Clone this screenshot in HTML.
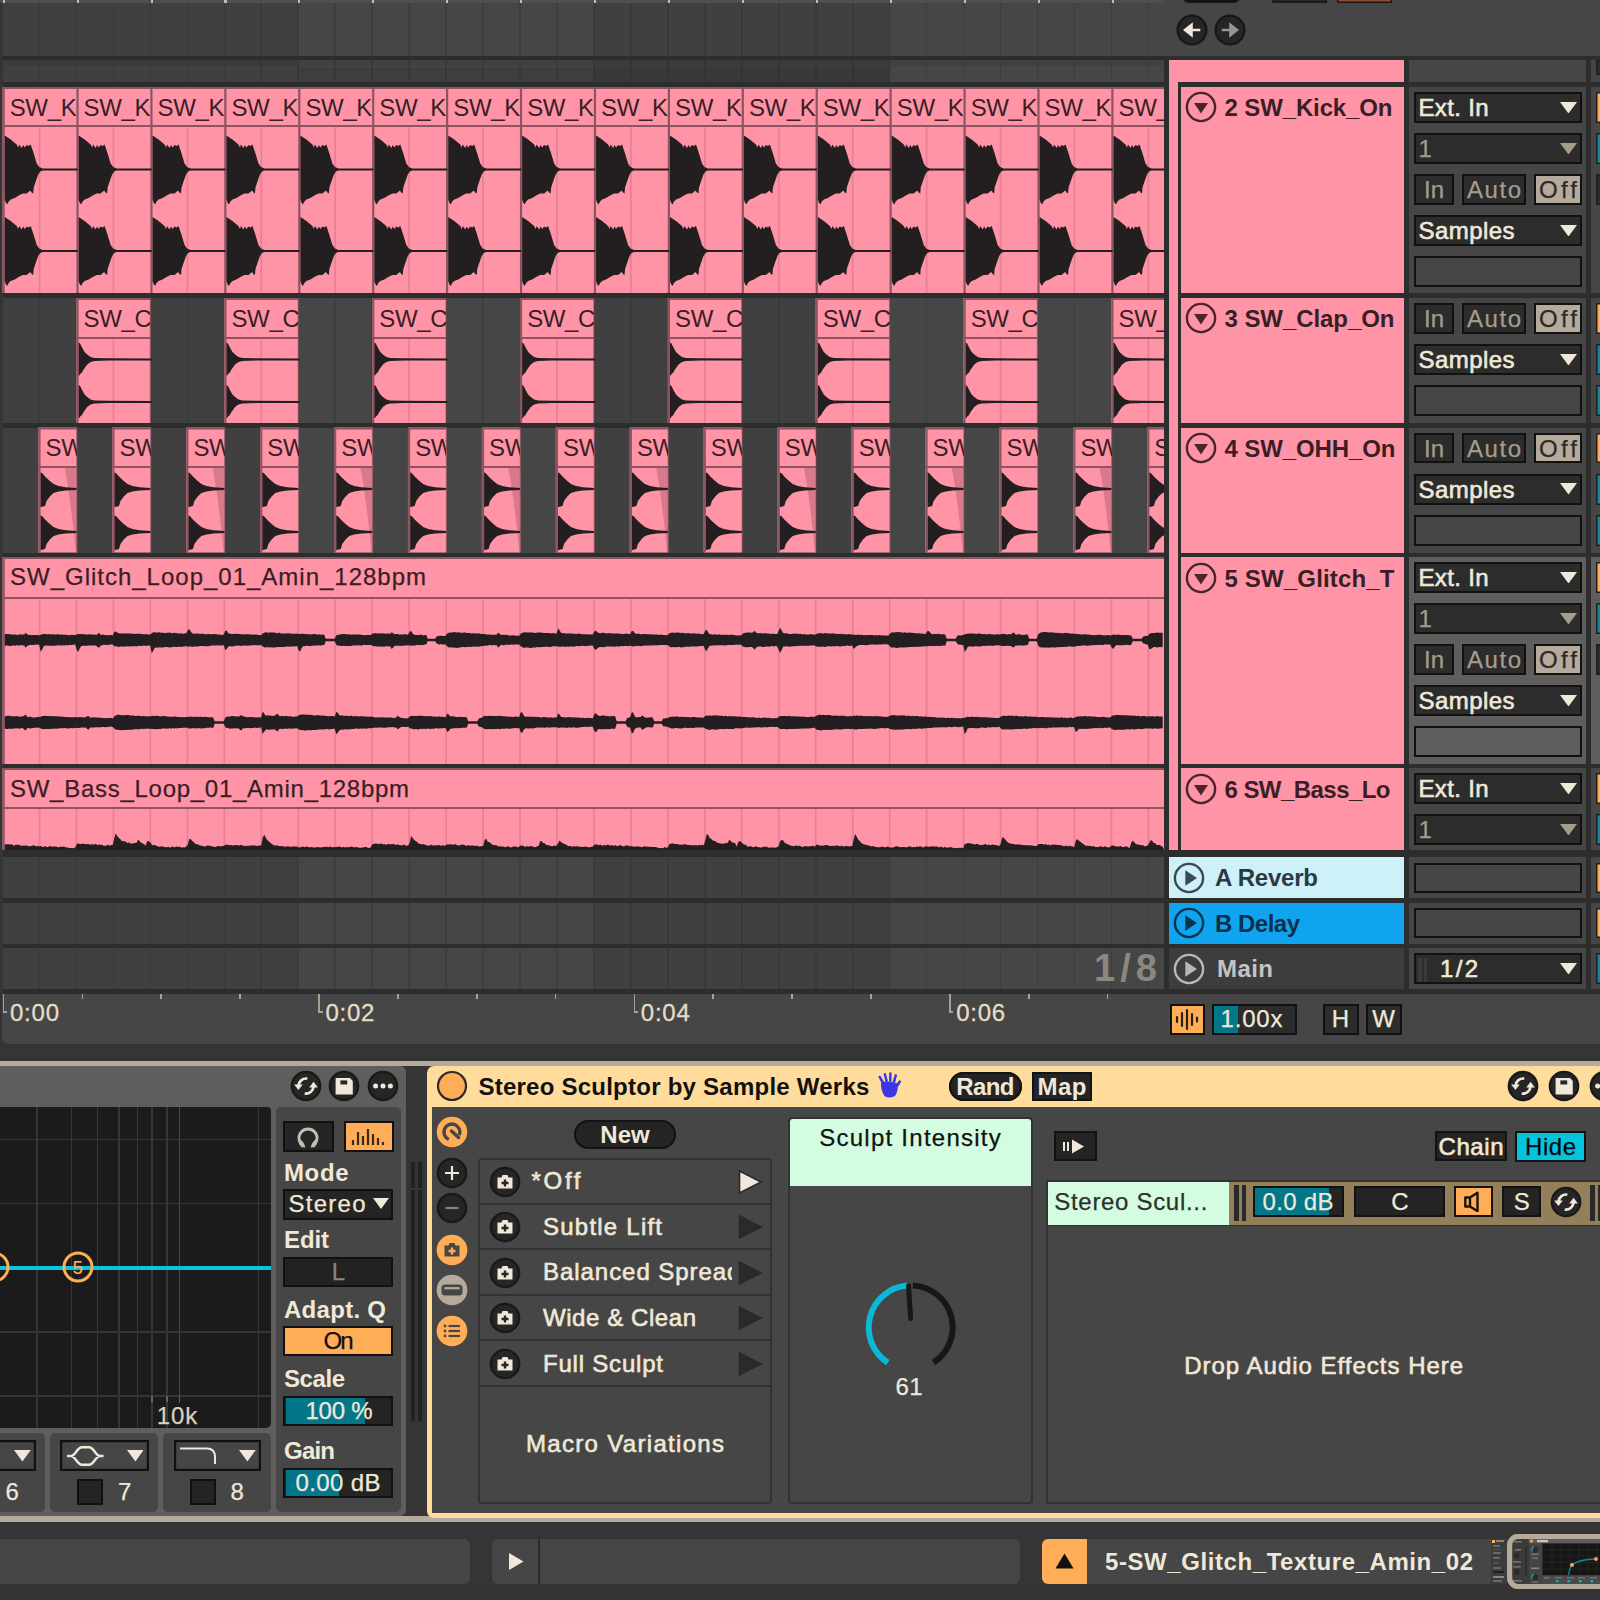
<!DOCTYPE html>
<html><head><meta charset="utf-8"><title>Live</title><style>html,body{margin:0;padding:0;background:#353535;}
body{width:1600px;height:1600px;overflow:hidden;position:relative;font-family:"Liberation Sans",sans-serif;}
#r{position:absolute;left:0;top:0;width:1600px;height:1600px;overflow:hidden;}
#r div,#r svg.abs{position:absolute;}
.t{white-space:nowrap;}
.cl{overflow:hidden;}
.cl span{position:absolute;top:6.6px;font-size:24px;line-height:24px;white-space:nowrap;color:#3a1e26;}
</style></head><body><div id="r">
<div style="left:0px;top:0px;width:4px;height:1062px;background:#353535;"></div>
<div style="left:2.5px;top:0px;width:295.68px;height:994px;background:#404040;"></div>
<div style="left:298.18px;top:0px;width:295.68px;height:994px;background:#464646;"></div>
<div style="left:593.86px;top:0px;width:295.68px;height:994px;background:#404040;"></div>
<div style="left:889.54px;top:0px;width:274.46px;height:994px;background:#464646;"></div>
<div style="left:38.71px;top:3px;width:1.7px;height:991px;background:rgba(0,0,0,0.10);"></div>
<div style="left:75.67px;top:3px;width:1.7px;height:991px;background:rgba(0,0,0,0.10);"></div>
<div style="left:112.63px;top:3px;width:1.7px;height:991px;background:rgba(0,0,0,0.10);"></div>
<div style="left:149.59px;top:3px;width:1.7px;height:991px;background:rgba(0,0,0,0.10);"></div>
<div style="left:186.55px;top:3px;width:1.7px;height:991px;background:rgba(0,0,0,0.10);"></div>
<div style="left:223.51px;top:3px;width:1.7px;height:991px;background:rgba(0,0,0,0.10);"></div>
<div style="left:260.47px;top:3px;width:1.7px;height:991px;background:rgba(0,0,0,0.10);"></div>
<div style="left:297.43px;top:3px;width:1.7px;height:991px;background:rgba(0,0,0,0.10);"></div>
<div style="left:334.39px;top:3px;width:1.7px;height:991px;background:rgba(0,0,0,0.10);"></div>
<div style="left:371.35px;top:3px;width:1.7px;height:991px;background:rgba(0,0,0,0.10);"></div>
<div style="left:408.31px;top:3px;width:1.7px;height:991px;background:rgba(0,0,0,0.10);"></div>
<div style="left:445.27px;top:3px;width:1.7px;height:991px;background:rgba(0,0,0,0.10);"></div>
<div style="left:482.23px;top:3px;width:1.7px;height:991px;background:rgba(0,0,0,0.10);"></div>
<div style="left:519.19px;top:3px;width:1.7px;height:991px;background:rgba(0,0,0,0.10);"></div>
<div style="left:556.15px;top:3px;width:1.7px;height:991px;background:rgba(0,0,0,0.10);"></div>
<div style="left:593.11px;top:3px;width:1.7px;height:991px;background:rgba(0,0,0,0.10);"></div>
<div style="left:630.07px;top:3px;width:1.7px;height:991px;background:rgba(0,0,0,0.10);"></div>
<div style="left:667.03px;top:3px;width:1.7px;height:991px;background:rgba(0,0,0,0.10);"></div>
<div style="left:703.99px;top:3px;width:1.7px;height:991px;background:rgba(0,0,0,0.10);"></div>
<div style="left:740.95px;top:3px;width:1.7px;height:991px;background:rgba(0,0,0,0.10);"></div>
<div style="left:777.91px;top:3px;width:1.7px;height:991px;background:rgba(0,0,0,0.10);"></div>
<div style="left:814.87px;top:3px;width:1.7px;height:991px;background:rgba(0,0,0,0.10);"></div>
<div style="left:851.83px;top:3px;width:1.7px;height:991px;background:rgba(0,0,0,0.10);"></div>
<div style="left:888.79px;top:3px;width:1.7px;height:991px;background:rgba(0,0,0,0.10);"></div>
<div style="left:925.75px;top:3px;width:1.7px;height:991px;background:rgba(0,0,0,0.10);"></div>
<div style="left:962.71px;top:3px;width:1.7px;height:991px;background:rgba(0,0,0,0.10);"></div>
<div style="left:999.67px;top:3px;width:1.7px;height:991px;background:rgba(0,0,0,0.10);"></div>
<div style="left:1036.63px;top:3px;width:1.7px;height:991px;background:rgba(0,0,0,0.10);"></div>
<div style="left:1073.59px;top:3px;width:1.7px;height:991px;background:rgba(0,0,0,0.10);"></div>
<div style="left:1110.55px;top:3px;width:1.7px;height:991px;background:rgba(0,0,0,0.10);"></div>
<div style="left:1147.51px;top:3px;width:1.7px;height:991px;background:rgba(0,0,0,0.10);"></div>
<div style="left:0px;top:0px;width:1164px;height:3px;background:#4f4f4f;"></div>
<div style="left:2.7px;top:0px;width:2.1px;height:3px;background:#c4bca6;"></div>
<div style="left:76.62px;top:0px;width:2.1px;height:3px;background:#c4bca6;"></div>
<div style="left:150.54px;top:0px;width:2.1px;height:3px;background:#c4bca6;"></div>
<div style="left:224.46px;top:0px;width:2.1px;height:3px;background:#c4bca6;"></div>
<div style="left:298.38px;top:0px;width:2.1px;height:3px;background:#c4bca6;"></div>
<div style="left:372.3px;top:0px;width:2.1px;height:3px;background:#c4bca6;"></div>
<div style="left:446.22px;top:0px;width:2.1px;height:3px;background:#c4bca6;"></div>
<div style="left:520.14px;top:0px;width:2.1px;height:3px;background:#c4bca6;"></div>
<div style="left:594.06px;top:0px;width:2.1px;height:3px;background:#c4bca6;"></div>
<div style="left:667.98px;top:0px;width:2.1px;height:3px;background:#c4bca6;"></div>
<div style="left:741.9px;top:0px;width:2.1px;height:3px;background:#c4bca6;"></div>
<div style="left:815.82px;top:0px;width:2.1px;height:3px;background:#c4bca6;"></div>
<div style="left:889.74px;top:0px;width:2.1px;height:3px;background:#c4bca6;"></div>
<div style="left:963.66px;top:0px;width:2.1px;height:3px;background:#c4bca6;"></div>
<div style="left:1037.58px;top:0px;width:2.1px;height:3px;background:#c4bca6;"></div>
<div style="left:1111.5px;top:0px;width:2.1px;height:3px;background:#c4bca6;"></div>
<div style="left:298.18px;top:67px;width:591.36px;height:15px;background:rgba(0,0,0,0.10);"></div>
<div style="left:4px;top:60px;width:1160px;height:6px;background:rgba(0,0,0,0.07);"></div>
<div style="left:3px;top:56px;width:1161px;height:4px;background:#2d2d2d;"></div>
<div style="left:3px;top:82px;width:1161px;height:5px;background:#2d2d2d;"></div>
<div style="left:3px;top:293px;width:1161px;height:5px;background:#2d2d2d;"></div>
<div style="left:3px;top:423px;width:1161px;height:4.5px;background:#2d2d2d;"></div>
<div style="left:3px;top:552.5px;width:1161px;height:4.5px;background:#2d2d2d;"></div>
<div style="left:3px;top:764px;width:1161px;height:4px;background:#2d2d2d;"></div>
<div style="left:3px;top:850px;width:1161px;height:7px;background:#2d2d2d;"></div>
<div style="left:3px;top:897.5px;width:1161px;height:5.5px;background:#2d2d2d;"></div>
<div style="left:3px;top:943.75px;width:1161px;height:4.25px;background:#2d2d2d;"></div>
<div style="left:3px;top:988.75px;width:1161px;height:5.25px;background:#2d2d2d;"></div>
<svg class="abs" style="left:0;top:0" width="1164" height="994" viewBox="0 0 1164 994">
<rect x="2.5" y="87" width="1161.5" height="206" fill="#ff94a6"/>
<rect x="2.5" y="87" width="1161.5" height="2" fill="#8c5561"/>
<rect x="2.5" y="125" width="1161.5" height="2" fill="#8c5561"/>
<rect x="2.50" y="87" width="2.2" height="206" fill="#8c5561"/>
<rect x="38.71" y="127" width="1.7" height="166" fill="rgba(120,40,60,0.18)"/>
<rect x="76.42" y="87" width="2.2" height="206" fill="#8c5561"/>
<rect x="112.63" y="127" width="1.7" height="166" fill="rgba(120,40,60,0.18)"/>
<rect x="150.34" y="87" width="2.2" height="206" fill="#8c5561"/>
<rect x="186.55" y="127" width="1.7" height="166" fill="rgba(120,40,60,0.18)"/>
<rect x="224.26" y="87" width="2.2" height="206" fill="#8c5561"/>
<rect x="260.47" y="127" width="1.7" height="166" fill="rgba(120,40,60,0.18)"/>
<rect x="298.18" y="87" width="2.2" height="206" fill="#8c5561"/>
<rect x="334.39" y="127" width="1.7" height="166" fill="rgba(120,40,60,0.18)"/>
<rect x="372.10" y="87" width="2.2" height="206" fill="#8c5561"/>
<rect x="408.31" y="127" width="1.7" height="166" fill="rgba(120,40,60,0.18)"/>
<rect x="446.02" y="87" width="2.2" height="206" fill="#8c5561"/>
<rect x="482.23" y="127" width="1.7" height="166" fill="rgba(120,40,60,0.18)"/>
<rect x="519.94" y="87" width="2.2" height="206" fill="#8c5561"/>
<rect x="556.15" y="127" width="1.7" height="166" fill="rgba(120,40,60,0.18)"/>
<rect x="593.86" y="87" width="2.2" height="206" fill="#8c5561"/>
<rect x="630.07" y="127" width="1.7" height="166" fill="rgba(120,40,60,0.18)"/>
<rect x="667.78" y="87" width="2.2" height="206" fill="#8c5561"/>
<rect x="703.99" y="127" width="1.7" height="166" fill="rgba(120,40,60,0.18)"/>
<rect x="741.70" y="87" width="2.2" height="206" fill="#8c5561"/>
<rect x="777.91" y="127" width="1.7" height="166" fill="rgba(120,40,60,0.18)"/>
<rect x="815.62" y="87" width="2.2" height="206" fill="#8c5561"/>
<rect x="851.83" y="127" width="1.7" height="166" fill="rgba(120,40,60,0.18)"/>
<rect x="889.54" y="87" width="2.2" height="206" fill="#8c5561"/>
<rect x="925.75" y="127" width="1.7" height="166" fill="rgba(120,40,60,0.18)"/>
<rect x="963.46" y="87" width="2.2" height="206" fill="#8c5561"/>
<rect x="999.67" y="127" width="1.7" height="166" fill="rgba(120,40,60,0.18)"/>
<rect x="1037.38" y="87" width="2.2" height="206" fill="#8c5561"/>
<rect x="1073.59" y="127" width="1.7" height="166" fill="rgba(120,40,60,0.18)"/>
<rect x="1111.30" y="87" width="2.2" height="206" fill="#8c5561"/>
<rect x="1147.51" y="127" width="1.7" height="166" fill="rgba(120,40,60,0.18)"/>
<g fill="#231f20" clip-path="url(#cpA)">
</g>
<path transform="translate(4.70,169.5)" d="M0,-34 L3,-32 L6,-30 L12,-25 L13.5,-22 L14.5,-25 L17,-21.5 L18.5,-24.5 L20,-22 L22,-24.5 L24,-23.5 L26,-25 L27,-22 L29,-16 L32,-6 L34.5,-2.5 L38,-1.1 L73,-1.1 L73,1.1 L38,1.1 L35.5,2 L33.5,5 L31,12 L29,18 L28.5,24 L27,23 L25.5,21 L22,24 L18,24 L14,26 L10,28.5 L6,30 L4,32 L2.5,35 L1,33 L0,30Z" fill="#231f20"/>
<path transform="translate(4.70,251)" d="M0,-34 L3,-32 L6,-30 L12,-25 L13.5,-22 L14.5,-25 L17,-21.5 L18.5,-24.5 L20,-22 L22,-24.5 L24,-23.5 L26,-25 L27,-22 L29,-16 L32,-6 L34.5,-2.5 L38,-1.1 L73,-1.1 L73,1.1 L38,1.1 L35.5,2 L33.5,5 L31,12 L29,18 L28.5,24 L27,23 L25.5,21 L22,24 L18,24 L14,26 L10,28.5 L6,30 L4,32 L2.5,35 L1,33 L0,30Z" fill="#231f20"/>
<path transform="translate(78.62,169.5)" d="M0,-34 L3,-32 L6,-30 L12,-25 L13.5,-22 L14.5,-25 L17,-21.5 L18.5,-24.5 L20,-22 L22,-24.5 L24,-23.5 L26,-25 L27,-22 L29,-16 L32,-6 L34.5,-2.5 L38,-1.1 L73,-1.1 L73,1.1 L38,1.1 L35.5,2 L33.5,5 L31,12 L29,18 L28.5,24 L27,23 L25.5,21 L22,24 L18,24 L14,26 L10,28.5 L6,30 L4,32 L2.5,35 L1,33 L0,30Z" fill="#231f20"/>
<path transform="translate(78.62,251)" d="M0,-34 L3,-32 L6,-30 L12,-25 L13.5,-22 L14.5,-25 L17,-21.5 L18.5,-24.5 L20,-22 L22,-24.5 L24,-23.5 L26,-25 L27,-22 L29,-16 L32,-6 L34.5,-2.5 L38,-1.1 L73,-1.1 L73,1.1 L38,1.1 L35.5,2 L33.5,5 L31,12 L29,18 L28.5,24 L27,23 L25.5,21 L22,24 L18,24 L14,26 L10,28.5 L6,30 L4,32 L2.5,35 L1,33 L0,30Z" fill="#231f20"/>
<path transform="translate(152.54,169.5)" d="M0,-34 L3,-32 L6,-30 L12,-25 L13.5,-22 L14.5,-25 L17,-21.5 L18.5,-24.5 L20,-22 L22,-24.5 L24,-23.5 L26,-25 L27,-22 L29,-16 L32,-6 L34.5,-2.5 L38,-1.1 L73,-1.1 L73,1.1 L38,1.1 L35.5,2 L33.5,5 L31,12 L29,18 L28.5,24 L27,23 L25.5,21 L22,24 L18,24 L14,26 L10,28.5 L6,30 L4,32 L2.5,35 L1,33 L0,30Z" fill="#231f20"/>
<path transform="translate(152.54,251)" d="M0,-34 L3,-32 L6,-30 L12,-25 L13.5,-22 L14.5,-25 L17,-21.5 L18.5,-24.5 L20,-22 L22,-24.5 L24,-23.5 L26,-25 L27,-22 L29,-16 L32,-6 L34.5,-2.5 L38,-1.1 L73,-1.1 L73,1.1 L38,1.1 L35.5,2 L33.5,5 L31,12 L29,18 L28.5,24 L27,23 L25.5,21 L22,24 L18,24 L14,26 L10,28.5 L6,30 L4,32 L2.5,35 L1,33 L0,30Z" fill="#231f20"/>
<path transform="translate(226.46,169.5)" d="M0,-34 L3,-32 L6,-30 L12,-25 L13.5,-22 L14.5,-25 L17,-21.5 L18.5,-24.5 L20,-22 L22,-24.5 L24,-23.5 L26,-25 L27,-22 L29,-16 L32,-6 L34.5,-2.5 L38,-1.1 L73,-1.1 L73,1.1 L38,1.1 L35.5,2 L33.5,5 L31,12 L29,18 L28.5,24 L27,23 L25.5,21 L22,24 L18,24 L14,26 L10,28.5 L6,30 L4,32 L2.5,35 L1,33 L0,30Z" fill="#231f20"/>
<path transform="translate(226.46,251)" d="M0,-34 L3,-32 L6,-30 L12,-25 L13.5,-22 L14.5,-25 L17,-21.5 L18.5,-24.5 L20,-22 L22,-24.5 L24,-23.5 L26,-25 L27,-22 L29,-16 L32,-6 L34.5,-2.5 L38,-1.1 L73,-1.1 L73,1.1 L38,1.1 L35.5,2 L33.5,5 L31,12 L29,18 L28.5,24 L27,23 L25.5,21 L22,24 L18,24 L14,26 L10,28.5 L6,30 L4,32 L2.5,35 L1,33 L0,30Z" fill="#231f20"/>
<path transform="translate(300.38,169.5)" d="M0,-34 L3,-32 L6,-30 L12,-25 L13.5,-22 L14.5,-25 L17,-21.5 L18.5,-24.5 L20,-22 L22,-24.5 L24,-23.5 L26,-25 L27,-22 L29,-16 L32,-6 L34.5,-2.5 L38,-1.1 L73,-1.1 L73,1.1 L38,1.1 L35.5,2 L33.5,5 L31,12 L29,18 L28.5,24 L27,23 L25.5,21 L22,24 L18,24 L14,26 L10,28.5 L6,30 L4,32 L2.5,35 L1,33 L0,30Z" fill="#231f20"/>
<path transform="translate(300.38,251)" d="M0,-34 L3,-32 L6,-30 L12,-25 L13.5,-22 L14.5,-25 L17,-21.5 L18.5,-24.5 L20,-22 L22,-24.5 L24,-23.5 L26,-25 L27,-22 L29,-16 L32,-6 L34.5,-2.5 L38,-1.1 L73,-1.1 L73,1.1 L38,1.1 L35.5,2 L33.5,5 L31,12 L29,18 L28.5,24 L27,23 L25.5,21 L22,24 L18,24 L14,26 L10,28.5 L6,30 L4,32 L2.5,35 L1,33 L0,30Z" fill="#231f20"/>
<path transform="translate(374.30,169.5)" d="M0,-34 L3,-32 L6,-30 L12,-25 L13.5,-22 L14.5,-25 L17,-21.5 L18.5,-24.5 L20,-22 L22,-24.5 L24,-23.5 L26,-25 L27,-22 L29,-16 L32,-6 L34.5,-2.5 L38,-1.1 L73,-1.1 L73,1.1 L38,1.1 L35.5,2 L33.5,5 L31,12 L29,18 L28.5,24 L27,23 L25.5,21 L22,24 L18,24 L14,26 L10,28.5 L6,30 L4,32 L2.5,35 L1,33 L0,30Z" fill="#231f20"/>
<path transform="translate(374.30,251)" d="M0,-34 L3,-32 L6,-30 L12,-25 L13.5,-22 L14.5,-25 L17,-21.5 L18.5,-24.5 L20,-22 L22,-24.5 L24,-23.5 L26,-25 L27,-22 L29,-16 L32,-6 L34.5,-2.5 L38,-1.1 L73,-1.1 L73,1.1 L38,1.1 L35.5,2 L33.5,5 L31,12 L29,18 L28.5,24 L27,23 L25.5,21 L22,24 L18,24 L14,26 L10,28.5 L6,30 L4,32 L2.5,35 L1,33 L0,30Z" fill="#231f20"/>
<path transform="translate(448.22,169.5)" d="M0,-34 L3,-32 L6,-30 L12,-25 L13.5,-22 L14.5,-25 L17,-21.5 L18.5,-24.5 L20,-22 L22,-24.5 L24,-23.5 L26,-25 L27,-22 L29,-16 L32,-6 L34.5,-2.5 L38,-1.1 L73,-1.1 L73,1.1 L38,1.1 L35.5,2 L33.5,5 L31,12 L29,18 L28.5,24 L27,23 L25.5,21 L22,24 L18,24 L14,26 L10,28.5 L6,30 L4,32 L2.5,35 L1,33 L0,30Z" fill="#231f20"/>
<path transform="translate(448.22,251)" d="M0,-34 L3,-32 L6,-30 L12,-25 L13.5,-22 L14.5,-25 L17,-21.5 L18.5,-24.5 L20,-22 L22,-24.5 L24,-23.5 L26,-25 L27,-22 L29,-16 L32,-6 L34.5,-2.5 L38,-1.1 L73,-1.1 L73,1.1 L38,1.1 L35.5,2 L33.5,5 L31,12 L29,18 L28.5,24 L27,23 L25.5,21 L22,24 L18,24 L14,26 L10,28.5 L6,30 L4,32 L2.5,35 L1,33 L0,30Z" fill="#231f20"/>
<path transform="translate(522.14,169.5)" d="M0,-34 L3,-32 L6,-30 L12,-25 L13.5,-22 L14.5,-25 L17,-21.5 L18.5,-24.5 L20,-22 L22,-24.5 L24,-23.5 L26,-25 L27,-22 L29,-16 L32,-6 L34.5,-2.5 L38,-1.1 L73,-1.1 L73,1.1 L38,1.1 L35.5,2 L33.5,5 L31,12 L29,18 L28.5,24 L27,23 L25.5,21 L22,24 L18,24 L14,26 L10,28.5 L6,30 L4,32 L2.5,35 L1,33 L0,30Z" fill="#231f20"/>
<path transform="translate(522.14,251)" d="M0,-34 L3,-32 L6,-30 L12,-25 L13.5,-22 L14.5,-25 L17,-21.5 L18.5,-24.5 L20,-22 L22,-24.5 L24,-23.5 L26,-25 L27,-22 L29,-16 L32,-6 L34.5,-2.5 L38,-1.1 L73,-1.1 L73,1.1 L38,1.1 L35.5,2 L33.5,5 L31,12 L29,18 L28.5,24 L27,23 L25.5,21 L22,24 L18,24 L14,26 L10,28.5 L6,30 L4,32 L2.5,35 L1,33 L0,30Z" fill="#231f20"/>
<path transform="translate(596.06,169.5)" d="M0,-34 L3,-32 L6,-30 L12,-25 L13.5,-22 L14.5,-25 L17,-21.5 L18.5,-24.5 L20,-22 L22,-24.5 L24,-23.5 L26,-25 L27,-22 L29,-16 L32,-6 L34.5,-2.5 L38,-1.1 L73,-1.1 L73,1.1 L38,1.1 L35.5,2 L33.5,5 L31,12 L29,18 L28.5,24 L27,23 L25.5,21 L22,24 L18,24 L14,26 L10,28.5 L6,30 L4,32 L2.5,35 L1,33 L0,30Z" fill="#231f20"/>
<path transform="translate(596.06,251)" d="M0,-34 L3,-32 L6,-30 L12,-25 L13.5,-22 L14.5,-25 L17,-21.5 L18.5,-24.5 L20,-22 L22,-24.5 L24,-23.5 L26,-25 L27,-22 L29,-16 L32,-6 L34.5,-2.5 L38,-1.1 L73,-1.1 L73,1.1 L38,1.1 L35.5,2 L33.5,5 L31,12 L29,18 L28.5,24 L27,23 L25.5,21 L22,24 L18,24 L14,26 L10,28.5 L6,30 L4,32 L2.5,35 L1,33 L0,30Z" fill="#231f20"/>
<path transform="translate(669.98,169.5)" d="M0,-34 L3,-32 L6,-30 L12,-25 L13.5,-22 L14.5,-25 L17,-21.5 L18.5,-24.5 L20,-22 L22,-24.5 L24,-23.5 L26,-25 L27,-22 L29,-16 L32,-6 L34.5,-2.5 L38,-1.1 L73,-1.1 L73,1.1 L38,1.1 L35.5,2 L33.5,5 L31,12 L29,18 L28.5,24 L27,23 L25.5,21 L22,24 L18,24 L14,26 L10,28.5 L6,30 L4,32 L2.5,35 L1,33 L0,30Z" fill="#231f20"/>
<path transform="translate(669.98,251)" d="M0,-34 L3,-32 L6,-30 L12,-25 L13.5,-22 L14.5,-25 L17,-21.5 L18.5,-24.5 L20,-22 L22,-24.5 L24,-23.5 L26,-25 L27,-22 L29,-16 L32,-6 L34.5,-2.5 L38,-1.1 L73,-1.1 L73,1.1 L38,1.1 L35.5,2 L33.5,5 L31,12 L29,18 L28.5,24 L27,23 L25.5,21 L22,24 L18,24 L14,26 L10,28.5 L6,30 L4,32 L2.5,35 L1,33 L0,30Z" fill="#231f20"/>
<path transform="translate(743.90,169.5)" d="M0,-34 L3,-32 L6,-30 L12,-25 L13.5,-22 L14.5,-25 L17,-21.5 L18.5,-24.5 L20,-22 L22,-24.5 L24,-23.5 L26,-25 L27,-22 L29,-16 L32,-6 L34.5,-2.5 L38,-1.1 L73,-1.1 L73,1.1 L38,1.1 L35.5,2 L33.5,5 L31,12 L29,18 L28.5,24 L27,23 L25.5,21 L22,24 L18,24 L14,26 L10,28.5 L6,30 L4,32 L2.5,35 L1,33 L0,30Z" fill="#231f20"/>
<path transform="translate(743.90,251)" d="M0,-34 L3,-32 L6,-30 L12,-25 L13.5,-22 L14.5,-25 L17,-21.5 L18.5,-24.5 L20,-22 L22,-24.5 L24,-23.5 L26,-25 L27,-22 L29,-16 L32,-6 L34.5,-2.5 L38,-1.1 L73,-1.1 L73,1.1 L38,1.1 L35.5,2 L33.5,5 L31,12 L29,18 L28.5,24 L27,23 L25.5,21 L22,24 L18,24 L14,26 L10,28.5 L6,30 L4,32 L2.5,35 L1,33 L0,30Z" fill="#231f20"/>
<path transform="translate(817.82,169.5)" d="M0,-34 L3,-32 L6,-30 L12,-25 L13.5,-22 L14.5,-25 L17,-21.5 L18.5,-24.5 L20,-22 L22,-24.5 L24,-23.5 L26,-25 L27,-22 L29,-16 L32,-6 L34.5,-2.5 L38,-1.1 L73,-1.1 L73,1.1 L38,1.1 L35.5,2 L33.5,5 L31,12 L29,18 L28.5,24 L27,23 L25.5,21 L22,24 L18,24 L14,26 L10,28.5 L6,30 L4,32 L2.5,35 L1,33 L0,30Z" fill="#231f20"/>
<path transform="translate(817.82,251)" d="M0,-34 L3,-32 L6,-30 L12,-25 L13.5,-22 L14.5,-25 L17,-21.5 L18.5,-24.5 L20,-22 L22,-24.5 L24,-23.5 L26,-25 L27,-22 L29,-16 L32,-6 L34.5,-2.5 L38,-1.1 L73,-1.1 L73,1.1 L38,1.1 L35.5,2 L33.5,5 L31,12 L29,18 L28.5,24 L27,23 L25.5,21 L22,24 L18,24 L14,26 L10,28.5 L6,30 L4,32 L2.5,35 L1,33 L0,30Z" fill="#231f20"/>
<path transform="translate(891.74,169.5)" d="M0,-34 L3,-32 L6,-30 L12,-25 L13.5,-22 L14.5,-25 L17,-21.5 L18.5,-24.5 L20,-22 L22,-24.5 L24,-23.5 L26,-25 L27,-22 L29,-16 L32,-6 L34.5,-2.5 L38,-1.1 L73,-1.1 L73,1.1 L38,1.1 L35.5,2 L33.5,5 L31,12 L29,18 L28.5,24 L27,23 L25.5,21 L22,24 L18,24 L14,26 L10,28.5 L6,30 L4,32 L2.5,35 L1,33 L0,30Z" fill="#231f20"/>
<path transform="translate(891.74,251)" d="M0,-34 L3,-32 L6,-30 L12,-25 L13.5,-22 L14.5,-25 L17,-21.5 L18.5,-24.5 L20,-22 L22,-24.5 L24,-23.5 L26,-25 L27,-22 L29,-16 L32,-6 L34.5,-2.5 L38,-1.1 L73,-1.1 L73,1.1 L38,1.1 L35.5,2 L33.5,5 L31,12 L29,18 L28.5,24 L27,23 L25.5,21 L22,24 L18,24 L14,26 L10,28.5 L6,30 L4,32 L2.5,35 L1,33 L0,30Z" fill="#231f20"/>
<path transform="translate(965.66,169.5)" d="M0,-34 L3,-32 L6,-30 L12,-25 L13.5,-22 L14.5,-25 L17,-21.5 L18.5,-24.5 L20,-22 L22,-24.5 L24,-23.5 L26,-25 L27,-22 L29,-16 L32,-6 L34.5,-2.5 L38,-1.1 L73,-1.1 L73,1.1 L38,1.1 L35.5,2 L33.5,5 L31,12 L29,18 L28.5,24 L27,23 L25.5,21 L22,24 L18,24 L14,26 L10,28.5 L6,30 L4,32 L2.5,35 L1,33 L0,30Z" fill="#231f20"/>
<path transform="translate(965.66,251)" d="M0,-34 L3,-32 L6,-30 L12,-25 L13.5,-22 L14.5,-25 L17,-21.5 L18.5,-24.5 L20,-22 L22,-24.5 L24,-23.5 L26,-25 L27,-22 L29,-16 L32,-6 L34.5,-2.5 L38,-1.1 L73,-1.1 L73,1.1 L38,1.1 L35.5,2 L33.5,5 L31,12 L29,18 L28.5,24 L27,23 L25.5,21 L22,24 L18,24 L14,26 L10,28.5 L6,30 L4,32 L2.5,35 L1,33 L0,30Z" fill="#231f20"/>
<path transform="translate(1039.58,169.5)" d="M0,-34 L3,-32 L6,-30 L12,-25 L13.5,-22 L14.5,-25 L17,-21.5 L18.5,-24.5 L20,-22 L22,-24.5 L24,-23.5 L26,-25 L27,-22 L29,-16 L32,-6 L34.5,-2.5 L38,-1.1 L73,-1.1 L73,1.1 L38,1.1 L35.5,2 L33.5,5 L31,12 L29,18 L28.5,24 L27,23 L25.5,21 L22,24 L18,24 L14,26 L10,28.5 L6,30 L4,32 L2.5,35 L1,33 L0,30Z" fill="#231f20"/>
<path transform="translate(1039.58,251)" d="M0,-34 L3,-32 L6,-30 L12,-25 L13.5,-22 L14.5,-25 L17,-21.5 L18.5,-24.5 L20,-22 L22,-24.5 L24,-23.5 L26,-25 L27,-22 L29,-16 L32,-6 L34.5,-2.5 L38,-1.1 L73,-1.1 L73,1.1 L38,1.1 L35.5,2 L33.5,5 L31,12 L29,18 L28.5,24 L27,23 L25.5,21 L22,24 L18,24 L14,26 L10,28.5 L6,30 L4,32 L2.5,35 L1,33 L0,30Z" fill="#231f20"/>
<path transform="translate(1113.50,169.5)" d="M0,-34 L3,-32 L6,-30 L12,-25 L13.5,-22 L14.5,-25 L17,-21.5 L18.5,-24.5 L20,-22 L22,-24.5 L24,-23.5 L26,-25 L27,-22 L29,-16 L32,-6 L34.5,-2.5 L38,-1.1 L73,-1.1 L73,1.1 L38,1.1 L35.5,2 L33.5,5 L31,12 L29,18 L28.5,24 L27,23 L25.5,21 L22,24 L18,24 L14,26 L10,28.5 L6,30 L4,32 L2.5,35 L1,33 L0,30Z" fill="#231f20"/>
<path transform="translate(1113.50,251)" d="M0,-34 L3,-32 L6,-30 L12,-25 L13.5,-22 L14.5,-25 L17,-21.5 L18.5,-24.5 L20,-22 L22,-24.5 L24,-23.5 L26,-25 L27,-22 L29,-16 L32,-6 L34.5,-2.5 L38,-1.1 L73,-1.1 L73,1.1 L38,1.1 L35.5,2 L33.5,5 L31,12 L29,18 L28.5,24 L27,23 L25.5,21 L22,24 L18,24 L14,26 L10,28.5 L6,30 L4,32 L2.5,35 L1,33 L0,30Z" fill="#231f20"/>
<rect x="76.42" y="298" width="73.92" height="125" fill="#ff94a6"/>
<rect x="76.42" y="298" width="73.92" height="2" fill="#8c5561"/>
<rect x="76.42" y="337" width="73.92" height="2" fill="#8c5561"/>
<rect x="76.42" y="298" width="2.2" height="125" fill="#8c5561"/>
<rect x="149.74" y="298" width="1.2" height="125" fill="#8c5561" opacity="0.6"/>
<rect x="112.63" y="339" width="1.7" height="84" fill="rgba(120,40,60,0.18)"/>
<path transform="translate(78.62,359.5)" d="M0,-17 L1.5,-16 L4,-11 L6,-7.5 L8.6,-5 L12,-2.5 L16,-1.6 L30,-1.2 L73,-0.9 L73,0.9 L30,1.1 L16,1.5 L12,2.5 L8.6,5 L5,10 L3,13.5 L2,14 L0.7,16 L0,16Z" fill="#231f20"/>
<path transform="translate(78.62,402)" d="M0,-17 L1.5,-16 L4,-11 L6,-7.5 L8.6,-5 L12,-2.5 L16,-1.6 L30,-1.2 L73,-0.9 L73,0.9 L30,1.1 L16,1.5 L12,2.5 L8.6,5 L5,10 L3,13.5 L2,14 L0.7,16 L0,16Z" fill="#231f20"/>
<rect x="224.26" y="298" width="73.92" height="125" fill="#ff94a6"/>
<rect x="224.26" y="298" width="73.92" height="2" fill="#8c5561"/>
<rect x="224.26" y="337" width="73.92" height="2" fill="#8c5561"/>
<rect x="224.26" y="298" width="2.2" height="125" fill="#8c5561"/>
<rect x="297.58" y="298" width="1.2" height="125" fill="#8c5561" opacity="0.6"/>
<rect x="260.47" y="339" width="1.7" height="84" fill="rgba(120,40,60,0.18)"/>
<path transform="translate(226.46,359.5)" d="M0,-17 L1.5,-16 L4,-11 L6,-7.5 L8.6,-5 L12,-2.5 L16,-1.6 L30,-1.2 L73,-0.9 L73,0.9 L30,1.1 L16,1.5 L12,2.5 L8.6,5 L5,10 L3,13.5 L2,14 L0.7,16 L0,16Z" fill="#231f20"/>
<path transform="translate(226.46,402)" d="M0,-17 L1.5,-16 L4,-11 L6,-7.5 L8.6,-5 L12,-2.5 L16,-1.6 L30,-1.2 L73,-0.9 L73,0.9 L30,1.1 L16,1.5 L12,2.5 L8.6,5 L5,10 L3,13.5 L2,14 L0.7,16 L0,16Z" fill="#231f20"/>
<rect x="372.10" y="298" width="73.92" height="125" fill="#ff94a6"/>
<rect x="372.10" y="298" width="73.92" height="2" fill="#8c5561"/>
<rect x="372.10" y="337" width="73.92" height="2" fill="#8c5561"/>
<rect x="372.10" y="298" width="2.2" height="125" fill="#8c5561"/>
<rect x="445.42" y="298" width="1.2" height="125" fill="#8c5561" opacity="0.6"/>
<rect x="408.31" y="339" width="1.7" height="84" fill="rgba(120,40,60,0.18)"/>
<path transform="translate(374.30,359.5)" d="M0,-17 L1.5,-16 L4,-11 L6,-7.5 L8.6,-5 L12,-2.5 L16,-1.6 L30,-1.2 L73,-0.9 L73,0.9 L30,1.1 L16,1.5 L12,2.5 L8.6,5 L5,10 L3,13.5 L2,14 L0.7,16 L0,16Z" fill="#231f20"/>
<path transform="translate(374.30,402)" d="M0,-17 L1.5,-16 L4,-11 L6,-7.5 L8.6,-5 L12,-2.5 L16,-1.6 L30,-1.2 L73,-0.9 L73,0.9 L30,1.1 L16,1.5 L12,2.5 L8.6,5 L5,10 L3,13.5 L2,14 L0.7,16 L0,16Z" fill="#231f20"/>
<rect x="519.94" y="298" width="73.92" height="125" fill="#ff94a6"/>
<rect x="519.94" y="298" width="73.92" height="2" fill="#8c5561"/>
<rect x="519.94" y="337" width="73.92" height="2" fill="#8c5561"/>
<rect x="519.94" y="298" width="2.2" height="125" fill="#8c5561"/>
<rect x="593.26" y="298" width="1.2" height="125" fill="#8c5561" opacity="0.6"/>
<rect x="556.15" y="339" width="1.7" height="84" fill="rgba(120,40,60,0.18)"/>
<path transform="translate(522.14,359.5)" d="M0,-17 L1.5,-16 L4,-11 L6,-7.5 L8.6,-5 L12,-2.5 L16,-1.6 L30,-1.2 L73,-0.9 L73,0.9 L30,1.1 L16,1.5 L12,2.5 L8.6,5 L5,10 L3,13.5 L2,14 L0.7,16 L0,16Z" fill="#231f20"/>
<path transform="translate(522.14,402)" d="M0,-17 L1.5,-16 L4,-11 L6,-7.5 L8.6,-5 L12,-2.5 L16,-1.6 L30,-1.2 L73,-0.9 L73,0.9 L30,1.1 L16,1.5 L12,2.5 L8.6,5 L5,10 L3,13.5 L2,14 L0.7,16 L0,16Z" fill="#231f20"/>
<rect x="667.78" y="298" width="73.92" height="125" fill="#ff94a6"/>
<rect x="667.78" y="298" width="73.92" height="2" fill="#8c5561"/>
<rect x="667.78" y="337" width="73.92" height="2" fill="#8c5561"/>
<rect x="667.78" y="298" width="2.2" height="125" fill="#8c5561"/>
<rect x="741.10" y="298" width="1.2" height="125" fill="#8c5561" opacity="0.6"/>
<rect x="703.99" y="339" width="1.7" height="84" fill="rgba(120,40,60,0.18)"/>
<path transform="translate(669.98,359.5)" d="M0,-17 L1.5,-16 L4,-11 L6,-7.5 L8.6,-5 L12,-2.5 L16,-1.6 L30,-1.2 L73,-0.9 L73,0.9 L30,1.1 L16,1.5 L12,2.5 L8.6,5 L5,10 L3,13.5 L2,14 L0.7,16 L0,16Z" fill="#231f20"/>
<path transform="translate(669.98,402)" d="M0,-17 L1.5,-16 L4,-11 L6,-7.5 L8.6,-5 L12,-2.5 L16,-1.6 L30,-1.2 L73,-0.9 L73,0.9 L30,1.1 L16,1.5 L12,2.5 L8.6,5 L5,10 L3,13.5 L2,14 L0.7,16 L0,16Z" fill="#231f20"/>
<rect x="815.62" y="298" width="73.92" height="125" fill="#ff94a6"/>
<rect x="815.62" y="298" width="73.92" height="2" fill="#8c5561"/>
<rect x="815.62" y="337" width="73.92" height="2" fill="#8c5561"/>
<rect x="815.62" y="298" width="2.2" height="125" fill="#8c5561"/>
<rect x="888.94" y="298" width="1.2" height="125" fill="#8c5561" opacity="0.6"/>
<rect x="851.83" y="339" width="1.7" height="84" fill="rgba(120,40,60,0.18)"/>
<path transform="translate(817.82,359.5)" d="M0,-17 L1.5,-16 L4,-11 L6,-7.5 L8.6,-5 L12,-2.5 L16,-1.6 L30,-1.2 L73,-0.9 L73,0.9 L30,1.1 L16,1.5 L12,2.5 L8.6,5 L5,10 L3,13.5 L2,14 L0.7,16 L0,16Z" fill="#231f20"/>
<path transform="translate(817.82,402)" d="M0,-17 L1.5,-16 L4,-11 L6,-7.5 L8.6,-5 L12,-2.5 L16,-1.6 L30,-1.2 L73,-0.9 L73,0.9 L30,1.1 L16,1.5 L12,2.5 L8.6,5 L5,10 L3,13.5 L2,14 L0.7,16 L0,16Z" fill="#231f20"/>
<rect x="963.46" y="298" width="73.92" height="125" fill="#ff94a6"/>
<rect x="963.46" y="298" width="73.92" height="2" fill="#8c5561"/>
<rect x="963.46" y="337" width="73.92" height="2" fill="#8c5561"/>
<rect x="963.46" y="298" width="2.2" height="125" fill="#8c5561"/>
<rect x="1036.78" y="298" width="1.2" height="125" fill="#8c5561" opacity="0.6"/>
<rect x="999.67" y="339" width="1.7" height="84" fill="rgba(120,40,60,0.18)"/>
<path transform="translate(965.66,359.5)" d="M0,-17 L1.5,-16 L4,-11 L6,-7.5 L8.6,-5 L12,-2.5 L16,-1.6 L30,-1.2 L73,-0.9 L73,0.9 L30,1.1 L16,1.5 L12,2.5 L8.6,5 L5,10 L3,13.5 L2,14 L0.7,16 L0,16Z" fill="#231f20"/>
<path transform="translate(965.66,402)" d="M0,-17 L1.5,-16 L4,-11 L6,-7.5 L8.6,-5 L12,-2.5 L16,-1.6 L30,-1.2 L73,-0.9 L73,0.9 L30,1.1 L16,1.5 L12,2.5 L8.6,5 L5,10 L3,13.5 L2,14 L0.7,16 L0,16Z" fill="#231f20"/>
<rect x="1111.30" y="298" width="52.70" height="125" fill="#ff94a6"/>
<rect x="1111.30" y="298" width="52.70" height="2" fill="#8c5561"/>
<rect x="1111.30" y="337" width="52.70" height="2" fill="#8c5561"/>
<rect x="1111.30" y="298" width="2.2" height="125" fill="#8c5561"/>
<rect x="1147.51" y="339" width="1.7" height="84" fill="rgba(120,40,60,0.18)"/>
<path transform="translate(1113.50,359.5)" d="M0,-17 L1.5,-16 L4,-11 L6,-7.5 L8.6,-5 L12,-2.5 L16,-1.6 L30,-1.2 L73,-0.9 L73,0.9 L30,1.1 L16,1.5 L12,2.5 L8.6,5 L5,10 L3,13.5 L2,14 L0.7,16 L0,16Z" fill="#231f20"/>
<path transform="translate(1113.50,402)" d="M0,-17 L1.5,-16 L4,-11 L6,-7.5 L8.6,-5 L12,-2.5 L16,-1.6 L30,-1.2 L73,-0.9 L73,0.9 L30,1.1 L16,1.5 L12,2.5 L8.6,5 L5,10 L3,13.5 L2,14 L0.7,16 L0,16Z" fill="#231f20"/>
<rect x="38.36" y="427.5" width="38.46" height="125.0" fill="#ff94a6"/>
<rect x="38.36" y="427.5" width="38.46" height="2" fill="#8c5561"/>
<rect x="38.36" y="466" width="38.46" height="2" fill="#8c5561"/>
<path d="M64.82,468 Q70.82,500 75.82,552.5 L76.82,552.5 L76.82,468Z" fill="#d87a8c"/>
<rect x="38.36" y="427.5" width="2.2" height="125.0" fill="#8c5561"/>
<rect x="76.22" y="427.5" width="1.2" height="125.0" fill="#8c5561" opacity="0.6"/>
<path transform="translate(40.56,489)" d="M0,-16.5 L1.5,-16 L5,-12 L9.3,-8 L13,-5 L18,-3 L25,-1.8 L36,-1 L36,1 L25,1.5 L18,2.5 L13,4 L9.3,7.5 L6,12 L4.5,17 L0.5,18 L0,18Z" fill="#231f20"/>
<path transform="translate(40.56,532)" d="M0,-16.5 L1.5,-16 L5,-12 L9.3,-8 L13,-5 L18,-3 L25,-1.8 L36,-1 L36,1 L25,1.5 L18,2.5 L13,4 L9.3,7.5 L6,12 L4.5,17 L0.5,18 L0,18Z" fill="#231f20"/>
<rect x="112.28" y="427.5" width="38.46" height="125.0" fill="#ff94a6"/>
<rect x="112.28" y="427.5" width="38.46" height="2" fill="#8c5561"/>
<rect x="112.28" y="466" width="38.46" height="2" fill="#8c5561"/>
<rect x="112.28" y="427.5" width="2.2" height="125.0" fill="#8c5561"/>
<rect x="150.14" y="427.5" width="1.2" height="125.0" fill="#8c5561" opacity="0.6"/>
<path transform="translate(114.48,489)" d="M0,-16.5 L1.5,-16 L5,-12 L9.3,-8 L13,-5 L18,-3 L25,-1.8 L36,-1 L36,1 L25,1.5 L18,2.5 L13,4 L9.3,7.5 L6,12 L4.5,17 L0.5,18 L0,18Z" fill="#231f20"/>
<path transform="translate(114.48,532)" d="M0,-16.5 L1.5,-16 L5,-12 L9.3,-8 L13,-5 L18,-3 L25,-1.8 L36,-1 L36,1 L25,1.5 L18,2.5 L13,4 L9.3,7.5 L6,12 L4.5,17 L0.5,18 L0,18Z" fill="#231f20"/>
<rect x="186.20" y="427.5" width="38.46" height="125.0" fill="#ff94a6"/>
<rect x="186.20" y="427.5" width="38.46" height="2" fill="#8c5561"/>
<rect x="186.20" y="466" width="38.46" height="2" fill="#8c5561"/>
<path d="M212.66,468 Q218.66,500 223.66,552.5 L224.66,552.5 L224.66,468Z" fill="#d87a8c"/>
<rect x="186.20" y="427.5" width="2.2" height="125.0" fill="#8c5561"/>
<rect x="224.06" y="427.5" width="1.2" height="125.0" fill="#8c5561" opacity="0.6"/>
<path transform="translate(188.40,489)" d="M0,-16.5 L1.5,-16 L5,-12 L9.3,-8 L13,-5 L18,-3 L25,-1.8 L36,-1 L36,1 L25,1.5 L18,2.5 L13,4 L9.3,7.5 L6,12 L4.5,17 L0.5,18 L0,18Z" fill="#231f20"/>
<path transform="translate(188.40,532)" d="M0,-16.5 L1.5,-16 L5,-12 L9.3,-8 L13,-5 L18,-3 L25,-1.8 L36,-1 L36,1 L25,1.5 L18,2.5 L13,4 L9.3,7.5 L6,12 L4.5,17 L0.5,18 L0,18Z" fill="#231f20"/>
<rect x="260.12" y="427.5" width="38.46" height="125.0" fill="#ff94a6"/>
<rect x="260.12" y="427.5" width="38.46" height="2" fill="#8c5561"/>
<rect x="260.12" y="466" width="38.46" height="2" fill="#8c5561"/>
<rect x="260.12" y="427.5" width="2.2" height="125.0" fill="#8c5561"/>
<rect x="297.98" y="427.5" width="1.2" height="125.0" fill="#8c5561" opacity="0.6"/>
<path transform="translate(262.32,489)" d="M0,-16.5 L1.5,-16 L5,-12 L9.3,-8 L13,-5 L18,-3 L25,-1.8 L36,-1 L36,1 L25,1.5 L18,2.5 L13,4 L9.3,7.5 L6,12 L4.5,17 L0.5,18 L0,18Z" fill="#231f20"/>
<path transform="translate(262.32,532)" d="M0,-16.5 L1.5,-16 L5,-12 L9.3,-8 L13,-5 L18,-3 L25,-1.8 L36,-1 L36,1 L25,1.5 L18,2.5 L13,4 L9.3,7.5 L6,12 L4.5,17 L0.5,18 L0,18Z" fill="#231f20"/>
<rect x="334.04" y="427.5" width="38.46" height="125.0" fill="#ff94a6"/>
<rect x="334.04" y="427.5" width="38.46" height="2" fill="#8c5561"/>
<rect x="334.04" y="466" width="38.46" height="2" fill="#8c5561"/>
<path d="M360.50,468 Q366.50,500 371.50,552.5 L372.50,552.5 L372.50,468Z" fill="#d87a8c"/>
<rect x="334.04" y="427.5" width="2.2" height="125.0" fill="#8c5561"/>
<rect x="371.90" y="427.5" width="1.2" height="125.0" fill="#8c5561" opacity="0.6"/>
<path transform="translate(336.24,489)" d="M0,-16.5 L1.5,-16 L5,-12 L9.3,-8 L13,-5 L18,-3 L25,-1.8 L36,-1 L36,1 L25,1.5 L18,2.5 L13,4 L9.3,7.5 L6,12 L4.5,17 L0.5,18 L0,18Z" fill="#231f20"/>
<path transform="translate(336.24,532)" d="M0,-16.5 L1.5,-16 L5,-12 L9.3,-8 L13,-5 L18,-3 L25,-1.8 L36,-1 L36,1 L25,1.5 L18,2.5 L13,4 L9.3,7.5 L6,12 L4.5,17 L0.5,18 L0,18Z" fill="#231f20"/>
<rect x="407.96" y="427.5" width="38.46" height="125.0" fill="#ff94a6"/>
<rect x="407.96" y="427.5" width="38.46" height="2" fill="#8c5561"/>
<rect x="407.96" y="466" width="38.46" height="2" fill="#8c5561"/>
<rect x="407.96" y="427.5" width="2.2" height="125.0" fill="#8c5561"/>
<rect x="445.82" y="427.5" width="1.2" height="125.0" fill="#8c5561" opacity="0.6"/>
<path transform="translate(410.16,489)" d="M0,-16.5 L1.5,-16 L5,-12 L9.3,-8 L13,-5 L18,-3 L25,-1.8 L36,-1 L36,1 L25,1.5 L18,2.5 L13,4 L9.3,7.5 L6,12 L4.5,17 L0.5,18 L0,18Z" fill="#231f20"/>
<path transform="translate(410.16,532)" d="M0,-16.5 L1.5,-16 L5,-12 L9.3,-8 L13,-5 L18,-3 L25,-1.8 L36,-1 L36,1 L25,1.5 L18,2.5 L13,4 L9.3,7.5 L6,12 L4.5,17 L0.5,18 L0,18Z" fill="#231f20"/>
<rect x="481.88" y="427.5" width="38.46" height="125.0" fill="#ff94a6"/>
<rect x="481.88" y="427.5" width="38.46" height="2" fill="#8c5561"/>
<rect x="481.88" y="466" width="38.46" height="2" fill="#8c5561"/>
<path d="M508.34,468 Q514.34,500 519.34,552.5 L520.34,552.5 L520.34,468Z" fill="#d87a8c"/>
<rect x="481.88" y="427.5" width="2.2" height="125.0" fill="#8c5561"/>
<rect x="519.74" y="427.5" width="1.2" height="125.0" fill="#8c5561" opacity="0.6"/>
<path transform="translate(484.08,489)" d="M0,-16.5 L1.5,-16 L5,-12 L9.3,-8 L13,-5 L18,-3 L25,-1.8 L36,-1 L36,1 L25,1.5 L18,2.5 L13,4 L9.3,7.5 L6,12 L4.5,17 L0.5,18 L0,18Z" fill="#231f20"/>
<path transform="translate(484.08,532)" d="M0,-16.5 L1.5,-16 L5,-12 L9.3,-8 L13,-5 L18,-3 L25,-1.8 L36,-1 L36,1 L25,1.5 L18,2.5 L13,4 L9.3,7.5 L6,12 L4.5,17 L0.5,18 L0,18Z" fill="#231f20"/>
<rect x="555.80" y="427.5" width="38.46" height="125.0" fill="#ff94a6"/>
<rect x="555.80" y="427.5" width="38.46" height="2" fill="#8c5561"/>
<rect x="555.80" y="466" width="38.46" height="2" fill="#8c5561"/>
<rect x="555.80" y="427.5" width="2.2" height="125.0" fill="#8c5561"/>
<rect x="593.66" y="427.5" width="1.2" height="125.0" fill="#8c5561" opacity="0.6"/>
<path transform="translate(558.00,489)" d="M0,-16.5 L1.5,-16 L5,-12 L9.3,-8 L13,-5 L18,-3 L25,-1.8 L36,-1 L36,1 L25,1.5 L18,2.5 L13,4 L9.3,7.5 L6,12 L4.5,17 L0.5,18 L0,18Z" fill="#231f20"/>
<path transform="translate(558.00,532)" d="M0,-16.5 L1.5,-16 L5,-12 L9.3,-8 L13,-5 L18,-3 L25,-1.8 L36,-1 L36,1 L25,1.5 L18,2.5 L13,4 L9.3,7.5 L6,12 L4.5,17 L0.5,18 L0,18Z" fill="#231f20"/>
<rect x="629.72" y="427.5" width="38.46" height="125.0" fill="#ff94a6"/>
<rect x="629.72" y="427.5" width="38.46" height="2" fill="#8c5561"/>
<rect x="629.72" y="466" width="38.46" height="2" fill="#8c5561"/>
<path d="M656.18,468 Q662.18,500 667.18,552.5 L668.18,552.5 L668.18,468Z" fill="#d87a8c"/>
<rect x="629.72" y="427.5" width="2.2" height="125.0" fill="#8c5561"/>
<rect x="667.58" y="427.5" width="1.2" height="125.0" fill="#8c5561" opacity="0.6"/>
<path transform="translate(631.92,489)" d="M0,-16.5 L1.5,-16 L5,-12 L9.3,-8 L13,-5 L18,-3 L25,-1.8 L36,-1 L36,1 L25,1.5 L18,2.5 L13,4 L9.3,7.5 L6,12 L4.5,17 L0.5,18 L0,18Z" fill="#231f20"/>
<path transform="translate(631.92,532)" d="M0,-16.5 L1.5,-16 L5,-12 L9.3,-8 L13,-5 L18,-3 L25,-1.8 L36,-1 L36,1 L25,1.5 L18,2.5 L13,4 L9.3,7.5 L6,12 L4.5,17 L0.5,18 L0,18Z" fill="#231f20"/>
<rect x="703.64" y="427.5" width="38.46" height="125.0" fill="#ff94a6"/>
<rect x="703.64" y="427.5" width="38.46" height="2" fill="#8c5561"/>
<rect x="703.64" y="466" width="38.46" height="2" fill="#8c5561"/>
<rect x="703.64" y="427.5" width="2.2" height="125.0" fill="#8c5561"/>
<rect x="741.50" y="427.5" width="1.2" height="125.0" fill="#8c5561" opacity="0.6"/>
<path transform="translate(705.84,489)" d="M0,-16.5 L1.5,-16 L5,-12 L9.3,-8 L13,-5 L18,-3 L25,-1.8 L36,-1 L36,1 L25,1.5 L18,2.5 L13,4 L9.3,7.5 L6,12 L4.5,17 L0.5,18 L0,18Z" fill="#231f20"/>
<path transform="translate(705.84,532)" d="M0,-16.5 L1.5,-16 L5,-12 L9.3,-8 L13,-5 L18,-3 L25,-1.8 L36,-1 L36,1 L25,1.5 L18,2.5 L13,4 L9.3,7.5 L6,12 L4.5,17 L0.5,18 L0,18Z" fill="#231f20"/>
<rect x="777.56" y="427.5" width="38.46" height="125.0" fill="#ff94a6"/>
<rect x="777.56" y="427.5" width="38.46" height="2" fill="#8c5561"/>
<rect x="777.56" y="466" width="38.46" height="2" fill="#8c5561"/>
<path d="M804.02,468 Q810.02,500 815.02,552.5 L816.02,552.5 L816.02,468Z" fill="#d87a8c"/>
<rect x="777.56" y="427.5" width="2.2" height="125.0" fill="#8c5561"/>
<rect x="815.42" y="427.5" width="1.2" height="125.0" fill="#8c5561" opacity="0.6"/>
<path transform="translate(779.76,489)" d="M0,-16.5 L1.5,-16 L5,-12 L9.3,-8 L13,-5 L18,-3 L25,-1.8 L36,-1 L36,1 L25,1.5 L18,2.5 L13,4 L9.3,7.5 L6,12 L4.5,17 L0.5,18 L0,18Z" fill="#231f20"/>
<path transform="translate(779.76,532)" d="M0,-16.5 L1.5,-16 L5,-12 L9.3,-8 L13,-5 L18,-3 L25,-1.8 L36,-1 L36,1 L25,1.5 L18,2.5 L13,4 L9.3,7.5 L6,12 L4.5,17 L0.5,18 L0,18Z" fill="#231f20"/>
<rect x="851.48" y="427.5" width="38.46" height="125.0" fill="#ff94a6"/>
<rect x="851.48" y="427.5" width="38.46" height="2" fill="#8c5561"/>
<rect x="851.48" y="466" width="38.46" height="2" fill="#8c5561"/>
<rect x="851.48" y="427.5" width="2.2" height="125.0" fill="#8c5561"/>
<rect x="889.34" y="427.5" width="1.2" height="125.0" fill="#8c5561" opacity="0.6"/>
<path transform="translate(853.68,489)" d="M0,-16.5 L1.5,-16 L5,-12 L9.3,-8 L13,-5 L18,-3 L25,-1.8 L36,-1 L36,1 L25,1.5 L18,2.5 L13,4 L9.3,7.5 L6,12 L4.5,17 L0.5,18 L0,18Z" fill="#231f20"/>
<path transform="translate(853.68,532)" d="M0,-16.5 L1.5,-16 L5,-12 L9.3,-8 L13,-5 L18,-3 L25,-1.8 L36,-1 L36,1 L25,1.5 L18,2.5 L13,4 L9.3,7.5 L6,12 L4.5,17 L0.5,18 L0,18Z" fill="#231f20"/>
<rect x="925.40" y="427.5" width="38.46" height="125.0" fill="#ff94a6"/>
<rect x="925.40" y="427.5" width="38.46" height="2" fill="#8c5561"/>
<rect x="925.40" y="466" width="38.46" height="2" fill="#8c5561"/>
<path d="M951.86,468 Q957.86,500 962.86,552.5 L963.86,552.5 L963.86,468Z" fill="#d87a8c"/>
<rect x="925.40" y="427.5" width="2.2" height="125.0" fill="#8c5561"/>
<rect x="963.26" y="427.5" width="1.2" height="125.0" fill="#8c5561" opacity="0.6"/>
<path transform="translate(927.60,489)" d="M0,-16.5 L1.5,-16 L5,-12 L9.3,-8 L13,-5 L18,-3 L25,-1.8 L36,-1 L36,1 L25,1.5 L18,2.5 L13,4 L9.3,7.5 L6,12 L4.5,17 L0.5,18 L0,18Z" fill="#231f20"/>
<path transform="translate(927.60,532)" d="M0,-16.5 L1.5,-16 L5,-12 L9.3,-8 L13,-5 L18,-3 L25,-1.8 L36,-1 L36,1 L25,1.5 L18,2.5 L13,4 L9.3,7.5 L6,12 L4.5,17 L0.5,18 L0,18Z" fill="#231f20"/>
<rect x="999.32" y="427.5" width="38.46" height="125.0" fill="#ff94a6"/>
<rect x="999.32" y="427.5" width="38.46" height="2" fill="#8c5561"/>
<rect x="999.32" y="466" width="38.46" height="2" fill="#8c5561"/>
<rect x="999.32" y="427.5" width="2.2" height="125.0" fill="#8c5561"/>
<rect x="1037.18" y="427.5" width="1.2" height="125.0" fill="#8c5561" opacity="0.6"/>
<path transform="translate(1001.52,489)" d="M0,-16.5 L1.5,-16 L5,-12 L9.3,-8 L13,-5 L18,-3 L25,-1.8 L36,-1 L36,1 L25,1.5 L18,2.5 L13,4 L9.3,7.5 L6,12 L4.5,17 L0.5,18 L0,18Z" fill="#231f20"/>
<path transform="translate(1001.52,532)" d="M0,-16.5 L1.5,-16 L5,-12 L9.3,-8 L13,-5 L18,-3 L25,-1.8 L36,-1 L36,1 L25,1.5 L18,2.5 L13,4 L9.3,7.5 L6,12 L4.5,17 L0.5,18 L0,18Z" fill="#231f20"/>
<rect x="1073.24" y="427.5" width="38.46" height="125.0" fill="#ff94a6"/>
<rect x="1073.24" y="427.5" width="38.46" height="2" fill="#8c5561"/>
<rect x="1073.24" y="466" width="38.46" height="2" fill="#8c5561"/>
<path d="M1099.70,468 Q1105.70,500 1110.70,552.5 L1111.70,552.5 L1111.70,468Z" fill="#d87a8c"/>
<rect x="1073.24" y="427.5" width="2.2" height="125.0" fill="#8c5561"/>
<rect x="1111.10" y="427.5" width="1.2" height="125.0" fill="#8c5561" opacity="0.6"/>
<path transform="translate(1075.44,489)" d="M0,-16.5 L1.5,-16 L5,-12 L9.3,-8 L13,-5 L18,-3 L25,-1.8 L36,-1 L36,1 L25,1.5 L18,2.5 L13,4 L9.3,7.5 L6,12 L4.5,17 L0.5,18 L0,18Z" fill="#231f20"/>
<path transform="translate(1075.44,532)" d="M0,-16.5 L1.5,-16 L5,-12 L9.3,-8 L13,-5 L18,-3 L25,-1.8 L36,-1 L36,1 L25,1.5 L18,2.5 L13,4 L9.3,7.5 L6,12 L4.5,17 L0.5,18 L0,18Z" fill="#231f20"/>
<rect x="1147.16" y="427.5" width="16.84" height="125.0" fill="#ff94a6"/>
<rect x="1147.16" y="427.5" width="16.84" height="2" fill="#8c5561"/>
<rect x="1147.16" y="466" width="16.84" height="2" fill="#8c5561"/>
<rect x="1147.16" y="427.5" width="2.2" height="125.0" fill="#8c5561"/>
<path transform="translate(1149.36,489)" d="M0,-16.5 L1.5,-16 L5,-12 L9.3,-8 L13,-5 L18,-3 L25,-1.8 L36,-1 L36,1 L25,1.5 L18,2.5 L13,4 L9.3,7.5 L6,12 L4.5,17 L0.5,18 L0,18Z" fill="#231f20"/>
<path transform="translate(1149.36,532)" d="M0,-16.5 L1.5,-16 L5,-12 L9.3,-8 L13,-5 L18,-3 L25,-1.8 L36,-1 L36,1 L25,1.5 L18,2.5 L13,4 L9.3,7.5 L6,12 L4.5,17 L0.5,18 L0,18Z" fill="#231f20"/>
<rect x="2.5" y="557" width="1161.5" height="207" fill="#ff94a6"/>
<rect x="2.5" y="557" width="1161.5" height="2" fill="#8c5561"/>
<rect x="2.5" y="597" width="1161.5" height="2" fill="#8c5561"/>
<rect x="2.5" y="557" width="2.2" height="207" fill="#8c5561"/>
<rect x="38.71" y="599" width="1.7" height="165" fill="rgba(120,40,60,0.18)"/>
<rect x="75.67" y="599" width="1.7" height="165" fill="rgba(120,40,60,0.18)"/>
<rect x="112.63" y="599" width="1.7" height="165" fill="rgba(120,40,60,0.18)"/>
<rect x="149.59" y="599" width="1.7" height="165" fill="rgba(120,40,60,0.18)"/>
<rect x="186.55" y="599" width="1.7" height="165" fill="rgba(120,40,60,0.18)"/>
<rect x="223.51" y="599" width="1.7" height="165" fill="rgba(120,40,60,0.18)"/>
<rect x="260.47" y="599" width="1.7" height="165" fill="rgba(120,40,60,0.18)"/>
<rect x="297.43" y="599" width="1.7" height="165" fill="rgba(120,40,60,0.18)"/>
<rect x="334.39" y="599" width="1.7" height="165" fill="rgba(120,40,60,0.18)"/>
<rect x="371.35" y="599" width="1.7" height="165" fill="rgba(120,40,60,0.18)"/>
<rect x="408.31" y="599" width="1.7" height="165" fill="rgba(120,40,60,0.18)"/>
<rect x="445.27" y="599" width="1.7" height="165" fill="rgba(120,40,60,0.18)"/>
<rect x="482.23" y="599" width="1.7" height="165" fill="rgba(120,40,60,0.18)"/>
<rect x="519.19" y="599" width="1.7" height="165" fill="rgba(120,40,60,0.18)"/>
<rect x="556.15" y="599" width="1.7" height="165" fill="rgba(120,40,60,0.18)"/>
<rect x="593.11" y="599" width="1.7" height="165" fill="rgba(120,40,60,0.18)"/>
<rect x="630.07" y="599" width="1.7" height="165" fill="rgba(120,40,60,0.18)"/>
<rect x="667.03" y="599" width="1.7" height="165" fill="rgba(120,40,60,0.18)"/>
<rect x="703.99" y="599" width="1.7" height="165" fill="rgba(120,40,60,0.18)"/>
<rect x="740.95" y="599" width="1.7" height="165" fill="rgba(120,40,60,0.18)"/>
<rect x="777.91" y="599" width="1.7" height="165" fill="rgba(120,40,60,0.18)"/>
<rect x="814.87" y="599" width="1.7" height="165" fill="rgba(120,40,60,0.18)"/>
<rect x="851.83" y="599" width="1.7" height="165" fill="rgba(120,40,60,0.18)"/>
<rect x="888.79" y="599" width="1.7" height="165" fill="rgba(120,40,60,0.18)"/>
<rect x="925.75" y="599" width="1.7" height="165" fill="rgba(120,40,60,0.18)"/>
<rect x="962.71" y="599" width="1.7" height="165" fill="rgba(120,40,60,0.18)"/>
<rect x="999.67" y="599" width="1.7" height="165" fill="rgba(120,40,60,0.18)"/>
<rect x="1036.63" y="599" width="1.7" height="165" fill="rgba(120,40,60,0.18)"/>
<rect x="1073.59" y="599" width="1.7" height="165" fill="rgba(120,40,60,0.18)"/>
<rect x="1110.55" y="599" width="1.7" height="165" fill="rgba(120,40,60,0.18)"/>
<rect x="1147.51" y="599" width="1.7" height="165" fill="rgba(120,40,60,0.18)"/>
<path d="M4.7,633.9 L6.2,634.0 L7.7,633.9 L9.2,634.1 L10.7,634.4 L12.2,634.4 L13.7,634.6 L15.2,634.4 L16.7,634.7 L18.2,634.9 L19.7,634.3 L21.2,634.4 L22.7,634.6 L24.2,634.5 L25.7,632.7 L27.2,634.3 L28.7,634.9 L30.2,634.8 L31.7,635.2 L33.2,635.0 L34.7,635.0 L36.2,634.9 L37.7,635.0 L39.2,635.5 L40.7,634.4 L42.2,634.4 L43.7,633.8 L45.2,634.1 L46.7,634.2 L48.2,634.2 L49.7,634.0 L51.2,634.6 L52.7,634.3 L54.2,634.3 L55.7,634.7 L57.2,634.2 L58.7,634.3 L60.2,634.8 L61.7,634.5 L63.2,634.8 L64.7,634.8 L66.2,634.7 L67.7,635.0 L69.2,635.2 L70.7,635.0 L72.2,634.8 L73.7,634.9 L75.2,635.0 L76.7,634.5 L78.2,634.1 L79.7,634.0 L81.2,634.0 L82.7,634.2 L84.2,634.0 L85.7,634.5 L87.2,634.6 L88.7,634.6 L90.2,634.2 L91.7,634.4 L93.2,634.8 L94.7,634.4 L96.2,635.0 L97.7,634.0 L99.2,632.8 L100.7,635.2 L102.2,634.6 L103.7,634.8 L105.2,635.2 L106.7,634.8 L108.2,635.4 L109.7,635.0 L111.2,634.9 L112.7,635.6 L114.2,631.9 L115.7,631.6 L117.2,632.4 L118.7,633.3 L120.2,633.4 L121.7,633.4 L123.2,633.6 L124.7,633.2 L126.2,633.7 L127.7,633.3 L129.2,633.6 L130.7,633.6 L132.2,633.7 L133.7,633.7 L135.2,633.9 L136.7,633.8 L138.2,633.7 L139.7,633.7 L141.2,634.0 L142.7,634.0 L144.2,634.5 L145.7,634.1 L147.2,634.2 L148.7,634.7 L150.2,634.2 L151.7,633.4 L153.2,632.3 L154.7,632.3 L156.2,632.5 L157.7,632.4 L159.2,632.3 L160.7,632.7 L162.2,632.5 L163.7,632.9 L165.2,633.0 L166.7,632.8 L168.2,632.7 L169.7,632.6 L171.2,633.0 L172.7,633.3 L174.2,632.8 L175.7,633.1 L177.2,633.2 L178.7,633.6 L180.2,633.3 L181.7,633.5 L183.2,633.8 L184.7,633.3 L186.2,633.6 L187.7,630.3 L189.2,628.9 L190.7,631.3 L192.2,633.5 L193.7,633.6 L195.2,633.7 L196.7,633.6 L198.2,633.4 L199.7,634.0 L201.2,633.7 L202.7,633.7 L204.2,634.1 L205.7,634.2 L207.2,634.2 L208.7,633.8 L210.2,634.4 L211.7,634.1 L213.2,634.3 L214.7,634.0 L216.2,634.3 L217.7,634.4 L219.2,634.6 L220.7,634.7 L222.2,634.9 L223.7,634.5 L225.2,630.9 L226.7,630.6 L228.2,633.3 L229.7,633.6 L231.2,633.9 L232.7,633.9 L234.2,633.7 L235.7,633.9 L237.2,633.7 L238.7,634.0 L240.2,634.1 L241.7,634.2 L243.2,634.5 L244.7,634.0 L246.2,634.4 L247.7,634.0 L249.2,634.6 L250.7,634.2 L252.2,634.8 L253.7,634.5 L255.2,634.6 L256.7,634.6 L258.2,635.0 L259.7,634.9 L261.2,635.2 L262.7,633.6 L264.2,632.8 L265.7,632.3 L267.2,632.6 L268.7,632.7 L270.2,632.3 L271.7,632.4 L273.2,632.4 L274.7,632.6 L276.2,632.9 L277.7,633.2 L279.2,632.6 L280.7,633.4 L282.2,633.4 L283.7,633.5 L285.2,633.6 L286.7,633.3 L288.2,633.4 L289.7,633.2 L291.2,633.7 L292.7,633.7 L294.2,633.8 L295.7,633.7 L297.2,633.5 L298.7,633.9 L300.2,633.9 L301.7,633.8 L303.2,633.8 L304.7,634.1 L306.2,634.2 L307.7,634.0 L309.2,634.3 L310.7,634.4 L312.2,634.3 L313.7,634.1 L315.2,634.1 L316.7,634.7 L318.2,634.3 L319.7,634.5 L321.2,634.8 L322.7,634.5 L324.2,634.7 L325.7,638.7 L327.2,638.7 L328.7,638.7 L330.2,638.7 L331.7,638.7 L333.2,638.7 L334.7,638.7 L336.2,635.2 L337.7,634.9 L339.2,634.6 L340.7,634.4 L342.2,634.1 L343.7,633.9 L345.2,633.9 L346.7,634.3 L348.2,634.6 L349.7,634.3 L351.2,634.7 L352.7,634.6 L354.2,634.6 L355.7,634.4 L357.2,634.6 L358.7,634.5 L360.2,634.6 L361.7,634.9 L363.2,634.9 L364.7,635.2 L366.2,635.1 L367.7,635.1 L369.2,634.9 L370.7,635.0 L372.2,633.8 L373.7,633.5 L375.2,633.1 L376.7,633.5 L378.2,633.5 L379.7,633.2 L381.2,633.6 L382.7,633.3 L384.2,633.4 L385.7,633.7 L387.2,633.6 L388.7,633.5 L390.2,633.8 L391.7,632.2 L393.2,633.3 L394.7,634.3 L396.2,634.0 L397.7,634.1 L399.2,634.4 L400.7,634.6 L402.2,634.5 L403.7,634.6 L405.2,634.1 L406.7,634.7 L408.2,634.3 L409.7,631.5 L411.2,631.1 L412.7,633.5 L414.2,634.8 L415.7,635.0 L417.2,635.0 L418.7,635.0 L420.2,634.7 L421.7,634.7 L423.2,635.4 L424.7,635.3 L426.2,634.8 L427.7,638.7 L429.2,638.7 L430.7,638.7 L432.2,638.7 L433.7,638.7 L435.2,638.7 L436.7,636.2 L438.2,636.1 L439.7,635.7 L441.2,635.8 L442.7,636.0 L444.2,635.9 L445.7,635.7 L447.2,633.5 L448.7,632.8 L450.2,632.5 L451.7,632.6 L453.2,632.3 L454.7,632.1 L456.2,632.4 L457.7,632.2 L459.2,632.5 L460.7,632.5 L462.2,632.9 L463.7,632.5 L465.2,632.6 L466.7,633.0 L468.2,633.1 L469.7,632.9 L471.2,633.4 L472.7,633.3 L474.2,633.2 L475.7,633.4 L477.2,633.6 L478.7,633.2 L480.2,633.7 L481.7,633.9 L483.2,634.0 L484.7,634.0 L486.2,634.5 L487.7,634.4 L489.2,634.6 L490.7,634.8 L492.2,634.8 L493.7,634.7 L495.2,634.8 L496.7,634.5 L498.2,632.6 L499.7,633.9 L501.2,634.9 L502.7,634.8 L504.2,634.8 L505.7,635.0 L507.2,634.8 L508.7,635.4 L510.2,635.5 L511.7,635.6 L513.2,635.2 L514.7,635.4 L516.2,635.8 L517.7,635.7 L519.2,635.7 L520.7,633.8 L522.2,632.7 L523.7,632.5 L525.2,632.3 L526.7,632.5 L528.2,632.5 L529.7,632.4 L531.2,632.3 L532.7,632.8 L534.2,632.7 L535.7,632.9 L537.2,632.4 L538.7,632.5 L540.2,632.6 L541.7,632.6 L543.2,633.0 L544.7,633.1 L546.2,633.1 L547.7,633.0 L549.2,633.0 L550.7,633.4 L552.2,633.0 L553.7,633.2 L555.2,633.4 L556.7,633.5 L558.2,628.3 L559.7,630.6 L561.2,632.9 L562.7,633.1 L564.2,633.3 L565.7,633.4 L567.2,633.6 L568.7,633.4 L570.2,633.4 L571.7,633.4 L573.2,633.7 L574.7,633.8 L576.2,633.9 L577.7,633.7 L579.2,633.5 L580.7,634.1 L582.2,634.2 L583.7,634.2 L585.2,634.3 L586.7,634.2 L588.2,634.6 L589.7,634.3 L591.2,634.5 L592.7,634.5 L594.2,631.7 L595.7,630.5 L597.2,631.9 L598.7,632.9 L600.2,633.2 L601.7,633.0 L603.2,632.6 L604.7,633.3 L606.2,633.2 L607.7,633.4 L609.2,632.9 L610.7,633.3 L612.2,633.6 L613.7,633.5 L615.2,633.5 L616.7,633.3 L618.2,633.7 L619.7,633.6 L621.2,633.9 L622.7,633.9 L624.2,634.1 L625.7,633.6 L627.2,633.8 L628.7,634.1 L630.2,634.1 L631.7,630.9 L633.2,631.0 L634.7,633.3 L636.2,633.8 L637.7,633.7 L639.2,633.8 L640.7,634.2 L642.2,634.3 L643.7,634.1 L645.2,634.1 L646.7,634.0 L648.2,634.5 L649.7,634.1 L651.2,634.5 L652.7,634.5 L654.2,634.4 L655.7,634.4 L657.2,634.4 L658.7,634.9 L660.2,634.5 L661.7,634.8 L663.2,634.9 L664.7,635.1 L666.2,635.2 L667.7,635.0 L669.2,633.6 L670.7,632.8 L672.2,632.7 L673.7,632.4 L675.2,633.0 L676.7,632.4 L678.2,632.5 L679.7,632.7 L681.2,633.1 L682.7,632.8 L684.2,633.2 L685.7,633.3 L687.2,633.3 L688.7,632.9 L690.2,633.5 L691.7,633.6 L693.2,633.5 L694.7,633.3 L696.2,633.8 L697.7,633.6 L699.2,633.8 L700.7,633.9 L702.2,634.2 L703.7,634.0 L705.2,630.7 L706.7,629.7 L708.2,632.5 L709.7,634.3 L711.2,634.3 L712.7,634.7 L714.2,634.2 L715.7,634.6 L717.2,634.8 L718.7,634.5 L720.2,634.4 L721.7,635.0 L723.2,634.7 L724.7,634.7 L726.2,634.8 L727.7,634.8 L729.2,635.1 L730.7,634.7 L732.2,634.8 L733.7,635.1 L735.2,635.2 L736.7,635.4 L738.2,635.5 L739.7,635.2 L741.2,635.6 L742.7,633.8 L744.2,633.1 L745.7,632.7 L747.2,632.5 L748.7,632.5 L750.2,632.6 L751.7,632.7 L753.2,632.3 L754.7,630.8 L756.2,632.7 L757.7,633.2 L759.2,633.3 L760.7,633.3 L762.2,633.3 L763.7,633.5 L765.2,633.1 L766.7,633.6 L768.2,633.6 L769.7,633.8 L771.2,633.9 L772.7,633.4 L774.2,634.0 L775.7,634.1 L777.2,633.9 L778.7,630.8 L780.2,627.7 L781.7,630.5 L783.2,633.0 L784.7,633.5 L786.2,633.1 L787.7,633.8 L789.2,633.9 L790.7,633.9 L792.2,633.9 L793.7,633.6 L795.2,633.7 L796.7,633.5 L798.2,634.2 L799.7,633.7 L801.2,634.1 L802.7,634.4 L804.2,633.9 L805.7,634.4 L807.2,634.6 L808.7,634.6 L810.2,634.3 L811.7,634.3 L813.2,634.4 L814.7,634.8 L816.2,634.0 L817.7,633.4 L819.2,633.3 L820.7,632.9 L822.2,633.5 L823.7,633.5 L825.2,633.0 L826.7,633.2 L828.2,633.6 L829.7,633.6 L831.2,633.6 L832.7,633.2 L834.2,633.5 L835.7,634.0 L837.2,633.7 L838.7,633.9 L840.2,633.8 L841.7,634.0 L843.2,634.2 L844.7,634.0 L846.2,634.4 L847.7,634.2 L849.2,634.0 L850.7,634.6 L852.2,634.5 L853.7,634.7 L855.2,634.8 L856.7,635.0 L858.2,634.6 L859.7,635.1 L861.2,634.7 L862.7,634.9 L864.2,635.3 L865.7,635.1 L867.2,635.0 L868.7,634.9 L870.2,635.1 L871.7,635.1 L873.2,635.1 L874.7,635.5 L876.2,635.1 L877.7,635.6 L879.2,635.1 L880.7,635.2 L882.2,635.5 L883.7,635.6 L885.2,635.5 L886.7,635.5 L888.2,635.8 L889.7,633.8 L891.2,632.7 L892.7,632.2 L894.2,632.6 L895.7,632.3 L897.2,632.1 L898.7,632.3 L900.2,632.1 L901.7,632.5 L903.2,632.7 L904.7,632.3 L906.2,632.7 L907.7,632.7 L909.2,632.6 L910.7,632.7 L912.2,632.7 L913.7,633.0 L915.2,632.9 L916.7,633.5 L918.2,633.0 L919.7,633.4 L921.2,633.4 L922.7,633.4 L924.2,633.9 L925.7,633.9 L927.2,631.3 L928.7,631.0 L930.2,632.8 L931.7,633.9 L933.2,634.2 L934.7,633.7 L936.2,634.3 L937.7,633.7 L939.2,634.0 L940.7,634.2 L942.2,634.2 L943.7,634.3 L945.2,634.5 L946.7,638.7 L948.2,638.7 L949.7,638.7 L951.2,638.7 L952.7,638.7 L954.2,638.7 L955.7,638.7 L957.2,635.9 L958.7,635.3 L960.2,635.4 L961.7,635.3 L963.2,634.9 L964.7,634.2 L966.2,633.9 L967.7,633.4 L969.2,633.5 L970.7,633.5 L972.2,633.5 L973.7,633.6 L975.2,633.8 L976.7,634.0 L978.2,633.6 L979.7,633.6 L981.2,634.1 L982.7,633.9 L984.2,634.2 L985.7,634.0 L987.2,634.4 L988.7,634.1 L990.2,634.0 L991.7,634.6 L993.2,634.2 L994.7,634.7 L996.2,634.3 L997.7,634.3 L999.2,634.4 L1000.7,634.2 L1002.2,633.9 L1003.7,633.7 L1005.2,634.0 L1006.7,634.4 L1008.2,634.2 L1009.7,634.1 L1011.2,634.4 L1012.7,632.4 L1014.2,633.1 L1015.7,634.5 L1017.2,634.7 L1018.7,634.1 L1020.2,634.4 L1021.7,634.7 L1023.2,635.0 L1024.7,634.7 L1026.2,634.6 L1027.7,634.6 L1029.2,638.7 L1030.7,638.7 L1032.2,638.7 L1033.7,638.7 L1035.2,638.7 L1036.7,638.7 L1038.2,634.1 L1039.7,633.2 L1041.2,632.3 L1042.7,632.2 L1044.2,632.1 L1045.7,632.1 L1047.2,632.3 L1048.7,632.4 L1050.2,632.2 L1051.7,632.4 L1053.2,632.4 L1054.7,632.8 L1056.2,632.9 L1057.7,632.8 L1059.2,633.0 L1060.7,633.2 L1062.2,633.2 L1063.7,633.2 L1065.2,632.8 L1066.7,633.0 L1068.2,633.2 L1069.7,633.2 L1071.2,633.8 L1072.7,633.5 L1074.2,633.8 L1075.7,633.9 L1077.2,634.0 L1078.7,634.0 L1080.2,634.6 L1081.7,634.2 L1083.2,634.5 L1084.7,634.3 L1086.2,634.2 L1087.7,634.8 L1089.2,634.4 L1090.7,634.9 L1092.2,635.0 L1093.7,635.0 L1095.2,635.2 L1096.7,635.1 L1098.2,634.7 L1099.7,634.8 L1101.2,635.1 L1102.7,635.3 L1104.2,635.2 L1105.7,635.5 L1107.2,635.0 L1108.7,635.1 L1110.2,635.4 L1111.7,635.2 L1113.2,634.5 L1114.7,634.7 L1116.2,635.1 L1117.7,634.6 L1119.2,634.7 L1120.7,634.9 L1122.2,635.0 L1123.7,634.9 L1125.2,635.0 L1126.7,635.1 L1128.2,635.0 L1129.7,635.4 L1131.2,635.2 L1132.7,638.7 L1134.2,638.7 L1135.7,638.7 L1137.2,638.7 L1138.7,638.7 L1140.2,638.7 L1141.7,638.7 L1143.2,636.6 L1144.7,636.3 L1146.2,635.8 L1147.7,636.0 L1149.2,634.1 L1150.7,633.3 L1152.2,633.0 L1153.7,633.0 L1155.2,632.9 L1156.7,632.5 L1158.2,632.7 L1159.7,632.7 L1161.2,632.7 L1162.7,633.1 L1162.7,646.8 L1161.2,647.2 L1159.7,647.0 L1158.2,647.2 L1156.7,647.5 L1155.2,647.0 L1153.7,647.0 L1152.2,647.9 L1150.7,648.9 L1149.2,649.0 L1147.7,644.5 L1146.2,644.5 L1144.7,643.8 L1143.2,643.5 L1141.7,641.3 L1140.2,641.3 L1138.7,641.3 L1137.2,641.3 L1135.7,641.3 L1134.2,641.3 L1132.7,641.3 L1131.2,644.7 L1129.7,645.2 L1128.2,645.1 L1126.7,644.7 L1125.2,645.0 L1123.7,645.2 L1122.2,645.0 L1120.7,645.4 L1119.2,645.3 L1117.7,645.1 L1116.2,645.3 L1114.7,646.8 L1113.2,648.9 L1111.7,647.7 L1110.2,644.5 L1108.7,644.4 L1107.2,644.4 L1105.7,644.4 L1104.2,644.6 L1102.7,645.2 L1101.2,645.0 L1099.7,644.7 L1098.2,645.1 L1096.7,645.1 L1095.2,645.0 L1093.7,645.2 L1092.2,645.1 L1090.7,645.4 L1089.2,645.4 L1087.7,645.7 L1086.2,645.7 L1084.7,645.6 L1083.2,645.3 L1081.7,645.8 L1080.2,645.8 L1078.7,646.1 L1077.2,646.0 L1075.7,646.2 L1074.2,646.7 L1072.7,646.7 L1071.2,646.6 L1069.7,646.6 L1068.2,646.3 L1066.7,647.1 L1065.2,646.8 L1063.7,646.9 L1062.2,646.9 L1060.7,647.0 L1059.2,647.3 L1057.7,647.1 L1056.2,647.6 L1054.7,647.6 L1053.2,647.4 L1051.7,647.2 L1050.2,647.4 L1048.7,647.7 L1047.2,647.6 L1045.7,647.6 L1044.2,647.7 L1042.7,647.3 L1041.2,647.6 L1039.7,647.2 L1038.2,645.4 L1036.7,641.3 L1035.2,641.3 L1033.7,641.3 L1032.2,641.3 L1030.7,641.3 L1029.2,641.3 L1027.7,645.3 L1026.2,645.0 L1024.7,645.4 L1023.2,645.4 L1021.7,645.4 L1020.2,645.5 L1018.7,645.3 L1017.2,645.7 L1015.7,645.5 L1014.2,647.0 L1012.7,647.6 L1011.2,646.0 L1009.7,646.0 L1008.2,645.7 L1006.7,645.7 L1005.2,646.0 L1003.7,645.9 L1002.2,646.1 L1000.7,645.8 L999.2,645.2 L997.7,645.3 L996.2,645.4 L994.7,645.2 L993.2,646.0 L991.7,645.7 L990.2,645.8 L988.7,645.5 L987.2,646.1 L985.7,645.7 L984.2,645.9 L982.7,645.8 L981.2,646.3 L979.7,646.4 L978.2,646.4 L976.7,646.2 L975.2,646.3 L973.7,646.4 L972.2,646.7 L970.7,646.4 L969.2,646.3 L967.7,647.1 L966.2,650.0 L964.7,652.0 L963.2,644.8 L961.7,645.0 L960.2,644.6 L958.7,644.8 L957.2,643.6 L955.7,641.3 L954.2,641.3 L952.7,641.3 L951.2,641.3 L949.7,641.3 L948.2,641.3 L946.7,641.3 L945.2,645.7 L943.7,645.8 L942.2,645.4 L940.7,645.9 L939.2,645.9 L937.7,645.7 L936.2,645.9 L934.7,646.1 L933.2,645.9 L931.7,645.9 L930.2,646.1 L928.7,646.0 L927.2,646.4 L925.7,646.0 L924.2,646.5 L922.7,646.5 L921.2,646.6 L919.7,646.7 L918.2,646.8 L916.7,646.8 L915.2,647.1 L913.7,646.7 L912.2,647.0 L910.7,647.0 L909.2,647.1 L907.7,647.2 L906.2,647.3 L904.7,647.4 L903.2,647.6 L901.7,647.4 L900.2,647.3 L898.7,647.8 L897.2,647.9 L895.7,647.7 L894.2,647.6 L892.7,647.4 L891.2,647.4 L889.7,646.3 L888.2,644.6 L886.7,644.3 L885.2,644.3 L883.7,644.2 L882.2,644.4 L880.7,644.5 L879.2,644.4 L877.7,644.4 L876.2,644.8 L874.7,644.7 L873.2,644.6 L871.7,644.6 L870.2,644.8 L868.7,644.8 L867.2,645.2 L865.7,645.2 L864.2,645.0 L862.7,645.1 L861.2,644.9 L859.7,644.9 L858.2,645.5 L856.7,646.0 L855.2,647.6 L853.7,649.1 L852.2,645.6 L850.7,645.7 L849.2,646.0 L847.7,645.6 L846.2,645.8 L844.7,646.1 L843.2,646.0 L841.7,646.3 L840.2,646.4 L838.7,646.2 L837.2,646.0 L835.7,646.2 L834.2,646.2 L832.7,646.2 L831.2,646.4 L829.7,646.3 L828.2,646.3 L826.7,646.6 L825.2,646.9 L823.7,646.8 L822.2,646.6 L820.7,646.8 L819.2,647.0 L817.7,646.4 L816.2,646.5 L814.7,645.6 L813.2,645.4 L811.7,645.6 L810.2,645.6 L808.7,645.8 L807.2,645.9 L805.7,645.5 L804.2,646.0 L802.7,645.8 L801.2,645.8 L799.7,645.7 L798.2,645.9 L796.7,646.1 L795.2,646.3 L793.7,646.1 L792.2,646.5 L790.7,646.6 L789.2,646.7 L787.7,646.5 L786.2,646.3 L784.7,646.5 L783.2,646.6 L781.7,649.8 L780.2,652.9 L778.7,650.1 L777.2,646.4 L775.7,645.8 L774.2,646.5 L772.7,646.2 L771.2,646.1 L769.7,646.7 L768.2,646.4 L766.7,646.4 L765.2,646.8 L763.7,646.9 L762.2,646.9 L760.7,646.6 L759.2,646.6 L757.7,646.8 L756.2,647.5 L754.7,649.8 L753.2,648.0 L751.7,647.0 L750.2,647.0 L748.7,647.1 L747.2,647.4 L745.7,647.1 L744.2,647.2 L742.7,646.3 L741.2,644.9 L739.7,644.5 L738.2,645.0 L736.7,644.6 L735.2,644.7 L733.7,645.1 L732.2,644.9 L730.7,645.1 L729.2,645.0 L727.7,644.9 L726.2,645.2 L724.7,645.5 L723.2,645.3 L721.7,645.2 L720.2,645.3 L718.7,645.2 L717.2,645.3 L715.7,645.4 L714.2,645.3 L712.7,645.6 L711.2,645.8 L709.7,645.7 L708.2,647.8 L706.7,650.9 L705.2,649.9 L703.7,645.7 L702.2,646.2 L700.7,646.1 L699.2,646.1 L697.7,646.4 L696.2,646.5 L694.7,646.4 L693.2,646.4 L691.7,646.4 L690.2,646.6 L688.7,646.9 L687.2,646.5 L685.7,646.7 L684.2,646.9 L682.7,647.2 L681.2,647.4 L679.7,647.0 L678.2,647.1 L676.7,647.3 L675.2,647.3 L673.7,647.1 L672.2,647.3 L670.7,647.3 L669.2,646.3 L667.7,645.1 L666.2,645.2 L664.7,645.0 L663.2,645.1 L661.7,645.0 L660.2,645.0 L658.7,645.2 L657.2,645.2 L655.7,645.6 L654.2,645.2 L652.7,645.3 L651.2,645.8 L649.7,645.3 L648.2,645.7 L646.7,645.5 L645.2,645.8 L643.7,645.5 L642.2,646.1 L640.7,646.2 L639.2,646.1 L637.7,645.7 L636.2,646.2 L634.7,645.9 L633.2,646.4 L631.7,646.2 L630.2,645.6 L628.7,646.3 L627.2,645.9 L625.7,646.0 L624.2,645.9 L622.7,646.3 L621.2,646.0 L619.7,646.6 L618.2,646.5 L616.7,646.3 L615.2,646.7 L613.7,646.6 L612.2,646.8 L610.7,646.5 L609.2,646.6 L607.7,646.5 L606.2,646.6 L604.7,647.0 L603.2,647.2 L601.7,647.1 L600.2,647.1 L598.7,647.2 L597.2,648.6 L595.7,650.1 L594.2,648.8 L592.7,645.4 L591.2,645.4 L589.7,645.8 L588.2,645.7 L586.7,646.2 L585.2,646.0 L583.7,646.1 L582.2,645.7 L580.7,646.0 L579.2,646.3 L577.7,646.0 L576.2,646.0 L574.7,646.7 L573.2,646.5 L571.7,646.6 L570.2,646.6 L568.7,646.7 L567.2,646.6 L565.7,646.8 L564.2,646.8 L562.7,646.6 L561.2,646.7 L559.7,646.7 L558.2,646.5 L556.7,646.2 L555.2,646.2 L553.7,646.3 L552.2,646.5 L550.7,647.0 L549.2,647.0 L547.7,646.7 L546.2,646.8 L544.7,646.8 L543.2,647.1 L541.7,647.1 L540.2,647.2 L538.7,647.3 L537.2,647.1 L535.7,647.5 L534.2,647.5 L532.7,647.5 L531.2,647.9 L529.7,648.0 L528.2,647.6 L526.7,647.5 L525.2,647.6 L523.7,647.9 L522.2,647.1 L520.7,646.2 L519.2,644.5 L517.7,644.6 L516.2,644.5 L514.7,644.5 L513.2,644.8 L511.7,644.4 L510.2,644.7 L508.7,644.8 L507.2,644.8 L505.7,644.8 L504.2,645.3 L502.7,645.2 L501.2,644.8 L499.7,645.9 L498.2,647.8 L496.7,645.2 L495.2,645.2 L493.7,645.0 L492.2,645.4 L490.7,645.1 L489.2,645.1 L487.7,645.8 L486.2,645.5 L484.7,645.7 L483.2,646.1 L481.7,646.1 L480.2,646.4 L478.7,646.7 L477.2,646.4 L475.7,646.8 L474.2,646.6 L472.7,646.8 L471.2,646.9 L469.7,646.7 L468.2,647.1 L466.7,647.0 L465.2,647.2 L463.7,647.0 L462.2,647.1 L460.7,647.3 L459.2,647.4 L457.7,647.9 L456.2,647.8 L454.7,647.7 L453.2,647.4 L451.7,647.4 L450.2,647.3 L448.7,647.4 L447.2,646.6 L445.7,644.6 L444.2,644.5 L442.7,644.7 L441.2,644.0 L439.7,644.4 L438.2,644.2 L436.7,643.6 L435.2,641.3 L433.7,641.3 L432.2,641.3 L430.7,641.3 L429.2,641.3 L427.7,641.3 L426.2,644.5 L424.7,644.6 L423.2,645.1 L421.7,645.0 L420.2,645.2 L418.7,645.0 L417.2,644.8 L415.7,645.5 L414.2,645.6 L412.7,645.6 L411.2,645.7 L409.7,645.6 L408.2,645.3 L406.7,645.5 L405.2,645.5 L403.7,645.6 L402.2,645.9 L400.7,645.8 L399.2,645.8 L397.7,645.7 L396.2,645.7 L394.7,645.8 L393.2,647.5 L391.7,648.9 L390.2,646.3 L388.7,646.6 L387.2,646.3 L385.7,646.2 L384.2,646.7 L382.7,646.5 L381.2,646.8 L379.7,646.4 L378.2,646.5 L376.7,646.6 L375.2,646.3 L373.7,646.3 L372.2,645.7 L370.7,644.8 L369.2,645.2 L367.7,644.8 L366.2,645.2 L364.7,644.8 L363.2,645.1 L361.7,645.5 L360.2,645.5 L358.7,645.3 L357.2,645.5 L355.7,645.2 L354.2,645.7 L352.7,645.3 L351.2,645.9 L349.7,645.9 L348.2,645.9 L346.7,645.9 L345.2,646.0 L343.7,645.7 L342.2,645.9 L340.7,646.1 L339.2,645.6 L337.7,645.7 L336.2,644.8 L334.7,641.3 L333.2,641.3 L331.7,641.3 L330.2,641.3 L328.7,641.3 L327.2,641.3 L325.7,641.3 L324.2,644.9 L322.7,645.0 L321.2,645.4 L319.7,645.5 L318.2,645.2 L316.7,645.7 L315.2,645.2 L313.7,645.7 L312.2,645.8 L310.7,645.9 L309.2,645.9 L307.7,645.8 L306.2,645.7 L304.7,646.2 L303.2,646.2 L301.7,648.0 L300.2,651.5 L298.7,650.6 L297.2,646.0 L295.7,646.2 L294.2,646.5 L292.7,646.5 L291.2,646.4 L289.7,646.7 L288.2,646.5 L286.7,646.5 L285.2,646.7 L283.7,646.9 L282.2,647.0 L280.7,646.9 L279.2,646.9 L277.7,647.0 L276.2,647.2 L274.7,647.5 L273.2,647.6 L271.7,647.2 L270.2,647.5 L268.7,647.2 L267.2,647.2 L265.7,647.2 L264.2,647.4 L262.7,646.2 L261.2,645.3 L259.7,645.0 L258.2,645.5 L256.7,645.2 L255.2,645.1 L253.7,645.4 L252.2,645.1 L250.7,645.5 L249.2,645.5 L247.7,645.8 L246.2,645.6 L244.7,645.7 L243.2,645.6 L241.7,645.8 L240.2,646.0 L238.7,645.6 L237.2,645.8 L235.7,645.8 L234.2,646.1 L232.7,646.4 L231.2,646.4 L229.7,646.1 L228.2,646.8 L226.7,649.1 L225.2,650.0 L223.7,645.0 L222.2,645.6 L220.7,645.6 L219.2,645.4 L217.7,645.2 L216.2,645.6 L214.7,645.4 L213.2,645.5 L211.7,645.6 L210.2,645.7 L208.7,646.2 L207.2,646.2 L205.7,646.2 L204.2,646.2 L202.7,646.0 L201.2,646.0 L199.7,646.1 L198.2,646.5 L196.7,646.6 L195.2,646.5 L193.7,646.8 L192.2,646.8 L190.7,646.6 L189.2,646.5 L187.7,646.8 L186.2,646.1 L184.7,646.6 L183.2,646.5 L181.7,646.9 L180.2,646.7 L178.7,646.8 L177.2,647.0 L175.7,647.0 L174.2,646.7 L172.7,647.0 L171.2,647.3 L169.7,647.4 L168.2,647.2 L166.7,647.1 L165.2,647.1 L163.7,647.2 L162.2,647.4 L160.7,647.6 L159.2,647.3 L157.7,647.8 L156.2,647.4 L154.7,647.7 L153.2,650.9 L151.7,653.0 L150.2,645.5 L148.7,645.5 L147.2,645.8 L145.7,645.9 L144.2,645.6 L142.7,645.8 L141.2,645.9 L139.7,645.9 L138.2,645.8 L136.7,646.4 L135.2,646.3 L133.7,646.1 L132.2,646.4 L130.7,646.2 L129.2,646.4 L127.7,646.2 L126.2,646.4 L124.7,646.6 L123.2,646.7 L121.7,646.6 L120.2,646.4 L118.7,646.9 L117.2,646.4 L115.7,646.3 L114.2,646.2 L112.7,644.5 L111.2,644.5 L109.7,644.5 L108.2,645.0 L106.7,645.1 L105.2,644.8 L103.7,644.7 L102.2,645.2 L100.7,645.4 L99.2,647.7 L97.7,646.9 L96.2,645.7 L94.7,645.5 L93.2,645.5 L91.7,645.6 L90.2,645.5 L88.7,645.6 L87.2,645.7 L85.7,645.9 L84.2,645.6 L82.7,646.1 L81.2,645.9 L79.7,648.6 L78.2,651.9 L76.7,649.8 L75.2,644.6 L73.7,644.6 L72.2,645.0 L70.7,645.1 L69.2,645.0 L67.7,645.4 L66.2,644.9 L64.7,645.5 L63.2,645.3 L61.7,645.6 L60.2,645.6 L58.7,645.3 L57.2,645.5 L55.7,645.6 L54.2,645.9 L52.7,645.6 L51.2,646.0 L49.7,645.5 L48.2,645.8 L46.7,645.5 L45.2,645.6 L43.7,646.3 L42.2,649.5 L40.7,651.8 L39.2,644.7 L37.7,644.4 L36.2,644.7 L34.7,644.8 L33.2,645.0 L31.7,644.9 L30.2,645.0 L28.7,645.3 L27.2,646.0 L25.7,647.7 L24.2,645.6 L22.7,645.6 L21.2,645.1 L19.7,645.5 L18.2,645.4 L16.7,645.3 L15.2,645.8 L13.7,645.5 L12.2,645.4 L10.7,646.1 L9.2,646.0 L7.7,645.5 L6.2,645.6 L4.7,646.0Z" fill="#231f20"/>
<path d="M4.7,716.5 L6.2,715.9 L7.7,715.8 L9.2,715.8 L10.7,715.9 L12.2,716.4 L13.7,716.0 L15.2,716.4 L16.7,716.1 L18.2,716.4 L19.7,716.5 L21.2,716.7 L22.7,716.3 L24.2,715.7 L25.7,714.4 L27.2,716.8 L28.7,717.2 L30.2,716.6 L31.7,717.2 L33.2,717.4 L34.7,717.4 L36.2,717.2 L37.7,716.9 L39.2,717.0 L40.7,716.8 L42.2,716.1 L43.7,716.1 L45.2,715.8 L46.7,716.0 L48.2,715.9 L49.7,716.1 L51.2,716.3 L52.7,716.1 L54.2,716.6 L55.7,716.1 L57.2,716.4 L58.7,716.3 L60.2,716.7 L61.7,716.6 L63.2,716.7 L64.7,717.0 L66.2,716.9 L67.7,717.2 L69.2,716.9 L70.7,717.3 L72.2,717.3 L73.7,717.2 L75.2,717.0 L76.7,717.3 L78.2,717.2 L79.7,716.9 L81.2,717.2 L82.7,717.3 L84.2,717.5 L85.7,717.0 L87.2,716.3 L88.7,716.1 L90.2,717.7 L91.7,717.5 L93.2,717.3 L94.7,717.5 L96.2,717.4 L97.7,717.6 L99.2,717.7 L100.7,717.6 L102.2,718.1 L103.7,717.9 L105.2,718.2 L106.7,717.9 L108.2,718.3 L109.7,717.8 L111.2,718.0 L112.7,718.5 L114.2,716.5 L115.7,715.5 L117.2,714.8 L118.7,714.8 L120.2,714.9 L121.7,715.3 L123.2,715.2 L124.7,715.2 L126.2,715.1 L127.7,714.9 L129.2,715.1 L130.7,715.7 L132.2,715.4 L133.7,715.6 L135.2,715.9 L136.7,715.9 L138.2,715.6 L139.7,716.1 L141.2,716.2 L142.7,716.0 L144.2,716.1 L145.7,716.2 L147.2,716.5 L148.7,716.3 L150.2,716.4 L151.7,716.0 L153.2,715.7 L154.7,716.2 L156.2,715.7 L157.7,715.7 L159.2,716.3 L160.7,716.2 L162.2,716.3 L163.7,716.1 L165.2,716.0 L166.7,716.5 L168.2,716.5 L169.7,716.7 L171.2,716.8 L172.7,716.7 L174.2,716.4 L175.7,716.4 L177.2,716.9 L178.7,717.0 L180.2,717.0 L181.7,717.3 L183.2,717.0 L184.7,717.3 L186.2,717.1 L187.7,717.1 L189.2,716.7 L190.7,716.4 L192.2,717.0 L193.7,716.8 L195.2,716.7 L196.7,716.7 L198.2,717.1 L199.7,716.8 L201.2,716.8 L202.7,717.1 L204.2,717.1 L205.7,716.8 L207.2,717.1 L208.7,717.2 L210.2,717.3 L211.7,717.3 L213.2,717.5 L214.7,721.2 L216.2,721.2 L217.7,721.2 L219.2,721.2 L220.7,721.2 L222.2,721.2 L223.7,721.2 L225.2,717.7 L226.7,716.8 L228.2,716.4 L229.7,716.7 L231.2,716.1 L232.7,716.1 L234.2,716.3 L235.7,716.5 L237.2,716.3 L238.7,716.8 L240.2,715.4 L241.7,715.3 L243.2,716.6 L244.7,716.6 L246.2,717.1 L247.7,717.2 L249.2,717.0 L250.7,717.0 L252.2,717.3 L253.7,717.0 L255.2,717.4 L256.7,717.5 L258.2,717.3 L259.7,717.6 L261.2,717.4 L262.7,711.4 L264.2,713.6 L265.7,715.7 L267.2,715.2 L268.7,715.6 L270.2,715.5 L271.7,715.7 L273.2,715.9 L274.7,715.5 L276.2,714.5 L277.7,713.8 L279.2,715.7 L280.7,716.2 L282.2,715.8 L283.7,716.2 L285.2,715.9 L286.7,716.1 L288.2,716.3 L289.7,716.3 L291.2,716.4 L292.7,716.5 L294.2,716.9 L295.7,716.3 L297.2,716.5 L298.7,715.3 L300.2,714.7 L301.7,714.6 L303.2,714.4 L304.7,714.7 L306.2,714.5 L307.7,715.0 L309.2,714.5 L310.7,715.1 L312.2,714.9 L313.7,715.4 L315.2,715.5 L316.7,715.2 L318.2,715.1 L319.7,715.5 L321.2,715.4 L322.7,715.8 L324.2,715.4 L325.7,715.9 L327.2,716.0 L328.7,716.2 L330.2,715.9 L331.7,716.1 L333.2,716.1 L334.7,716.4 L336.2,711.9 L337.7,712.7 L339.2,714.9 L340.7,715.5 L342.2,715.6 L343.7,715.7 L345.2,715.7 L346.7,715.7 L348.2,716.0 L349.7,716.1 L351.2,715.5 L352.7,716.3 L354.2,716.3 L355.7,716.0 L357.2,716.2 L358.7,716.5 L360.2,716.0 L361.7,716.6 L363.2,716.3 L364.7,716.5 L366.2,716.7 L367.7,716.6 L369.2,716.8 L370.7,716.4 L372.2,716.8 L373.7,717.1 L375.2,717.4 L376.7,717.4 L378.2,717.3 L379.7,717.4 L381.2,717.2 L382.7,717.2 L384.2,717.5 L385.7,717.6 L387.2,717.6 L388.7,717.4 L390.2,717.5 L391.7,717.5 L393.2,718.0 L394.7,717.7 L396.2,717.5 L397.7,715.6 L399.2,717.0 L400.7,717.8 L402.2,718.1 L403.7,718.2 L405.2,718.3 L406.7,718.5 L408.2,718.1 L409.7,716.6 L411.2,716.1 L412.7,715.8 L414.2,715.9 L415.7,716.0 L417.2,715.9 L418.7,715.8 L420.2,715.7 L421.7,715.8 L423.2,716.0 L424.7,716.3 L426.2,716.0 L427.7,716.2 L429.2,716.3 L430.7,716.0 L432.2,716.5 L433.7,716.4 L435.2,716.4 L436.7,716.9 L438.2,716.5 L439.7,716.5 L441.2,717.0 L442.7,716.6 L444.2,716.9 L445.7,717.2 L447.2,713.4 L448.7,714.4 L450.2,716.5 L451.7,716.2 L453.2,716.3 L454.7,716.6 L456.2,716.9 L457.7,717.0 L459.2,716.9 L460.7,716.7 L462.2,717.0 L463.7,716.9 L465.2,716.9 L466.7,717.3 L468.2,721.2 L469.7,721.2 L471.2,721.2 L472.7,721.2 L474.2,721.2 L475.7,721.2 L477.2,721.2 L478.7,718.7 L480.2,718.0 L481.7,717.8 L483.2,716.4 L484.7,715.7 L486.2,716.0 L487.7,715.9 L489.2,715.7 L490.7,715.9 L492.2,716.1 L493.7,716.1 L495.2,716.1 L496.7,715.9 L498.2,716.0 L499.7,715.8 L501.2,716.1 L502.7,716.2 L504.2,716.2 L505.7,716.6 L507.2,716.5 L508.7,716.8 L510.2,716.7 L511.7,716.7 L513.2,716.9 L514.7,716.7 L516.2,716.5 L517.7,716.7 L519.2,717.1 L520.7,712.2 L522.2,712.4 L523.7,715.2 L525.2,716.9 L526.7,716.5 L528.2,716.8 L529.7,716.5 L531.2,717.1 L532.7,716.6 L534.2,716.9 L535.7,716.8 L537.2,717.1 L538.7,717.1 L540.2,717.2 L541.7,717.5 L543.2,717.0 L544.7,717.1 L546.2,717.2 L547.7,717.4 L549.2,717.6 L550.7,717.2 L552.2,717.7 L553.7,717.4 L555.2,717.4 L556.7,717.5 L558.2,713.2 L559.7,714.7 L561.2,717.1 L562.7,717.0 L564.2,717.2 L565.7,717.4 L567.2,717.2 L568.7,717.1 L570.2,717.2 L571.7,717.2 L573.2,717.6 L574.7,717.3 L576.2,717.5 L577.7,717.4 L579.2,717.6 L580.7,717.9 L582.2,717.8 L583.7,717.8 L585.2,718.2 L586.7,718.0 L588.2,717.8 L589.7,718.1 L591.2,718.0 L592.7,718.4 L594.2,714.5 L595.7,713.1 L597.2,714.7 L598.7,715.8 L600.2,715.9 L601.7,715.6 L603.2,715.6 L604.7,715.6 L606.2,716.2 L607.7,715.7 L609.2,716.4 L610.7,716.0 L612.2,716.2 L613.7,715.9 L615.2,716.2 L616.7,721.2 L618.2,721.2 L619.7,721.2 L621.2,721.2 L622.7,721.2 L624.2,721.2 L625.7,721.2 L627.2,718.1 L628.7,717.7 L630.2,717.0 L631.7,712.4 L633.2,712.4 L634.7,716.2 L636.2,717.4 L637.7,717.2 L639.2,716.9 L640.7,717.0 L642.2,715.4 L643.7,716.5 L645.2,717.7 L646.7,717.7 L648.2,717.4 L649.7,717.4 L651.2,717.3 L652.7,717.4 L654.2,721.2 L655.7,721.2 L657.2,721.2 L658.7,721.2 L660.2,721.2 L661.7,721.2 L663.2,718.6 L664.7,718.4 L666.2,718.1 L667.7,718.3 L669.2,717.2 L670.7,716.7 L672.2,716.8 L673.7,716.4 L675.2,716.8 L676.7,716.3 L678.2,716.8 L679.7,716.9 L681.2,716.8 L682.7,716.9 L684.2,716.7 L685.7,717.3 L687.2,716.9 L688.7,716.9 L690.2,717.5 L691.7,717.1 L693.2,717.1 L694.7,717.1 L696.2,717.3 L697.7,717.5 L699.2,717.5 L700.7,717.5 L702.2,717.7 L703.7,717.5 L705.2,716.0 L706.7,715.6 L708.2,715.8 L709.7,715.4 L711.2,715.8 L712.7,715.5 L714.2,715.5 L715.7,715.3 L717.2,715.6 L718.7,715.4 L720.2,716.0 L721.7,715.6 L723.2,716.2 L724.7,716.1 L726.2,715.8 L727.7,716.4 L729.2,715.9 L730.7,716.2 L732.2,716.1 L733.7,716.6 L735.2,716.2 L736.7,716.6 L738.2,716.7 L739.7,716.5 L741.2,716.7 L742.7,716.9 L744.2,717.1 L745.7,717.1 L747.2,717.2 L748.7,717.3 L750.2,717.5 L751.7,717.3 L753.2,717.3 L754.7,717.4 L756.2,717.7 L757.7,717.9 L759.2,717.4 L760.7,717.9 L762.2,718.0 L763.7,717.5 L765.2,717.6 L766.7,718.0 L768.2,717.8 L769.7,717.9 L771.2,718.2 L772.7,718.3 L774.2,718.2 L775.7,718.0 L777.2,718.2 L778.7,716.8 L780.2,715.9 L781.7,715.9 L783.2,716.1 L784.7,716.0 L786.2,716.0 L787.7,716.2 L789.2,715.8 L790.7,716.4 L792.2,716.0 L793.7,716.5 L795.2,716.2 L796.7,716.6 L798.2,716.5 L799.7,716.6 L801.2,716.8 L802.7,716.6 L804.2,716.8 L805.7,716.9 L807.2,716.9 L808.7,716.9 L810.2,716.8 L811.7,716.6 L813.2,717.0 L814.7,716.8 L816.2,715.4 L817.7,715.4 L819.2,714.6 L820.7,715.0 L822.2,715.0 L823.7,714.7 L825.2,715.3 L826.7,715.1 L828.2,714.9 L829.7,715.1 L831.2,715.4 L832.7,715.7 L834.2,715.6 L835.7,715.8 L837.2,715.5 L838.7,715.9 L840.2,715.7 L841.7,715.8 L843.2,715.7 L844.7,715.9 L846.2,716.3 L847.7,716.2 L849.2,716.3 L850.7,715.9 L852.2,716.6 L853.7,715.6 L855.2,716.0 L856.7,715.4 L858.2,715.5 L859.7,716.0 L861.2,715.6 L862.7,716.0 L864.2,716.2 L865.7,716.1 L867.2,715.9 L868.7,716.2 L870.2,716.1 L871.7,716.2 L873.2,716.2 L874.7,716.2 L876.2,716.1 L877.7,716.2 L879.2,716.3 L880.7,716.5 L882.2,716.6 L883.7,716.8 L885.2,716.9 L886.7,716.7 L888.2,716.8 L889.7,715.8 L891.2,715.2 L892.7,715.3 L894.2,715.0 L895.7,715.6 L897.2,715.5 L898.7,715.6 L900.2,715.6 L901.7,715.2 L903.2,715.5 L904.7,715.4 L906.2,715.9 L907.7,715.7 L909.2,715.8 L910.7,716.2 L912.2,715.8 L913.7,716.2 L915.2,715.9 L916.7,715.9 L918.2,716.0 L919.7,716.7 L921.2,716.2 L922.7,716.7 L924.2,716.6 L925.7,716.6 L927.2,717.1 L928.7,716.8 L930.2,716.9 L931.7,717.0 L933.2,717.3 L934.7,717.1 L936.2,717.4 L937.7,717.5 L939.2,717.8 L940.7,717.5 L942.2,717.8 L943.7,717.5 L945.2,718.0 L946.7,718.0 L948.2,717.4 L949.7,718.2 L951.2,717.8 L952.7,718.1 L954.2,717.8 L955.7,718.2 L957.2,718.3 L958.7,718.1 L960.2,718.5 L961.7,717.9 L963.2,718.1 L964.7,717.7 L966.2,717.3 L967.7,716.6 L969.2,716.9 L970.7,717.0 L972.2,716.6 L973.7,717.1 L975.2,716.9 L976.7,716.8 L978.2,717.1 L979.7,717.2 L981.2,717.1 L982.7,717.5 L984.2,717.1 L985.7,717.5 L987.2,717.3 L988.7,717.6 L990.2,717.4 L991.7,717.7 L993.2,717.8 L994.7,717.9 L996.2,717.9 L997.7,718.0 L999.2,718.0 L1000.7,716.5 L1002.2,716.2 L1003.7,715.4 L1005.2,716.0 L1006.7,715.9 L1008.2,715.6 L1009.7,715.7 L1011.2,715.8 L1012.7,715.6 L1014.2,716.2 L1015.7,715.7 L1017.2,715.8 L1018.7,716.4 L1020.2,716.0 L1021.7,716.5 L1023.2,716.4 L1024.7,716.2 L1026.2,716.1 L1027.7,716.7 L1029.2,716.4 L1030.7,716.6 L1032.2,716.7 L1033.7,716.7 L1035.2,716.5 L1036.7,716.9 L1038.2,717.2 L1039.7,717.0 L1041.2,717.0 L1042.7,716.9 L1044.2,717.0 L1045.7,717.4 L1047.2,716.9 L1048.7,717.4 L1050.2,716.9 L1051.7,717.5 L1053.2,717.6 L1054.7,717.5 L1056.2,717.7 L1057.7,717.4 L1059.2,717.7 L1060.7,717.6 L1062.2,717.3 L1063.7,717.9 L1065.2,717.5 L1066.7,718.1 L1068.2,718.1 L1069.7,717.5 L1071.2,717.6 L1072.7,718.2 L1074.2,717.7 L1075.7,717.1 L1077.2,716.5 L1078.7,716.5 L1080.2,716.2 L1081.7,716.5 L1083.2,716.2 L1084.7,715.9 L1086.2,716.3 L1087.7,716.5 L1089.2,716.3 L1090.7,716.2 L1092.2,716.8 L1093.7,716.4 L1095.2,716.6 L1096.7,716.9 L1098.2,716.9 L1099.7,717.0 L1101.2,717.2 L1102.7,716.8 L1104.2,716.8 L1105.7,717.4 L1107.2,717.2 L1108.7,717.4 L1110.2,717.5 L1111.7,715.9 L1113.2,715.3 L1114.7,715.4 L1116.2,714.7 L1117.7,714.9 L1119.2,715.1 L1120.7,715.2 L1122.2,715.1 L1123.7,715.4 L1125.2,715.2 L1126.7,715.3 L1128.2,715.4 L1129.7,715.6 L1131.2,715.4 L1132.7,715.8 L1134.2,715.5 L1135.7,716.1 L1137.2,715.9 L1138.7,715.8 L1140.2,716.4 L1141.7,716.0 L1143.2,716.0 L1144.7,716.1 L1146.2,716.6 L1147.7,716.4 L1149.2,716.2 L1150.7,716.5 L1152.2,716.1 L1153.7,716.5 L1155.2,716.7 L1156.7,716.1 L1158.2,716.3 L1159.7,716.5 L1161.2,716.6 L1162.7,716.7 L1162.7,728.0 L1161.2,728.6 L1159.7,728.5 L1158.2,728.8 L1156.7,728.7 L1155.2,728.3 L1153.7,728.7 L1152.2,728.7 L1150.7,728.4 L1149.2,728.4 L1147.7,728.6 L1146.2,728.5 L1144.7,728.5 L1143.2,729.1 L1141.7,729.2 L1140.2,729.0 L1138.7,728.7 L1137.2,728.9 L1135.7,729.3 L1134.2,729.4 L1132.7,729.0 L1131.2,729.3 L1129.7,729.5 L1128.2,729.2 L1126.7,729.2 L1125.2,729.5 L1123.7,729.8 L1122.2,729.7 L1120.7,729.7 L1119.2,729.7 L1117.7,729.8 L1116.2,729.7 L1114.7,730.2 L1113.2,729.4 L1111.7,729.1 L1110.2,727.5 L1108.7,727.5 L1107.2,727.9 L1105.7,727.8 L1104.2,727.8 L1102.7,728.3 L1101.2,727.9 L1099.7,727.8 L1098.2,728.3 L1096.7,728.1 L1095.2,728.0 L1093.7,728.2 L1092.2,728.2 L1090.7,728.6 L1089.2,728.8 L1087.7,728.8 L1086.2,729.0 L1084.7,729.1 L1083.2,728.7 L1081.7,728.9 L1080.2,728.8 L1078.7,729.0 L1077.2,730.9 L1075.7,731.9 L1074.2,727.3 L1072.7,726.9 L1071.2,727.3 L1069.7,726.8 L1068.2,727.5 L1066.7,727.2 L1065.2,727.6 L1063.7,727.3 L1062.2,727.2 L1060.7,727.4 L1059.2,727.2 L1057.7,727.4 L1056.2,727.5 L1054.7,727.4 L1053.2,727.5 L1051.7,727.5 L1050.2,728.0 L1048.7,727.6 L1047.2,728.2 L1045.7,728.3 L1044.2,728.0 L1042.7,727.8 L1041.2,727.9 L1039.7,728.2 L1038.2,727.8 L1036.7,728.0 L1035.2,728.2 L1033.7,728.0 L1032.2,728.3 L1030.7,728.6 L1029.2,728.4 L1027.7,728.7 L1026.2,728.9 L1024.7,728.6 L1023.2,728.7 L1021.7,728.9 L1020.2,729.1 L1018.7,729.1 L1017.2,729.0 L1015.7,729.3 L1014.2,729.0 L1012.7,729.4 L1011.2,729.4 L1009.7,729.6 L1008.2,729.2 L1006.7,729.4 L1005.2,729.2 L1003.7,729.5 L1002.2,729.4 L1000.7,728.2 L999.2,726.8 L997.7,727.1 L996.2,727.2 L994.7,727.2 L993.2,727.1 L991.7,727.2 L990.2,727.6 L988.7,727.2 L987.2,727.6 L985.7,728.0 L984.2,727.7 L982.7,727.6 L981.2,727.5 L979.7,728.1 L978.2,728.2 L976.7,728.3 L975.2,728.2 L973.7,728.1 L972.2,728.1 L970.7,728.0 L969.2,728.3 L967.7,728.3 L966.2,731.9 L964.7,733.9 L963.2,726.6 L961.7,726.8 L960.2,727.1 L958.7,727.2 L957.2,727.1 L955.7,726.8 L954.2,726.8 L952.7,727.1 L951.2,727.2 L949.7,727.1 L948.2,727.1 L946.7,727.5 L945.2,727.2 L943.7,727.5 L942.2,727.1 L940.7,727.5 L939.2,727.3 L937.7,727.4 L936.2,727.4 L934.7,727.5 L933.2,727.5 L931.7,728.0 L930.2,727.9 L928.7,727.9 L927.2,727.9 L925.7,728.5 L924.2,728.2 L922.7,728.7 L921.2,728.7 L919.7,728.6 L918.2,728.5 L916.7,729.0 L915.2,728.8 L913.7,728.9 L912.2,728.8 L910.7,729.4 L909.2,728.9 L907.7,729.1 L906.2,729.1 L904.7,729.2 L903.2,729.6 L901.7,729.4 L900.2,729.6 L898.7,729.7 L897.2,729.4 L895.7,729.8 L894.2,729.8 L892.7,729.4 L891.2,729.3 L889.7,728.9 L888.2,728.0 L886.7,727.9 L885.2,728.4 L883.7,728.1 L882.2,728.2 L880.7,728.0 L879.2,728.4 L877.7,728.4 L876.2,728.8 L874.7,728.9 L873.2,729.0 L871.7,728.6 L870.2,728.8 L868.7,728.8 L867.2,728.8 L865.7,729.1 L864.2,728.8 L862.7,728.9 L861.2,729.0 L859.7,728.9 L858.2,729.1 L856.7,729.4 L855.2,729.5 L853.7,729.3 L852.2,728.8 L850.7,729.2 L849.2,728.9 L847.7,728.8 L846.2,729.1 L844.7,729.1 L843.2,729.0 L841.7,729.5 L840.2,729.6 L838.7,729.4 L837.2,729.1 L835.7,729.6 L834.2,729.3 L832.7,729.8 L831.2,730.0 L829.7,729.7 L828.2,730.1 L826.7,729.8 L825.2,729.9 L823.7,729.8 L822.2,730.3 L820.7,730.4 L819.2,729.9 L817.7,730.1 L816.2,729.6 L814.7,727.8 L813.2,727.8 L811.7,728.3 L810.2,728.3 L808.7,728.4 L807.2,728.5 L805.7,728.6 L804.2,728.5 L802.7,728.8 L801.2,728.5 L799.7,728.8 L798.2,728.8 L796.7,728.9 L795.2,728.7 L793.7,729.1 L792.2,729.0 L790.7,729.1 L789.2,729.0 L787.7,729.3 L786.2,729.2 L784.7,728.9 L783.2,729.1 L781.7,729.0 L780.2,729.1 L778.7,728.1 L777.2,726.7 L775.7,726.9 L774.2,726.9 L772.7,726.7 L771.2,727.0 L769.7,727.0 L768.2,726.9 L766.7,727.4 L765.2,727.1 L763.7,727.2 L762.2,727.6 L760.7,727.6 L759.2,727.1 L757.7,727.6 L756.2,727.2 L754.7,727.6 L753.2,727.6 L751.7,727.6 L750.2,728.0 L748.7,727.4 L747.2,727.8 L745.7,727.6 L744.2,727.9 L742.7,728.2 L741.2,728.2 L739.7,728.6 L738.2,728.2 L736.7,728.2 L735.2,728.3 L733.7,728.9 L732.2,729.0 L730.7,729.0 L729.2,729.0 L727.7,728.9 L726.2,728.7 L724.7,729.3 L723.2,728.9 L721.7,729.1 L720.2,728.9 L718.7,729.3 L717.2,729.5 L715.7,729.7 L714.2,729.4 L712.7,729.2 L711.2,729.5 L709.7,729.9 L708.2,729.6 L706.7,729.3 L705.2,728.4 L703.7,727.5 L702.2,727.4 L700.7,727.4 L699.2,727.6 L697.7,727.4 L696.2,727.6 L694.7,727.7 L693.2,727.9 L691.7,728.0 L690.2,727.8 L688.7,728.0 L687.2,728.0 L685.7,727.8 L684.2,727.7 L682.7,728.3 L681.2,728.4 L679.7,728.3 L678.2,728.5 L676.7,728.0 L675.2,728.1 L673.7,728.4 L672.2,728.4 L670.7,728.3 L669.2,727.6 L667.7,726.9 L666.2,726.4 L664.7,726.6 L663.2,726.2 L661.7,723.8 L660.2,723.8 L658.7,723.8 L657.2,723.8 L655.7,723.8 L654.2,723.8 L652.7,727.4 L651.2,727.5 L649.7,727.2 L648.2,727.2 L646.7,727.3 L645.2,727.9 L643.7,728.9 L642.2,730.1 L640.7,727.4 L639.2,727.5 L637.7,727.5 L636.2,728.0 L634.7,729.0 L633.2,732.9 L631.7,733.3 L630.2,727.8 L628.7,727.3 L627.2,726.7 L625.7,723.8 L624.2,723.8 L622.7,723.8 L621.2,723.8 L619.7,723.8 L618.2,723.8 L616.7,723.8 L615.2,728.6 L613.7,729.1 L612.2,728.6 L610.7,728.9 L609.2,729.0 L607.7,729.3 L606.2,728.9 L604.7,729.3 L603.2,729.0 L601.7,729.4 L600.2,729.0 L598.7,729.1 L597.2,730.5 L595.7,732.6 L594.2,730.8 L592.7,726.8 L591.2,726.5 L589.7,726.8 L588.2,727.0 L586.7,726.8 L585.2,726.8 L583.7,727.1 L582.2,726.9 L580.7,727.2 L579.2,727.5 L577.7,727.7 L576.2,727.7 L574.7,727.4 L573.2,727.2 L571.7,727.8 L570.2,727.4 L568.7,727.4 L567.2,727.9 L565.7,727.6 L564.2,727.7 L562.7,727.6 L561.2,727.4 L559.7,727.8 L558.2,727.9 L556.7,727.0 L555.2,727.4 L553.7,727.3 L552.2,727.3 L550.7,727.5 L549.2,727.8 L547.7,727.3 L546.2,727.6 L544.7,727.8 L543.2,727.4 L541.7,727.6 L540.2,727.7 L538.7,727.6 L537.2,727.6 L535.7,727.8 L534.2,728.2 L532.7,728.4 L531.2,728.3 L529.7,728.6 L528.2,728.5 L526.7,728.3 L525.2,728.4 L523.7,729.7 L522.2,732.8 L520.7,732.6 L519.2,727.8 L517.7,728.4 L516.2,727.9 L514.7,727.9 L513.2,728.3 L511.7,728.5 L510.2,728.7 L508.7,728.7 L507.2,728.4 L505.7,728.6 L504.2,728.9 L502.7,728.4 L501.2,729.1 L499.7,729.2 L498.2,728.7 L496.7,729.0 L495.2,728.9 L493.7,729.1 L492.2,729.3 L490.7,729.1 L489.2,729.0 L487.7,729.2 L486.2,729.0 L484.7,729.0 L483.2,728.3 L481.7,727.0 L480.2,727.1 L478.7,726.6 L477.2,723.8 L475.7,723.8 L474.2,723.8 L472.7,723.8 L471.2,723.8 L469.7,723.8 L468.2,723.8 L466.7,727.6 L465.2,727.8 L463.7,727.8 L462.2,727.8 L460.7,728.1 L459.2,728.2 L457.7,728.1 L456.2,728.2 L454.7,728.1 L453.2,728.6 L451.7,728.6 L450.2,728.9 L448.7,730.9 L447.2,731.9 L445.7,728.3 L444.2,728.0 L442.7,728.3 L441.2,728.2 L439.7,728.5 L438.2,728.5 L436.7,728.2 L435.2,728.2 L433.7,728.9 L432.2,728.6 L430.7,729.0 L429.2,728.7 L427.7,728.5 L426.2,729.1 L424.7,728.7 L423.2,728.7 L421.7,729.1 L420.2,728.8 L418.7,729.5 L417.2,729.3 L415.7,729.0 L414.2,729.6 L412.7,729.0 L411.2,728.6 L409.7,728.3 L408.2,726.4 L406.7,727.0 L405.2,727.0 L403.7,727.1 L402.2,726.7 L400.7,727.2 L399.2,728.2 L397.7,729.4 L396.2,727.5 L394.7,727.5 L393.2,726.9 L391.7,727.2 L390.2,727.0 L388.7,727.4 L387.2,727.3 L385.7,727.7 L384.2,727.8 L382.7,727.8 L381.2,727.5 L379.7,727.6 L378.2,727.6 L376.7,727.8 L375.2,727.6 L373.7,728.1 L372.2,727.7 L370.7,728.6 L369.2,728.1 L367.7,728.6 L366.2,728.8 L364.7,728.6 L363.2,728.5 L361.7,728.8 L360.2,728.6 L358.7,729.1 L357.2,728.5 L355.7,728.6 L354.2,729.0 L352.7,729.0 L351.2,729.0 L349.7,729.4 L348.2,729.3 L346.7,729.5 L345.2,729.1 L343.7,729.7 L342.2,729.5 L340.7,729.8 L339.2,730.4 L337.7,733.1 L336.2,734.0 L334.7,728.8 L333.2,728.8 L331.7,729.1 L330.2,729.2 L328.7,729.4 L327.2,729.1 L325.7,729.0 L324.2,729.6 L322.7,729.4 L321.2,729.3 L319.7,729.4 L318.2,729.6 L316.7,730.0 L315.2,730.0 L313.7,730.1 L312.2,730.0 L310.7,730.4 L309.2,730.1 L307.7,730.2 L306.2,730.4 L304.7,730.4 L303.2,730.2 L301.7,730.1 L300.2,729.9 L298.7,729.4 L297.2,728.3 L295.7,728.5 L294.2,728.3 L292.7,728.8 L291.2,728.8 L289.7,728.6 L288.2,728.6 L286.7,728.9 L285.2,728.6 L283.7,729.1 L282.2,729.1 L280.7,728.8 L279.2,729.0 L277.7,731.4 L276.2,730.8 L274.7,729.3 L273.2,729.6 L271.7,729.4 L270.2,729.4 L268.7,729.9 L267.2,729.3 L265.7,729.7 L264.2,731.8 L262.7,733.9 L261.2,727.2 L259.7,727.7 L258.2,727.8 L256.7,728.0 L255.2,727.6 L253.7,728.0 L252.2,728.0 L250.7,728.2 L249.2,727.9 L247.7,728.1 L246.2,728.0 L244.7,728.4 L243.2,728.1 L241.7,730.1 L240.2,730.2 L238.7,728.3 L237.2,728.4 L235.7,728.3 L234.2,728.3 L232.7,728.4 L231.2,728.4 L229.7,728.8 L228.2,728.1 L226.7,727.9 L225.2,726.9 L223.7,723.8 L222.2,723.8 L220.7,723.8 L219.2,723.8 L217.7,723.8 L216.2,723.8 L214.7,723.8 L213.2,728.0 L211.7,727.7 L210.2,727.6 L208.7,727.7 L207.2,727.8 L205.7,727.9 L204.2,728.3 L202.7,728.3 L201.2,728.4 L199.7,728.2 L198.2,728.1 L196.7,728.5 L195.2,728.2 L193.7,728.2 L192.2,728.2 L190.7,728.5 L189.2,728.4 L187.7,728.0 L186.2,727.6 L184.7,727.8 L183.2,727.8 L181.7,728.0 L180.2,727.9 L178.7,728.0 L177.2,728.5 L175.7,728.0 L174.2,728.7 L172.7,728.1 L171.2,728.7 L169.7,728.3 L168.2,728.5 L166.7,728.7 L165.2,728.4 L163.7,728.5 L162.2,728.6 L160.7,729.1 L159.2,729.0 L157.7,729.0 L156.2,729.3 L154.7,729.3 L153.2,728.9 L151.7,728.7 L150.2,729.0 L148.7,728.7 L147.2,728.6 L145.7,729.0 L144.2,728.8 L142.7,729.0 L141.2,728.8 L139.7,729.3 L138.2,729.3 L136.7,729.2 L135.2,729.2 L133.7,729.2 L132.2,729.8 L130.7,729.8 L129.2,729.7 L127.7,730.0 L126.2,729.7 L124.7,730.0 L123.2,730.2 L121.7,730.0 L120.2,730.2 L118.7,729.8 L117.2,729.9 L115.7,729.5 L114.2,728.4 L112.7,727.1 L111.2,726.6 L109.7,726.7 L108.2,727.0 L106.7,726.9 L105.2,727.3 L103.7,727.1 L102.2,726.9 L100.7,727.2 L99.2,727.3 L97.7,727.5 L96.2,727.0 L94.7,727.5 L93.2,727.5 L91.7,727.5 L90.2,727.5 L88.7,729.6 L87.2,728.9 L85.7,727.3 L84.2,727.8 L82.7,727.4 L81.2,727.5 L79.7,728.1 L78.2,728.1 L76.7,727.9 L75.2,727.7 L73.7,728.2 L72.2,728.2 L70.7,727.7 L69.2,728.4 L67.7,728.4 L66.2,728.2 L64.7,727.9 L63.2,728.2 L61.7,728.2 L60.2,728.2 L58.7,728.5 L57.2,728.8 L55.7,728.4 L54.2,728.7 L52.7,728.7 L51.2,728.8 L49.7,729.0 L48.2,728.9 L46.7,728.9 L45.2,729.0 L43.7,729.3 L42.2,729.1 L40.7,728.5 L39.2,727.7 L37.7,727.6 L36.2,727.7 L34.7,727.8 L33.2,728.0 L31.7,728.2 L30.2,728.4 L28.7,728.0 L27.2,728.3 L25.7,730.6 L24.2,729.4 L22.7,728.1 L21.2,728.3 L19.7,728.7 L18.2,728.6 L16.7,728.3 L15.2,728.4 L13.7,728.6 L12.2,728.7 L10.7,729.0 L9.2,728.6 L7.7,728.9 L6.2,728.9 L4.7,728.6Z" fill="#231f20"/>
<rect x="2.5" y="768" width="1161.5" height="82" fill="#ff94a6"/>
<rect x="2.5" y="768" width="1161.5" height="2" fill="#8c5561"/>
<rect x="2.5" y="807" width="1161.5" height="2" fill="#8c5561"/>
<rect x="2.5" y="768" width="2.2" height="82" fill="#8c5561"/>
<rect x="38.71" y="809" width="1.7" height="41" fill="rgba(120,40,60,0.18)"/>
<rect x="75.67" y="809" width="1.7" height="41" fill="rgba(120,40,60,0.18)"/>
<rect x="112.63" y="809" width="1.7" height="41" fill="rgba(120,40,60,0.18)"/>
<rect x="149.59" y="809" width="1.7" height="41" fill="rgba(120,40,60,0.18)"/>
<rect x="186.55" y="809" width="1.7" height="41" fill="rgba(120,40,60,0.18)"/>
<rect x="223.51" y="809" width="1.7" height="41" fill="rgba(120,40,60,0.18)"/>
<rect x="260.47" y="809" width="1.7" height="41" fill="rgba(120,40,60,0.18)"/>
<rect x="297.43" y="809" width="1.7" height="41" fill="rgba(120,40,60,0.18)"/>
<rect x="334.39" y="809" width="1.7" height="41" fill="rgba(120,40,60,0.18)"/>
<rect x="371.35" y="809" width="1.7" height="41" fill="rgba(120,40,60,0.18)"/>
<rect x="408.31" y="809" width="1.7" height="41" fill="rgba(120,40,60,0.18)"/>
<rect x="445.27" y="809" width="1.7" height="41" fill="rgba(120,40,60,0.18)"/>
<rect x="482.23" y="809" width="1.7" height="41" fill="rgba(120,40,60,0.18)"/>
<rect x="519.19" y="809" width="1.7" height="41" fill="rgba(120,40,60,0.18)"/>
<rect x="556.15" y="809" width="1.7" height="41" fill="rgba(120,40,60,0.18)"/>
<rect x="593.11" y="809" width="1.7" height="41" fill="rgba(120,40,60,0.18)"/>
<rect x="630.07" y="809" width="1.7" height="41" fill="rgba(120,40,60,0.18)"/>
<rect x="667.03" y="809" width="1.7" height="41" fill="rgba(120,40,60,0.18)"/>
<rect x="703.99" y="809" width="1.7" height="41" fill="rgba(120,40,60,0.18)"/>
<rect x="740.95" y="809" width="1.7" height="41" fill="rgba(120,40,60,0.18)"/>
<rect x="777.91" y="809" width="1.7" height="41" fill="rgba(120,40,60,0.18)"/>
<rect x="814.87" y="809" width="1.7" height="41" fill="rgba(120,40,60,0.18)"/>
<rect x="851.83" y="809" width="1.7" height="41" fill="rgba(120,40,60,0.18)"/>
<rect x="888.79" y="809" width="1.7" height="41" fill="rgba(120,40,60,0.18)"/>
<rect x="925.75" y="809" width="1.7" height="41" fill="rgba(120,40,60,0.18)"/>
<rect x="962.71" y="809" width="1.7" height="41" fill="rgba(120,40,60,0.18)"/>
<rect x="999.67" y="809" width="1.7" height="41" fill="rgba(120,40,60,0.18)"/>
<rect x="1036.63" y="809" width="1.7" height="41" fill="rgba(120,40,60,0.18)"/>
<rect x="1073.59" y="809" width="1.7" height="41" fill="rgba(120,40,60,0.18)"/>
<rect x="1110.55" y="809" width="1.7" height="41" fill="rgba(120,40,60,0.18)"/>
<rect x="1147.51" y="809" width="1.7" height="41" fill="rgba(120,40,60,0.18)"/>
<path d="M4.7,850 L4.7,844.4 L6.2,844.3 L7.7,844.3 L9.2,844.2 L10.7,844.5 L12.2,844.3 L13.7,845.7 L15.2,845.1 L16.7,844.5 L18.2,845.0 L19.7,844.7 L21.2,845.9 L22.7,845.4 L24.2,845.8 L25.7,845.5 L27.2,845.5 L28.7,846.4 L30.2,846.1 L31.7,846.1 L33.2,845.3 L34.7,845.6 L36.2,846.5 L37.7,845.7 L39.2,846.6 L40.7,846.0 L42.2,846.8 L43.7,847.0 L45.2,845.9 L46.7,846.9 L48.2,846.9 L49.7,845.9 L51.2,846.2 L52.7,847.0 L54.2,846.2 L55.7,846.8 L57.2,846.7 L58.7,847.4 L60.2,846.5 L61.7,846.9 L63.2,846.6 L64.7,846.7 L66.2,847.6 L67.7,847.6 L69.2,847.9 L70.7,848.0 L72.2,848.2 L73.7,848.0 L75.2,847.6 L76.7,844.2 L78.2,843.3 L79.7,843.9 L81.2,844.0 L82.7,843.4 L84.2,843.9 L85.7,844.3 L87.2,844.1 L88.7,843.9 L90.2,844.9 L91.7,843.7 L93.2,845.1 L94.7,844.1 L96.2,844.1 L97.7,845.3 L99.2,844.3 L100.7,845.0 L102.2,844.8 L103.7,845.7 L105.2,845.7 L106.7,845.6 L108.2,844.6 L109.7,845.7 L111.2,845.0 L112.7,844.9 L114.2,838.7 L115.7,833.4 L117.2,836.1 L118.7,837.8 L120.2,838.9 L121.7,841.0 L123.2,840.9 L124.7,841.4 L126.2,841.8 L127.7,843.3 L129.2,842.3 L130.7,843.7 L132.2,843.5 L133.7,843.2 L135.2,842.9 L136.7,842.4 L138.2,839.4 L139.7,841.3 L141.2,842.7 L142.7,843.4 L144.2,844.2 L145.7,845.8 L147.2,841.1 L148.7,841.3 L150.2,842.3 L151.7,844.5 L153.2,845.4 L154.7,844.7 L156.2,845.8 L157.7,846.3 L159.2,846.8 L160.7,846.4 L162.2,846.3 L163.7,846.9 L165.2,847.0 L166.7,847.6 L168.2,846.4 L169.7,847.7 L171.2,847.1 L172.7,846.6 L174.2,847.6 L175.7,846.8 L177.2,846.5 L178.7,846.9 L180.2,846.7 L181.7,847.7 L183.2,847.2 L184.7,847.6 L186.2,846.6 L187.7,844.8 L189.2,839.2 L190.7,839.0 L192.2,840.9 L193.7,842.0 L195.2,843.7 L196.7,844.3 L198.2,844.5 L199.7,845.3 L201.2,845.8 L202.7,845.9 L204.2,846.4 L205.7,846.2 L207.2,845.4 L208.7,845.6 L210.2,846.1 L211.7,846.3 L213.2,846.5 L214.7,846.9 L216.2,846.7 L217.7,846.0 L219.2,845.9 L220.7,846.6 L222.2,846.0 L223.7,846.0 L225.2,844.8 L226.7,844.8 L228.2,844.7 L229.7,845.3 L231.2,844.9 L232.7,845.5 L234.2,845.3 L235.7,844.9 L237.2,845.1 L238.7,845.7 L240.2,844.8 L241.7,845.3 L243.2,845.4 L244.7,846.2 L246.2,845.5 L247.7,846.0 L249.2,845.4 L250.7,845.8 L252.2,845.3 L253.7,845.6 L255.2,845.4 L256.7,846.1 L258.2,845.7 L259.7,845.6 L261.2,845.5 L262.7,837.7 L264.2,834.4 L265.7,837.4 L267.2,839.9 L268.7,841.2 L270.2,842.5 L271.7,844.0 L273.2,844.7 L274.7,845.7 L276.2,845.2 L277.7,845.4 L279.2,846.2 L280.7,846.1 L282.2,846.2 L283.7,846.3 L285.2,847.1 L286.7,846.3 L288.2,846.6 L289.7,846.5 L291.2,846.9 L292.7,846.6 L294.2,846.4 L295.7,846.6 L297.2,846.5 L298.7,847.5 L300.2,847.3 L301.7,846.9 L303.2,846.6 L304.7,847.2 L306.2,846.6 L307.7,846.7 L309.2,847.5 L310.7,846.9 L312.2,847.2 L313.7,847.5 L315.2,847.4 L316.7,847.1 L318.2,847.3 L319.7,847.3 L321.2,847.5 L322.7,846.9 L324.2,847.0 L325.7,846.7 L327.2,846.7 L328.7,847.2 L330.2,846.3 L331.7,847.5 L333.2,847.0 L334.7,847.2 L336.2,846.7 L337.7,847.1 L339.2,846.2 L340.7,846.9 L342.2,847.4 L343.7,846.7 L345.2,847.5 L346.7,846.9 L348.2,847.3 L349.7,847.0 L351.2,846.5 L352.7,846.8 L354.2,847.4 L355.7,846.9 L357.2,847.2 L358.7,847.6 L360.2,848.0 L361.7,847.4 L363.2,847.5 L364.7,847.1 L366.2,847.1 L367.7,847.7 L369.2,848.1 L370.7,847.4 L372.2,844.2 L373.7,844.1 L375.2,843.6 L376.7,843.6 L378.2,844.3 L379.7,843.7 L381.2,843.4 L382.7,844.2 L384.2,844.3 L385.7,844.6 L387.2,844.6 L388.7,843.7 L390.2,844.6 L391.7,843.9 L393.2,844.1 L394.7,844.6 L396.2,845.1 L397.7,844.2 L399.2,845.0 L400.7,845.2 L402.2,845.4 L403.7,844.5 L405.2,845.3 L406.7,845.7 L408.2,845.5 L409.7,842.8 L411.2,835.7 L412.7,838.0 L414.2,840.1 L415.7,840.9 L417.2,841.9 L418.7,843.8 L420.2,843.7 L421.7,844.5 L423.2,843.9 L424.7,844.4 L426.2,845.3 L427.7,845.4 L429.2,845.7 L430.7,844.6 L432.2,845.6 L433.7,845.2 L435.2,845.4 L436.7,845.2 L438.2,845.3 L439.7,845.1 L441.2,846.0 L442.7,845.1 L444.2,845.8 L445.7,845.4 L447.2,844.3 L448.7,844.5 L450.2,844.2 L451.7,844.4 L453.2,844.7 L454.7,844.2 L456.2,844.6 L457.7,845.4 L459.2,845.2 L460.7,845.1 L462.2,844.5 L463.7,844.7 L465.2,845.2 L466.7,846.1 L468.2,845.1 L469.7,845.7 L471.2,845.6 L472.7,845.5 L474.2,845.7 L475.7,846.0 L477.2,845.5 L478.7,846.4 L480.2,846.5 L481.7,845.9 L483.2,846.0 L484.7,839.8 L486.2,838.7 L487.7,841.7 L489.2,842.1 L490.7,843.3 L492.2,844.5 L493.7,845.3 L495.2,845.1 L496.7,845.3 L498.2,846.6 L499.7,846.3 L501.2,846.4 L502.7,846.5 L504.2,846.8 L505.7,847.2 L507.2,846.6 L508.7,846.3 L510.2,847.4 L511.7,847.2 L513.2,846.4 L514.7,846.4 L516.2,846.6 L517.7,847.5 L519.2,846.5 L520.7,845.4 L522.2,845.4 L523.7,845.9 L525.2,846.9 L526.7,845.9 L528.2,846.8 L529.7,846.3 L531.2,846.0 L532.7,846.4 L534.2,847.3 L535.7,847.1 L537.2,846.3 L538.7,845.7 L540.2,841.0 L541.7,841.3 L543.2,843.0 L544.7,843.3 L546.2,844.9 L547.7,845.3 L549.2,845.3 L550.7,846.1 L552.2,846.3 L553.7,845.8 L555.2,845.7 L556.7,845.6 L558.2,842.9 L559.7,840.4 L561.2,842.2 L562.7,843.0 L564.2,844.1 L565.7,844.2 L567.2,845.5 L568.7,846.3 L570.2,845.7 L571.7,846.7 L573.2,846.2 L574.7,846.5 L576.2,846.0 L577.7,846.6 L579.2,846.5 L580.7,847.1 L582.2,846.7 L583.7,847.1 L585.2,846.5 L586.7,846.8 L588.2,847.3 L589.7,847.2 L591.2,847.0 L592.7,846.5 L594.2,845.0 L595.7,844.3 L597.2,844.4 L598.7,845.3 L600.2,844.5 L601.7,845.4 L603.2,845.4 L604.7,844.9 L606.2,845.4 L607.7,844.6 L609.2,845.2 L610.7,845.5 L612.2,844.9 L613.7,846.0 L615.2,845.1 L616.7,846.1 L618.2,846.1 L619.7,845.0 L621.2,845.5 L622.7,846.2 L624.2,846.4 L625.7,845.3 L627.2,845.8 L628.7,845.6 L630.2,846.6 L631.7,846.0 L633.2,846.5 L634.7,846.7 L636.2,846.6 L637.7,846.3 L639.2,846.7 L640.7,846.8 L642.2,847.2 L643.7,846.3 L645.2,846.6 L646.7,846.4 L648.2,847.0 L649.7,846.5 L651.2,847.0 L652.7,847.0 L654.2,847.1 L655.7,846.9 L657.2,847.5 L658.7,848.0 L660.2,848.1 L661.7,847.9 L663.2,848.2 L664.7,847.1 L666.2,847.8 L667.7,847.4 L669.2,844.3 L670.7,843.7 L672.2,843.2 L673.7,843.7 L675.2,844.0 L676.7,844.0 L678.2,844.6 L679.7,844.6 L681.2,844.7 L682.7,844.5 L684.2,844.5 L685.7,843.9 L687.2,845.0 L688.7,845.0 L690.2,845.0 L691.7,845.3 L693.2,845.2 L694.7,845.3 L696.2,845.1 L697.7,845.8 L699.2,844.6 L700.7,845.5 L702.2,844.7 L703.7,845.2 L705.2,840.7 L706.7,834.2 L708.2,834.7 L709.7,837.9 L711.2,838.8 L712.7,840.5 L714.2,840.8 L715.7,841.4 L717.2,842.7 L718.7,843.0 L720.2,843.5 L721.7,843.5 L723.2,843.8 L724.7,843.5 L726.2,842.8 L727.7,843.2 L729.2,839.8 L730.7,841.1 L732.2,842.5 L733.7,842.7 L735.2,843.3 L736.7,846.7 L738.2,842.0 L739.7,841.0 L741.2,842.1 L742.7,843.6 L744.2,844.7 L745.7,844.6 L747.2,846.4 L748.7,846.7 L750.2,846.0 L751.7,846.7 L753.2,847.3 L754.7,846.7 L756.2,846.2 L757.7,846.9 L759.2,847.2 L760.7,847.6 L762.2,847.6 L763.7,846.5 L765.2,847.1 L766.7,846.5 L768.2,847.7 L769.7,847.5 L771.2,847.7 L772.7,847.3 L774.2,847.7 L775.7,847.5 L777.2,847.2 L778.7,846.1 L780.2,841.1 L781.7,839.9 L783.2,840.4 L784.7,842.8 L786.2,843.4 L787.7,844.3 L789.2,844.7 L790.7,845.7 L792.2,845.7 L793.7,846.2 L795.2,845.8 L796.7,845.4 L798.2,846.0 L799.7,845.7 L801.2,846.6 L802.7,847.0 L804.2,846.3 L805.7,846.3 L807.2,846.2 L808.7,846.5 L810.2,846.2 L811.7,846.1 L813.2,845.8 L814.7,846.7 L816.2,845.1 L817.7,844.6 L819.2,845.5 L820.7,845.7 L822.2,845.4 L823.7,845.8 L825.2,844.9 L826.7,844.9 L828.2,845.6 L829.7,845.9 L831.2,846.0 L832.7,845.8 L834.2,846.1 L835.7,845.6 L837.2,845.5 L838.7,846.0 L840.2,846.3 L841.7,845.4 L843.2,846.4 L844.7,846.2 L846.2,846.1 L847.7,846.0 L849.2,846.5 L850.7,846.1 L852.2,846.3 L853.7,839.3 L855.2,834.0 L856.7,836.7 L858.2,839.5 L859.7,841.1 L861.2,842.7 L862.7,843.9 L864.2,844.2 L865.7,844.9 L867.2,845.0 L868.7,845.6 L870.2,845.9 L871.7,846.6 L873.2,846.0 L874.7,846.7 L876.2,847.1 L877.7,847.3 L879.2,847.2 L880.7,847.1 L882.2,846.5 L883.7,847.1 L885.2,847.4 L886.7,846.5 L888.2,846.7 L889.7,847.5 L891.2,847.5 L892.7,847.4 L894.2,847.0 L895.7,846.3 L897.2,846.2 L898.7,846.7 L900.2,847.2 L901.7,846.9 L903.2,847.0 L904.7,847.1 L906.2,847.5 L907.7,846.7 L909.2,846.4 L910.7,846.5 L912.2,847.4 L913.7,846.8 L915.2,847.3 L916.7,846.6 L918.2,846.9 L919.7,846.2 L921.2,846.4 L922.7,847.4 L924.2,847.1 L925.7,846.3 L927.2,846.6 L928.7,846.7 L930.2,846.7 L931.7,846.3 L933.2,846.2 L934.7,846.8 L936.2,846.2 L937.7,846.8 L939.2,847.6 L940.7,846.6 L942.2,847.2 L943.7,847.8 L945.2,846.6 L946.7,848.0 L948.2,847.3 L949.7,847.5 L951.2,847.0 L952.7,847.7 L954.2,848.0 L955.7,848.0 L957.2,848.2 L958.7,847.7 L960.2,848.1 L961.7,847.6 L963.2,848.4 L964.7,843.8 L966.2,844.0 L967.7,843.1 L969.2,843.3 L970.7,843.4 L972.2,843.8 L973.7,844.2 L975.2,844.6 L976.7,843.8 L978.2,844.3 L979.7,845.0 L981.2,844.9 L982.7,845.1 L984.2,844.3 L985.7,844.1 L987.2,845.2 L988.7,844.4 L990.2,845.2 L991.7,844.8 L993.2,844.6 L994.7,845.0 L996.2,844.9 L997.7,845.5 L999.2,846.1 L1000.7,843.8 L1002.2,837.3 L1003.7,837.8 L1005.2,839.6 L1006.7,841.2 L1008.2,842.7 L1009.7,843.2 L1011.2,843.8 L1012.7,844.1 L1014.2,844.1 L1015.7,844.8 L1017.2,844.2 L1018.7,844.6 L1020.2,844.6 L1021.7,845.0 L1023.2,845.1 L1024.7,845.3 L1026.2,845.0 L1027.7,845.6 L1029.2,845.3 L1030.7,845.2 L1032.2,845.4 L1033.7,845.8 L1035.2,846.1 L1036.7,846.1 L1038.2,844.3 L1039.7,844.0 L1041.2,843.9 L1042.7,844.1 L1044.2,844.7 L1045.7,844.0 L1047.2,845.0 L1048.7,844.5 L1050.2,845.5 L1051.7,844.6 L1053.2,844.8 L1054.7,844.5 L1056.2,844.7 L1057.7,845.1 L1059.2,845.0 L1060.7,845.2 L1062.2,845.5 L1063.7,846.2 L1065.2,845.9 L1066.7,845.4 L1068.2,846.4 L1069.7,845.5 L1071.2,846.2 L1072.7,846.5 L1074.2,847.2 L1075.7,841.1 L1077.2,839.0 L1078.7,840.5 L1080.2,841.7 L1081.7,842.8 L1083.2,844.1 L1084.7,845.1 L1086.2,845.9 L1087.7,845.5 L1089.2,846.0 L1090.7,845.9 L1092.2,846.6 L1093.7,846.0 L1095.2,847.0 L1096.7,846.9 L1098.2,847.0 L1099.7,846.6 L1101.2,846.2 L1102.7,847.3 L1104.2,846.6 L1105.7,846.4 L1107.2,847.2 L1108.7,847.4 L1110.2,846.7 L1111.7,845.6 L1113.2,845.6 L1114.7,845.9 L1116.2,846.4 L1117.7,846.5 L1119.2,846.4 L1120.7,845.9 L1122.2,846.9 L1123.7,847.0 L1125.2,846.6 L1126.7,846.2 L1128.2,847.4 L1129.7,847.7 L1131.2,842.7 L1132.7,840.7 L1134.2,842.1 L1135.7,843.7 L1137.2,844.5 L1138.7,844.5 L1140.2,844.9 L1141.7,845.2 L1143.2,845.3 L1144.7,846.5 L1146.2,846.0 L1147.7,845.6 L1149.2,842.9 L1150.7,840.1 L1152.2,841.1 L1153.7,842.7 L1155.2,843.3 L1156.7,845.0 L1158.2,844.9 L1159.7,845.1 L1161.2,846.0 L1162.7,846.7 L1164,850Z" fill="#231f20"/>
</svg>
<div class="cl" style="left:4.70px;top:89px;width:71.72px;height:36px"><span style="left:5px;letter-spacing:-0.35px">SW_Kick_One_Shot</span></div>
<div class="cl" style="left:78.62px;top:89px;width:71.72px;height:36px"><span style="left:5px;letter-spacing:-0.35px">SW_Kick_One_Shot</span></div>
<div class="cl" style="left:152.54px;top:89px;width:71.72px;height:36px"><span style="left:5px;letter-spacing:-0.35px">SW_Kick_One_Shot</span></div>
<div class="cl" style="left:226.46px;top:89px;width:71.72px;height:36px"><span style="left:5px;letter-spacing:-0.35px">SW_Kick_One_Shot</span></div>
<div class="cl" style="left:300.38px;top:89px;width:71.72px;height:36px"><span style="left:5px;letter-spacing:-0.35px">SW_Kick_One_Shot</span></div>
<div class="cl" style="left:374.30px;top:89px;width:71.72px;height:36px"><span style="left:5px;letter-spacing:-0.35px">SW_Kick_One_Shot</span></div>
<div class="cl" style="left:448.22px;top:89px;width:71.72px;height:36px"><span style="left:5px;letter-spacing:-0.35px">SW_Kick_One_Shot</span></div>
<div class="cl" style="left:522.14px;top:89px;width:71.72px;height:36px"><span style="left:5px;letter-spacing:-0.35px">SW_Kick_One_Shot</span></div>
<div class="cl" style="left:596.06px;top:89px;width:71.72px;height:36px"><span style="left:5px;letter-spacing:-0.35px">SW_Kick_One_Shot</span></div>
<div class="cl" style="left:669.98px;top:89px;width:71.72px;height:36px"><span style="left:5px;letter-spacing:-0.35px">SW_Kick_One_Shot</span></div>
<div class="cl" style="left:743.90px;top:89px;width:71.72px;height:36px"><span style="left:5px;letter-spacing:-0.35px">SW_Kick_One_Shot</span></div>
<div class="cl" style="left:817.82px;top:89px;width:71.72px;height:36px"><span style="left:5px;letter-spacing:-0.35px">SW_Kick_One_Shot</span></div>
<div class="cl" style="left:891.74px;top:89px;width:71.72px;height:36px"><span style="left:5px;letter-spacing:-0.35px">SW_Kick_One_Shot</span></div>
<div class="cl" style="left:965.66px;top:89px;width:71.72px;height:36px"><span style="left:5px;letter-spacing:-0.35px">SW_Kick_One_Shot</span></div>
<div class="cl" style="left:1039.58px;top:89px;width:71.72px;height:36px"><span style="left:5px;letter-spacing:-0.35px">SW_Kick_One_Shot</span></div>
<div class="cl" style="left:1113.50px;top:89px;width:50.50px;height:36px"><span style="left:5px;letter-spacing:-0.35px">SW_Kick_One_Shot</span></div>
<div class="cl" style="left:78.62px;top:300px;width:71.72px;height:37px"><span style="left:5px;letter-spacing:-0.35px">SW_Clap_One</span></div>
<div class="cl" style="left:226.46px;top:300px;width:71.72px;height:37px"><span style="left:5px;letter-spacing:-0.35px">SW_Clap_One</span></div>
<div class="cl" style="left:374.30px;top:300px;width:71.72px;height:37px"><span style="left:5px;letter-spacing:-0.35px">SW_Clap_One</span></div>
<div class="cl" style="left:522.14px;top:300px;width:71.72px;height:37px"><span style="left:5px;letter-spacing:-0.35px">SW_Clap_One</span></div>
<div class="cl" style="left:669.98px;top:300px;width:71.72px;height:37px"><span style="left:5px;letter-spacing:-0.35px">SW_Clap_One</span></div>
<div class="cl" style="left:817.82px;top:300px;width:71.72px;height:37px"><span style="left:5px;letter-spacing:-0.35px">SW_Clap_One</span></div>
<div class="cl" style="left:965.66px;top:300px;width:71.72px;height:37px"><span style="left:5px;letter-spacing:-0.35px">SW_Clap_One</span></div>
<div class="cl" style="left:1113.50px;top:300px;width:50.50px;height:37px"><span style="left:5px;letter-spacing:-0.35px">SW_Clap_One</span></div>
<div class="cl" style="left:40.56px;top:429.5px;width:36.26px;height:36.5px"><span style="left:5px;letter-spacing:-0.35px">SW_OHH</span></div>
<div class="cl" style="left:114.48px;top:429.5px;width:36.26px;height:36.5px"><span style="left:5px;letter-spacing:-0.35px">SW_OHH</span></div>
<div class="cl" style="left:188.40px;top:429.5px;width:36.26px;height:36.5px"><span style="left:5px;letter-spacing:-0.35px">SW_OHH</span></div>
<div class="cl" style="left:262.32px;top:429.5px;width:36.26px;height:36.5px"><span style="left:5px;letter-spacing:-0.35px">SW_OHH</span></div>
<div class="cl" style="left:336.24px;top:429.5px;width:36.26px;height:36.5px"><span style="left:5px;letter-spacing:-0.35px">SW_OHH</span></div>
<div class="cl" style="left:410.16px;top:429.5px;width:36.26px;height:36.5px"><span style="left:5px;letter-spacing:-0.35px">SW_OHH</span></div>
<div class="cl" style="left:484.08px;top:429.5px;width:36.26px;height:36.5px"><span style="left:5px;letter-spacing:-0.35px">SW_OHH</span></div>
<div class="cl" style="left:558.00px;top:429.5px;width:36.26px;height:36.5px"><span style="left:5px;letter-spacing:-0.35px">SW_OHH</span></div>
<div class="cl" style="left:631.92px;top:429.5px;width:36.26px;height:36.5px"><span style="left:5px;letter-spacing:-0.35px">SW_OHH</span></div>
<div class="cl" style="left:705.84px;top:429.5px;width:36.26px;height:36.5px"><span style="left:5px;letter-spacing:-0.35px">SW_OHH</span></div>
<div class="cl" style="left:779.76px;top:429.5px;width:36.26px;height:36.5px"><span style="left:5px;letter-spacing:-0.35px">SW_OHH</span></div>
<div class="cl" style="left:853.68px;top:429.5px;width:36.26px;height:36.5px"><span style="left:5px;letter-spacing:-0.35px">SW_OHH</span></div>
<div class="cl" style="left:927.60px;top:429.5px;width:36.26px;height:36.5px"><span style="left:5px;letter-spacing:-0.35px">SW_OHH</span></div>
<div class="cl" style="left:1001.52px;top:429.5px;width:36.26px;height:36.5px"><span style="left:5px;letter-spacing:-0.35px">SW_OHH</span></div>
<div class="cl" style="left:1075.44px;top:429.5px;width:36.26px;height:36.5px"><span style="left:5px;letter-spacing:-0.35px">SW_OHH</span></div>
<div class="cl" style="left:1149.36px;top:429.5px;width:14.64px;height:36.5px"><span style="left:5px;letter-spacing:-0.35px">SW_OHH</span></div>
<div class="t" style="left:10.00px;top:565.48px;font-size:24px;line-height:24px;font-weight:400;color:#3a1e26;letter-spacing:0.992px;-webkit-text-stroke:0.25px currentColor;">SW_Glitch_Loop_01_Amin_128bpm</div>
<div class="t" style="left:10.00px;top:776.98px;font-size:24px;line-height:24px;font-weight:400;color:#3a1e26;letter-spacing:0.722px;-webkit-text-stroke:0.25px currentColor;">SW_Bass_Loop_01_Amin_128bpm</div>
<div style="left:1164px;top:0px;width:436px;height:56px;background:#464646;"></div>
<div style="left:1164px;top:56px;width:436px;height:4px;background:#2d2d2d;"></div>
<div style="left:1182px;top:-12px;width:59px;height:14.5px;background:#151515;border-radius:8px;"></div>
<div style="left:1272px;top:-5px;width:55px;height:8px;background:#262626;box-shadow:inset 0 0 0 1.5px #1a1a1a;"></div>
<div style="left:1337px;top:-5px;width:55px;height:7.5px;background:#8c4a33;box-shadow:inset 0 0 0 1.5px #1a1a1a;"></div>
<svg class="abs" style="left:1175.5px;top:14.3px" width="32" height="32" viewBox="-16 -16 32 32"><circle r="14.4" fill="#262626" stroke="#171717" stroke-width="2.2"/>
<path d="M-9,0 L0.8,-7.7 L0.8,-1.3 L8.3,-1.3 L8.3,1.3 L0.8,1.3 L0.8,7.7Z" fill="#f0e8d8"/></svg>
<svg class="abs" style="left:1214px;top:14.3px" width="32" height="32" viewBox="-16 -16 32 32"><circle r="14.4" fill="#262626" stroke="#171717" stroke-width="2.2"/>
<path d="M9,0 L-0.8,-7.7 L-0.8,-1.3 L-8.3,-1.3 L-8.3,1.3 L-0.8,1.3 L-0.8,7.7Z" fill="#9c948a"/></svg>
<div style="left:1164px;top:60px;width:5px;height:934px;background:#2d2d2d;"></div>
<div style="left:1169px;top:60px;width:235px;height:790px;background:#ff94a6;"></div>
<div style="left:1178px;top:82px;width:226px;height:5px;background:#2d2d2d;"></div>
<div style="left:1178px;top:82px;width:3px;height:768px;background:#2d2d2d;"></div>
<div style="left:1178px;top:293px;width:226px;height:5px;background:#2d2d2d;"></div>
<div style="left:1178px;top:423px;width:226px;height:4.5px;background:#2d2d2d;"></div>
<div style="left:1178px;top:552.5px;width:226px;height:4.5px;background:#2d2d2d;"></div>
<div style="left:1178px;top:764px;width:226px;height:4px;background:#2d2d2d;"></div>
<div style="left:1164px;top:850px;width:240px;height:7px;background:#2d2d2d;"></div>
<svg class="abs" style="left:1185px;top:91px" width="32" height="32" viewBox="-16 -16 32 32"><circle r="14.1" fill="none" stroke="#4a2530" stroke-width="2.4"/><path d="M-7,-4 L7,-4 L0,6.5Z" fill="#4a2530"/></svg>
<div class="t" style="left:1224.50px;top:96.08px;font-size:24px;line-height:24px;font-weight:700;color:#3a1e26;letter-spacing:-0.126px;">2 SW_Kick_On</div>
<svg class="abs" style="left:1185px;top:302px" width="32" height="32" viewBox="-16 -16 32 32"><circle r="14.1" fill="none" stroke="#4a2530" stroke-width="2.4"/><path d="M-7,-4 L7,-4 L0,6.5Z" fill="#4a2530"/></svg>
<div class="t" style="left:1224.50px;top:307.08px;font-size:24px;line-height:24px;font-weight:700;color:#3a1e26;letter-spacing:-0.064px;">3 SW_Clap_On</div>
<svg class="abs" style="left:1185px;top:432px" width="32" height="32" viewBox="-16 -16 32 32"><circle r="14.1" fill="none" stroke="#4a2530" stroke-width="2.4"/><path d="M-7,-4 L7,-4 L0,6.5Z" fill="#4a2530"/></svg>
<div class="t" style="left:1224.50px;top:437.08px;font-size:24px;line-height:24px;font-weight:700;color:#3a1e26;letter-spacing:-0.103px;">4 SW_OHH_On</div>
<svg class="abs" style="left:1185px;top:561.5px" width="32" height="32" viewBox="-16 -16 32 32"><circle r="14.1" fill="none" stroke="#4a2530" stroke-width="2.4"/><path d="M-7,-4 L7,-4 L0,6.5Z" fill="#4a2530"/></svg>
<div class="t" style="left:1224.50px;top:566.58px;font-size:24px;line-height:24px;font-weight:700;color:#3a1e26;letter-spacing:0.164px;">5 SW_Glitch_T</div>
<svg class="abs" style="left:1185px;top:773px" width="32" height="32" viewBox="-16 -16 32 32"><circle r="14.1" fill="none" stroke="#4a2530" stroke-width="2.4"/><path d="M-7,-4 L7,-4 L0,6.5Z" fill="#4a2530"/></svg>
<div class="t" style="left:1224.50px;top:778.08px;font-size:24px;line-height:24px;font-weight:700;color:#3a1e26;letter-spacing:-0.551px;">6 SW_Bass_Lo</div>
<div style="left:1169px;top:857px;width:235px;height:41px;background:#cdf0f9;"></div>
<svg class="abs" style="left:1173px;top:861.5px" width="32" height="32" viewBox="-16 -16 32 32"><circle r="14.1" fill="none" stroke="#3a4a50" stroke-width="2.4"/><path d="M-3.7,-7.7 L-3.7,7.7 L8,0Z" fill="#3a4a50"/></svg>
<div class="t" style="left:1215.00px;top:866.48px;font-size:24px;line-height:24px;font-weight:700;color:#2c3a3f;letter-spacing:-0.212px;">A Reverb</div>
<div style="left:1164px;top:898px;width:240px;height:5px;background:#2d2d2d;"></div>
<div style="left:1169px;top:903px;width:235px;height:41px;background:#10a4ee;"></div>
<svg class="abs" style="left:1173px;top:907px" width="32" height="32" viewBox="-16 -16 32 32"><circle r="14.1" fill="none" stroke="#06344f" stroke-width="2.4"/><path d="M-3.7,-7.7 L-3.7,7.7 L8,0Z" fill="#06344f"/></svg>
<div class="t" style="left:1215.00px;top:911.98px;font-size:24px;line-height:24px;font-weight:700;color:#06304a;letter-spacing:-0.506px;">B Delay</div>
<div style="left:1164px;top:944px;width:240px;height:4px;background:#2d2d2d;"></div>
<div style="left:1169px;top:948px;width:235px;height:41px;background:#3d3d3d;"></div>
<svg class="abs" style="left:1173px;top:952.5px" width="32" height="32" viewBox="-16 -16 32 32"><circle r="14.1" fill="none" stroke="#b8b8b8" stroke-width="2.4"/><path d="M-3.7,-7.7 L-3.7,7.7 L8,0Z" fill="#b8b8b8"/></svg>
<div class="t" style="left:1217.00px;top:957.48px;font-size:24px;line-height:24px;font-weight:700;color:#c4c4c4;letter-spacing:0.445px;">Main</div>
<div style="left:1164px;top:989px;width:240px;height:5px;background:#2d2d2d;"></div>
<div class="t" style="left:1094.00px;top:949.13px;font-size:38px;line-height:38px;font-weight:700;color:#8c8880;letter-spacing:5.090px;">1/8</div>
<div style="left:1404px;top:60px;width:5px;height:934px;background:#2d2d2d;"></div>
<div style="left:1409px;top:60px;width:177px;height:934px;background:#464646;"></div>
<div style="left:1586px;top:60px;width:5px;height:934px;background:#2d2d2d;"></div>
<div style="left:1591px;top:60px;width:9px;height:934px;background:#464646;"></div>
<div style="left:1409px;top:557px;width:177px;height:207px;background:#5f5e5c;"></div>
<div style="left:1591px;top:557px;width:9px;height:207px;background:#5f5e5c;"></div>
<div style="left:1404px;top:82px;width:196px;height:5px;background:#2d2d2d;"></div>
<div style="left:1404px;top:293px;width:196px;height:5px;background:#2d2d2d;"></div>
<div style="left:1404px;top:423px;width:196px;height:4.5px;background:#2d2d2d;"></div>
<div style="left:1404px;top:552.5px;width:196px;height:4.5px;background:#2d2d2d;"></div>
<div style="left:1404px;top:764px;width:196px;height:4px;background:#2d2d2d;"></div>
<div style="left:1404px;top:850px;width:196px;height:7px;background:#2d2d2d;"></div>
<div style="left:1404px;top:898px;width:196px;height:5px;background:#2d2d2d;"></div>
<div style="left:1404px;top:944px;width:196px;height:4px;background:#2d2d2d;"></div>
<div style="left:1404px;top:989px;width:196px;height:5px;background:#2d2d2d;"></div>
<div style="left:1414px;top:92px;width:168px;height:31px;background:#2c2c2c;box-shadow:inset 0 0 0 2px #111111;"></div>
<div class="t" style="left:1418.50px;top:96.18px;font-size:24px;line-height:24px;font-weight:400;color:#f0e8d8;letter-spacing:0.329px;-webkit-text-stroke:0.6px currentColor;">Ext. In</div>
<svg class="abs" style="left:1560px;top:101.5px" width="17" height="11.5" viewBox="0 0 17 11.5"><path d="M0,0 L17,0 L8.5,11.5Z" fill="#f0e8d8"/></svg>
<div style="left:1414px;top:133px;width:168px;height:31px;background:#2c2c2c;box-shadow:inset 0 0 0 2px #111111;"></div>
<div class="t" style="left:1418.50px;top:137.18px;font-size:24px;line-height:24px;font-weight:400;color:#a59c8d;letter-spacing:0.000px;-webkit-text-stroke:0.25px currentColor;">1</div>
<svg class="abs" style="left:1560px;top:142.5px" width="17" height="11.5" viewBox="0 0 17 11.5"><path d="M0,0 L17,0 L8.5,11.5Z" fill="#a59c8d"/></svg>
<div style="left:1414px;top:174px;width:40px;height:30.5px;background:#2c2c2c;box-shadow:inset 0 0 0 2px #111111;"></div>
<div class="t" style="left:1424.00px;top:178.18px;font-size:24px;line-height:24px;font-weight:400;color:#a59c8d;letter-spacing:-0.014px;-webkit-text-stroke:0.25px currentColor;">In</div>
<div style="left:1462px;top:174px;width:64px;height:30.5px;background:#2c2c2c;box-shadow:inset 0 0 0 2px #111111;"></div>
<div class="t" style="left:1467.00px;top:178.18px;font-size:24px;line-height:24px;font-weight:400;color:#a59c8d;letter-spacing:1.544px;-webkit-text-stroke:0.25px currentColor;">Auto</div>
<div style="left:1534px;top:174px;width:48px;height:30.5px;background:#b5aa9c;box-shadow:inset 0 0 0 2px #111111;"></div>
<div class="t" style="left:1539.00px;top:178.18px;font-size:24px;line-height:24px;font-weight:400;color:#2a2a2a;letter-spacing:3.216px;-webkit-text-stroke:0.25px currentColor;">Off</div>
<div style="left:1414px;top:215px;width:168px;height:31px;background:#2c2c2c;box-shadow:inset 0 0 0 2px #111111;"></div>
<div class="t" style="left:1418.50px;top:219.18px;font-size:24px;line-height:24px;font-weight:400;color:#f0e8d8;letter-spacing:0.438px;-webkit-text-stroke:0.6px currentColor;">Samples</div>
<svg class="abs" style="left:1560px;top:224.5px" width="17" height="11.5" viewBox="0 0 17 11.5"><path d="M0,0 L17,0 L8.5,11.5Z" fill="#f0e8d8"/></svg>
<div style="left:1414px;top:256px;width:168px;height:31px;background:#464646;box-shadow:inset 0 0 0 2px #111111;"></div>
<div style="left:1414px;top:303px;width:40px;height:30.5px;background:#2c2c2c;box-shadow:inset 0 0 0 2px #111111;"></div>
<div class="t" style="left:1424.00px;top:307.18px;font-size:24px;line-height:24px;font-weight:400;color:#a59c8d;letter-spacing:-0.014px;-webkit-text-stroke:0.25px currentColor;">In</div>
<div style="left:1462px;top:303px;width:64px;height:30.5px;background:#2c2c2c;box-shadow:inset 0 0 0 2px #111111;"></div>
<div class="t" style="left:1467.00px;top:307.18px;font-size:24px;line-height:24px;font-weight:400;color:#a59c8d;letter-spacing:1.544px;-webkit-text-stroke:0.25px currentColor;">Auto</div>
<div style="left:1534px;top:303px;width:48px;height:30.5px;background:#b5aa9c;box-shadow:inset 0 0 0 2px #111111;"></div>
<div class="t" style="left:1539.00px;top:307.18px;font-size:24px;line-height:24px;font-weight:400;color:#2a2a2a;letter-spacing:3.216px;-webkit-text-stroke:0.25px currentColor;">Off</div>
<div style="left:1414px;top:344px;width:168px;height:31px;background:#2c2c2c;box-shadow:inset 0 0 0 2px #111111;"></div>
<div class="t" style="left:1418.50px;top:348.18px;font-size:24px;line-height:24px;font-weight:400;color:#f0e8d8;letter-spacing:0.438px;-webkit-text-stroke:0.6px currentColor;">Samples</div>
<svg class="abs" style="left:1560px;top:353.5px" width="17" height="11.5" viewBox="0 0 17 11.5"><path d="M0,0 L17,0 L8.5,11.5Z" fill="#f0e8d8"/></svg>
<div style="left:1414px;top:385px;width:168px;height:31px;background:#464646;box-shadow:inset 0 0 0 2px #111111;"></div>
<div style="left:1414px;top:432.5px;width:40px;height:30.5px;background:#2c2c2c;box-shadow:inset 0 0 0 2px #111111;"></div>
<div class="t" style="left:1424.00px;top:436.68px;font-size:24px;line-height:24px;font-weight:400;color:#a59c8d;letter-spacing:-0.014px;-webkit-text-stroke:0.25px currentColor;">In</div>
<div style="left:1462px;top:432.5px;width:64px;height:30.5px;background:#2c2c2c;box-shadow:inset 0 0 0 2px #111111;"></div>
<div class="t" style="left:1467.00px;top:436.68px;font-size:24px;line-height:24px;font-weight:400;color:#a59c8d;letter-spacing:1.544px;-webkit-text-stroke:0.25px currentColor;">Auto</div>
<div style="left:1534px;top:432.5px;width:48px;height:30.5px;background:#b5aa9c;box-shadow:inset 0 0 0 2px #111111;"></div>
<div class="t" style="left:1539.00px;top:436.68px;font-size:24px;line-height:24px;font-weight:400;color:#2a2a2a;letter-spacing:3.216px;-webkit-text-stroke:0.25px currentColor;">Off</div>
<div style="left:1414px;top:473.5px;width:168px;height:31px;background:#2c2c2c;box-shadow:inset 0 0 0 2px #111111;"></div>
<div class="t" style="left:1418.50px;top:477.68px;font-size:24px;line-height:24px;font-weight:400;color:#f0e8d8;letter-spacing:0.438px;-webkit-text-stroke:0.6px currentColor;">Samples</div>
<svg class="abs" style="left:1560px;top:483px" width="17" height="11.5" viewBox="0 0 17 11.5"><path d="M0,0 L17,0 L8.5,11.5Z" fill="#f0e8d8"/></svg>
<div style="left:1414px;top:514.5px;width:168px;height:31px;background:#464646;box-shadow:inset 0 0 0 2px #111111;"></div>
<div style="left:1414px;top:562px;width:168px;height:31px;background:#2c2c2c;box-shadow:inset 0 0 0 2px #111111;"></div>
<div class="t" style="left:1418.50px;top:566.18px;font-size:24px;line-height:24px;font-weight:400;color:#f0e8d8;letter-spacing:0.329px;-webkit-text-stroke:0.6px currentColor;">Ext. In</div>
<svg class="abs" style="left:1560px;top:571.5px" width="17" height="11.5" viewBox="0 0 17 11.5"><path d="M0,0 L17,0 L8.5,11.5Z" fill="#f0e8d8"/></svg>
<div style="left:1414px;top:603px;width:168px;height:31px;background:#2c2c2c;box-shadow:inset 0 0 0 2px #111111;"></div>
<div class="t" style="left:1418.50px;top:607.18px;font-size:24px;line-height:24px;font-weight:400;color:#a59c8d;letter-spacing:0.000px;-webkit-text-stroke:0.25px currentColor;">1</div>
<svg class="abs" style="left:1560px;top:612.5px" width="17" height="11.5" viewBox="0 0 17 11.5"><path d="M0,0 L17,0 L8.5,11.5Z" fill="#a59c8d"/></svg>
<div style="left:1414px;top:644px;width:40px;height:30.5px;background:#2c2c2c;box-shadow:inset 0 0 0 2px #111111;"></div>
<div class="t" style="left:1424.00px;top:648.18px;font-size:24px;line-height:24px;font-weight:400;color:#a59c8d;letter-spacing:-0.014px;-webkit-text-stroke:0.25px currentColor;">In</div>
<div style="left:1462px;top:644px;width:64px;height:30.5px;background:#2c2c2c;box-shadow:inset 0 0 0 2px #111111;"></div>
<div class="t" style="left:1467.00px;top:648.18px;font-size:24px;line-height:24px;font-weight:400;color:#a59c8d;letter-spacing:1.544px;-webkit-text-stroke:0.25px currentColor;">Auto</div>
<div style="left:1534px;top:644px;width:48px;height:30.5px;background:#b5aa9c;box-shadow:inset 0 0 0 2px #111111;"></div>
<div class="t" style="left:1539.00px;top:648.18px;font-size:24px;line-height:24px;font-weight:400;color:#2a2a2a;letter-spacing:3.216px;-webkit-text-stroke:0.25px currentColor;">Off</div>
<div style="left:1414px;top:685px;width:168px;height:31px;background:#2c2c2c;box-shadow:inset 0 0 0 2px #111111;"></div>
<div class="t" style="left:1418.50px;top:689.18px;font-size:24px;line-height:24px;font-weight:400;color:#f0e8d8;letter-spacing:0.438px;-webkit-text-stroke:0.6px currentColor;">Samples</div>
<svg class="abs" style="left:1560px;top:694.5px" width="17" height="11.5" viewBox="0 0 17 11.5"><path d="M0,0 L17,0 L8.5,11.5Z" fill="#f0e8d8"/></svg>
<div style="left:1414px;top:726px;width:168px;height:31px;background:#5f5e5c;box-shadow:inset 0 0 0 2px #111111;"></div>
<div style="left:1414px;top:773px;width:168px;height:31px;background:#2c2c2c;box-shadow:inset 0 0 0 2px #111111;"></div>
<div class="t" style="left:1418.50px;top:777.18px;font-size:24px;line-height:24px;font-weight:400;color:#f0e8d8;letter-spacing:0.329px;-webkit-text-stroke:0.6px currentColor;">Ext. In</div>
<svg class="abs" style="left:1560px;top:782.5px" width="17" height="11.5" viewBox="0 0 17 11.5"><path d="M0,0 L17,0 L8.5,11.5Z" fill="#f0e8d8"/></svg>
<div style="left:1414px;top:814px;width:168px;height:31px;background:#2c2c2c;box-shadow:inset 0 0 0 2px #111111;"></div>
<div class="t" style="left:1418.50px;top:818.18px;font-size:24px;line-height:24px;font-weight:400;color:#a59c8d;letter-spacing:0.000px;-webkit-text-stroke:0.25px currentColor;">1</div>
<svg class="abs" style="left:1560px;top:823.5px" width="17" height="11.5" viewBox="0 0 17 11.5"><path d="M0,0 L17,0 L8.5,11.5Z" fill="#a59c8d"/></svg>
<div style="left:1414px;top:862.5px;width:168px;height:30px;background:#464646;box-shadow:inset 0 0 0 2px #111111;"></div>
<div style="left:1414px;top:908px;width:168px;height:30px;background:#464646;box-shadow:inset 0 0 0 2px #111111;"></div>
<div style="left:1414px;top:953px;width:168px;height:31px;background:#2c2c2c;box-shadow:inset 0 0 0 2px #111111;"></div>
<div style="left:1418px;top:958px;width:3.5px;height:24px;background:#3a3a3a;"></div>
<div style="left:1423.5px;top:958px;width:3.5px;height:24px;background:#3a3a3a;"></div>
<div class="t" style="left:1440.00px;top:956.98px;font-size:24px;line-height:24px;font-weight:400;color:#f0e8d8;letter-spacing:2.320px;-webkit-text-stroke:0.6px currentColor;">1/2</div>
<svg class="abs" style="left:1560px;top:962.5px" width="17" height="11.5" viewBox="0 0 17 11.5"><path d="M0,0 L17,0 L8.5,11.5Z" fill="#f0e8d8"/></svg>
<div style="left:1596px;top:92px;width:6px;height:31px;background:#ffad56;box-shadow:inset 0 0 0 1.5px #1f1f1f;"></div>
<div style="left:1596px;top:133px;width:6px;height:31px;background:#12879c;box-shadow:inset 0 0 0 1.5px #1f1f1f;"></div>
<div style="left:1596px;top:174px;width:6px;height:31px;background:#2c2c2c;box-shadow:inset 0 0 0 1.5px #1f1f1f;"></div>
<div style="left:1596px;top:562px;width:6px;height:31px;background:#ffad56;box-shadow:inset 0 0 0 1.5px #1f1f1f;"></div>
<div style="left:1596px;top:603px;width:6px;height:31px;background:#12879c;box-shadow:inset 0 0 0 1.5px #1f1f1f;"></div>
<div style="left:1596px;top:644px;width:6px;height:31px;background:#2c2c2c;box-shadow:inset 0 0 0 1.5px #1f1f1f;"></div>
<div style="left:1596px;top:773px;width:6px;height:31px;background:#ffad56;box-shadow:inset 0 0 0 1.5px #1f1f1f;"></div>
<div style="left:1596px;top:814px;width:6px;height:31px;background:#12879c;box-shadow:inset 0 0 0 1.5px #1f1f1f;"></div>
<div style="left:1596px;top:303px;width:6px;height:30.5px;background:#ffad56;box-shadow:inset 0 0 0 1.5px #1f1f1f;"></div>
<div style="left:1596px;top:344px;width:6px;height:31px;background:#12879c;box-shadow:inset 0 0 0 1.5px #1f1f1f;"></div>
<div style="left:1596px;top:385px;width:6px;height:31px;background:#12879c;box-shadow:inset 0 0 0 1.5px #1f1f1f;"></div>
<div style="left:1596px;top:432.5px;width:6px;height:30.5px;background:#ffad56;box-shadow:inset 0 0 0 1.5px #1f1f1f;"></div>
<div style="left:1596px;top:473.5px;width:6px;height:31px;background:#12879c;box-shadow:inset 0 0 0 1.5px #1f1f1f;"></div>
<div style="left:1596px;top:514.5px;width:6px;height:31px;background:#12879c;box-shadow:inset 0 0 0 1.5px #1f1f1f;"></div>
<div style="left:1596px;top:862.5px;width:6px;height:30px;background:#ffad56;box-shadow:inset 0 0 0 1.5px #1f1f1f;"></div>
<div style="left:1596px;top:908px;width:6px;height:30px;background:#ffad56;box-shadow:inset 0 0 0 1.5px #1f1f1f;"></div>
<div style="left:1596px;top:953px;width:6px;height:31px;background:#12879c;box-shadow:inset 0 0 0 1.5px #1f1f1f;"></div>
<div style="left:1596px;top:60px;width:6px;height:15px;background:#2d2d2d;box-shadow:inset 0 0 0 1.5px #1f1f1f;"></div>
<div style="left:2.3px;top:994px;width:1598px;height:50px;background:#464646;border-bottom-left-radius:6px;"></div>
<div style="left:0px;top:1044px;width:1600px;height:17.5px;background:#353535;"></div>
<div style="left:2.7px;top:994px;width:1.8px;height:19px;background:#a8a090;"></div>
<div style="left:2.7px;top:1011.3px;width:4.5px;height:1.8px;background:#a8a090;"></div>
<div class="t" style="left:10.00px;top:1000.78px;font-size:24px;line-height:24px;font-weight:400;color:#e6dcc4;letter-spacing:0.765px;-webkit-text-stroke:0.3px #e6dcc4;">0:00</div>
<div style="left:81.55px;top:994px;width:1.8px;height:4.7px;background:#a8a090;"></div>
<div style="left:160.4px;top:994px;width:1.8px;height:4.7px;background:#a8a090;"></div>
<div style="left:239.25px;top:994px;width:1.8px;height:4.7px;background:#a8a090;"></div>
<div style="left:318.1px;top:994px;width:1.8px;height:19px;background:#a8a090;"></div>
<div style="left:318.1px;top:1011.3px;width:4.5px;height:1.8px;background:#a8a090;"></div>
<div class="t" style="left:325.40px;top:1000.78px;font-size:24px;line-height:24px;font-weight:400;color:#e6dcc4;letter-spacing:0.765px;-webkit-text-stroke:0.3px #e6dcc4;">0:02</div>
<div style="left:396.95px;top:994px;width:1.8px;height:4.7px;background:#a8a090;"></div>
<div style="left:475.8px;top:994px;width:1.8px;height:4.7px;background:#a8a090;"></div>
<div style="left:554.65px;top:994px;width:1.8px;height:4.7px;background:#a8a090;"></div>
<div style="left:633.5px;top:994px;width:1.8px;height:19px;background:#a8a090;"></div>
<div style="left:633.5px;top:1011.3px;width:4.5px;height:1.8px;background:#a8a090;"></div>
<div class="t" style="left:640.80px;top:1000.78px;font-size:24px;line-height:24px;font-weight:400;color:#e6dcc4;letter-spacing:0.765px;-webkit-text-stroke:0.3px #e6dcc4;">0:04</div>
<div style="left:712.35px;top:994px;width:1.8px;height:4.7px;background:#a8a090;"></div>
<div style="left:791.2px;top:994px;width:1.8px;height:4.7px;background:#a8a090;"></div>
<div style="left:870.05px;top:994px;width:1.8px;height:4.7px;background:#a8a090;"></div>
<div style="left:948.9px;top:994px;width:1.8px;height:19px;background:#a8a090;"></div>
<div style="left:948.9px;top:1011.3px;width:4.5px;height:1.8px;background:#a8a090;"></div>
<div class="t" style="left:956.20px;top:1000.78px;font-size:24px;line-height:24px;font-weight:400;color:#e6dcc4;letter-spacing:0.765px;-webkit-text-stroke:0.3px #e6dcc4;">0:06</div>
<div style="left:1027.75px;top:994px;width:1.8px;height:4.7px;background:#a8a090;"></div>
<div style="left:1106.6px;top:994px;width:1.8px;height:4.7px;background:#a8a090;"></div>
<div style="left:1169.5px;top:1004px;width:35px;height:30.5px;background:#ffad56;box-shadow:inset 0 0 0 2px #111111;"></div>
<svg class="abs" style="left:1173px;top:1008px" width="28" height="23" viewBox="0 0 28 23"><g stroke="#2a2118" stroke-width="2.2" stroke-linecap="round"><path d="M4,9 V14 M9,5 V18 M14,2 V21 M19,6 V17 M24,9.5 V13.5"/></g></svg>
<div style="left:1212px;top:1004px;width:84.5px;height:30.5px;background:#2c2c2c;box-shadow:inset 0 0 0 2px #111111;"></div>
<div style="left:1214px;top:1006px;width:24px;height:26.5px;background:#03778a;"></div>
<div class="t" style="left:1220.50px;top:1007.48px;font-size:24px;line-height:24px;font-weight:400;color:#f0e8d8;letter-spacing:0.823px;-webkit-text-stroke:0.25px currentColor;">1.00x</div>
<div style="left:1322.5px;top:1004px;width:36px;height:30.5px;background:#2c2c2c;box-shadow:inset 0 0 0 2px #111111;"></div>
<div class="t" style="left:1331.83px;top:1007.48px;font-size:24px;line-height:24px;font-weight:400;color:#f0e8d8;letter-spacing:0.000px;-webkit-text-stroke:0.25px currentColor;">H</div>
<div style="left:1365.5px;top:1004px;width:36px;height:30.5px;background:#2c2c2c;box-shadow:inset 0 0 0 2px #111111;"></div>
<div class="t" style="left:1372.17px;top:1007.48px;font-size:24px;line-height:24px;font-weight:400;color:#f0e8d8;letter-spacing:0.000px;-webkit-text-stroke:0.25px currentColor;">W</div>
<div style="left:0px;top:1061px;width:1600px;height:5px;background:#b5aa9c;"></div>
<div style="left:0px;top:1066px;width:406px;height:450px;background:#5f5e5c;border-top-right-radius:6px;border-bottom-right-radius:6px;"></div>
<div style="left:406px;top:1066px;width:21px;height:450px;background:#353535;"></div>
<div style="left:410.5px;top:1162px;width:4.5px;height:259px;background:#222;"></div>
<div style="left:417.5px;top:1162px;width:4.5px;height:259px;background:#222;"></div>
<div style="left:410px;top:1188px;width:13px;height:1.5px;background:#353535;"></div>
<svg class="abs" style="left:290px;top:1070.2px" width="32" height="32" viewBox="-16 -16 32 32"><circle r="14.15" fill="#262626" stroke="#191919" stroke-width="2.4"/>
<g fill="none" stroke="#f0e8d8" stroke-width="2.7"><path d="M1.3,-7.4 A7.6,7.6 0 0 0 -7.4,-0.5"/><path d="M-1.3,7.6 A7.6,7.6 0 0 0 7.5,0.6"/></g><path d="M-11.8,-1.6 L-3.2,-1.6 L-7.6,4Z" fill="#f0e8d8"/><path d="M11.8,1.4 L3.2,1.4 L7.6,-4.2Z" fill="#f0e8d8"/>
</svg>
<svg class="abs" style="left:328.3px;top:1070.2px" width="32" height="32" viewBox="-16 -16 32 32"><circle r="14.15" fill="#262626" stroke="#191919" stroke-width="2.4"/>
<path d="M-8.4,-7.9 H6 L8.8,-5.1 V8.6 H-8.4Z" fill="#f0e8d8"/><rect x="-3.6" y="-5.6" width="6.8" height="4.1" fill="#262626"/>
</svg>
<svg class="abs" style="left:366.8px;top:1070.2px" width="32" height="32" viewBox="-16 -16 32 32"><circle r="14.15" fill="#262626" stroke="#191919" stroke-width="2.4"/>
<circle cx="-7.4" r="2.5" fill="#f0e8d8"/><circle cx="0" r="2.5" fill="#f0e8d8"/><circle cx="7.4" r="2.5" fill="#f0e8d8"/>
</svg>
<div style="left:0px;top:1107px;width:271px;height:321px;background:#1b1b1b;border-top-right-radius:4px;border-bottom-right-radius:5px;overflow:hidden;"></div>
<div style="left:36.1px;top:1107px;width:1.8px;height:321px;background:#383634;"></div>
<div style="left:70.6px;top:1107px;width:1.8px;height:321px;background:#383634;"></div>
<div style="left:96.7px;top:1107px;width:1.8px;height:321px;background:#383634;"></div>
<div style="left:117.9px;top:1107px;width:1.8px;height:321px;background:#383634;"></div>
<div style="left:136.6px;top:1107px;width:1.8px;height:321px;background:#383634;"></div>
<div style="left:151.1px;top:1107px;width:1.8px;height:321px;background:#383634;"></div>
<div style="left:166.1px;top:1107px;width:1.8px;height:321px;background:#383634;"></div>
<div style="left:257.6px;top:1107px;width:1.8px;height:321px;background:#383634;"></div>
<div style="left:178.5px;top:1107px;width:1.6px;height:296px;background:#4a4844;"></div>
<div style="left:0px;top:1138.7px;width:271px;height:1.8px;background:#383634;"></div>
<div style="left:0px;top:1202.7px;width:271px;height:1.8px;background:#383634;"></div>
<div style="left:0px;top:1331.1px;width:271px;height:1.8px;background:#383634;"></div>
<div style="left:0px;top:1395.1px;width:271px;height:1.8px;background:#383634;"></div>
<div style="left:151.2px;top:1396px;width:1.6px;height:6px;background:#6a665e;"></div>
<div style="left:166.2px;top:1396px;width:1.6px;height:6px;background:#6a665e;"></div>
<div style="left:178.5px;top:1396px;width:1.6px;height:6px;background:#6a665e;"></div>
<div style="left:0px;top:1265.8px;width:271px;height:4.1px;background:#08c4dc;"></div>
<svg class="abs" style="left:-23px;top:1250px" width="34" height="34" viewBox="-17 -17 34 34"><circle r="14" fill="none" stroke="#ffad56" stroke-width="3"/></svg>
<div class="t" style="left:-11.00px;top:1258.56px;font-size:18px;line-height:18px;font-weight:400;color:#ffad56;letter-spacing:0.000px;-webkit-text-stroke:0.25px currentColor;">4</div>
<svg class="abs" style="left:60.8px;top:1250px" width="34" height="34" viewBox="-17 -17 34 34"><circle r="14" fill="none" stroke="#ffad56" stroke-width="3"/></svg>
<div class="t" style="left:72.80px;top:1258.56px;font-size:18px;line-height:18px;font-weight:400;color:#ffad56;letter-spacing:0.000px;-webkit-text-stroke:0.25px currentColor;">5</div>
<div class="t" style="left:156.80px;top:1403.98px;font-size:24px;line-height:24px;font-weight:400;color:#d8d0be;letter-spacing:0.904px;-webkit-text-stroke:0.25px currentColor;">10k</div>
<div style="left:-10px;top:1433.2px;width:55.4px;height:78.8px;background:#464646;border-radius:5px;"></div>
<div style="left:50.3px;top:1433.2px;width:107.7px;height:78.8px;background:#464646;border-radius:5px;"></div>
<div style="left:163.3px;top:1433.2px;width:107.7px;height:78.8px;background:#464646;border-radius:5px;"></div>
<div style="left:-20px;top:1440.3px;width:56px;height:31px;background:#464646;box-shadow:inset 0 0 0 2.2px #111;"></div>
<svg class="abs" style="left:14.2px;top:1450px" width="16.8" height="11.6" viewBox="0 0 16.8 11.6"><path d="M0,0 L16.8,0 L8.4,11.6Z" fill="#f0e8d8"/></svg>
<div style="left:60px;top:1440.3px;width:88.5px;height:31px;background:#464646;box-shadow:inset 0 0 0 2.2px #111;"></div>
<svg class="abs" style="left:126.7px;top:1450px" width="16.8" height="11.6" viewBox="0 0 16.8 11.6"><path d="M0,0 L16.8,0 L8.4,11.6Z" fill="#f0e8d8"/></svg>
<div style="left:173.5px;top:1440.3px;width:87.5px;height:31px;background:#464646;box-shadow:inset 0 0 0 2.2px #111;"></div>
<svg class="abs" style="left:239.2px;top:1450px" width="16.8" height="11.6" viewBox="0 0 16.8 11.6"><path d="M0,0 L16.8,0 L8.4,11.6Z" fill="#f0e8d8"/></svg>
<svg class="abs" style="left:64px;top:1445px" width="44" height="22" viewBox="0 0 44 22"><path d="M3,11 H7 C11.5,11 13,2.2 18,2.2 H25 C30,2.2 31.5,11 36,11 H39.5 M7,11 C11.5,11 13,19.8 18,19.8 H25 C30,19.8 31.5,11 36,11" fill="none" stroke="#f0e8d8" stroke-width="2.4"/></svg>
<svg class="abs" style="left:177px;top:1445px" width="44" height="22" viewBox="0 0 44 22"><path d="M3,3.5 H30 Q38,3.5 38,12 V19" fill="none" stroke="#f0e8d8" stroke-width="2"/></svg>
<div style="left:77.25px;top:1479.25px;width:25.7px;height:25.5px;background:#242424;box-shadow:inset 0 0 0 2px #111;"></div>
<div style="left:190.2px;top:1479.25px;width:25.7px;height:25.5px;background:#242424;box-shadow:inset 0 0 0 2px #111;"></div>
<div class="t" style="left:5.50px;top:1480.08px;font-size:24px;line-height:24px;font-weight:400;color:#f0e8d8;letter-spacing:0.000px;-webkit-text-stroke:0.25px currentColor;">6</div>
<div class="t" style="left:118.00px;top:1480.08px;font-size:24px;line-height:24px;font-weight:400;color:#f0e8d8;letter-spacing:0.000px;-webkit-text-stroke:0.25px currentColor;">7</div>
<div class="t" style="left:230.50px;top:1480.08px;font-size:24px;line-height:24px;font-weight:400;color:#f0e8d8;letter-spacing:0.000px;-webkit-text-stroke:0.25px currentColor;">8</div>
<div style="left:276px;top:1107px;width:125px;height:405px;background:#464646;border-radius:5px;"></div>
<div style="left:283px;top:1121px;width:50.5px;height:31px;background:#252525;box-shadow:inset 0 0 0 2px #111111;"></div>
<svg class="abs" style="left:294.4px;top:1123px" width="28" height="28" viewBox="-14 -14 28 28"><path d="M-5.2,8.3 A9,9 0 1 1 5.2,8.3" fill="none" stroke="#c4bcb0" stroke-width="2.9"/><path d="M-9.8,2 Q-4.5,2.5 -2.6,10.6 L-6.5,10.3 Q-9.5,7 -9.8,2Z M9.8,2 Q4.5,2.5 2.6,10.6 L6.5,10.3 Q9.5,7 9.8,2Z" fill="#c4bcb0"/></svg>
<div style="left:344px;top:1121px;width:49.5px;height:31px;background:#ffad56;box-shadow:inset 0 0 0 2px #111111;"></div>
<svg class="abs" style="left:350px;top:1126px" width="38" height="21" viewBox="0 0 38 21"><g stroke="#3a2a14" stroke-width="2.2"><path d="M3,19 V14 M8,19 V6 M13,19 V10 M18,19 V3 M23,19 V8 M28,19 V12 M33,19 V16"/></g></svg>
<div class="t" style="left:284.00px;top:1161.48px;font-size:24px;line-height:24px;font-weight:700;color:#f0e8d8;letter-spacing:0.615px;">Mode</div>
<div style="left:283px;top:1189px;width:110px;height:30.5px;background:#242424;box-shadow:inset 0 0 0 2px #111111;"></div>
<div class="t" style="left:288.50px;top:1192.48px;font-size:24px;line-height:24px;font-weight:400;color:#f0e8d8;letter-spacing:1.259px;-webkit-text-stroke:0.25px currentColor;">Stereo</div>
<svg class="abs" style="left:372.5px;top:1198px" width="16" height="11" viewBox="0 0 16 11"><path d="M0,0 L16,0 L8,11Z" fill="#f0e8d8"/></svg>
<div class="t" style="left:284.00px;top:1228.08px;font-size:24px;line-height:24px;font-weight:700;color:#f0e8d8;letter-spacing:-0.109px;">Edit</div>
<div style="left:283px;top:1256.7px;width:110px;height:30px;background:#222;box-shadow:inset 0 0 0 2px #111111;"></div>
<div class="t" style="left:331.83px;top:1259.98px;font-size:24px;line-height:24px;font-weight:400;color:#8a8478;letter-spacing:0.000px;-webkit-text-stroke:0.25px currentColor;">L</div>
<div class="t" style="left:284.00px;top:1298.28px;font-size:24px;line-height:24px;font-weight:700;color:#f0e8d8;letter-spacing:0.287px;">Adapt. Q</div>
<div style="left:283px;top:1326px;width:110px;height:30px;background:#ffad56;box-shadow:inset 0 0 0 2px #111111;"></div>
<div class="t" style="left:323.50px;top:1329.48px;font-size:24px;line-height:24px;font-weight:400;color:#111;letter-spacing:-2.014px;-webkit-text-stroke:0.25px currentColor;">On</div>
<div class="t" style="left:284.00px;top:1367.48px;font-size:24px;line-height:24px;font-weight:700;color:#f0e8d8;letter-spacing:-0.429px;">Scale</div>
<div style="left:283px;top:1395.6px;width:110px;height:30px;background:#242424;box-shadow:inset 0 0 0 2px #111111;"></div>
<div style="left:285.5px;top:1397.6px;width:79.5px;height:26px;background:#03778a;"></div>
<div class="t" style="left:305.50px;top:1399.28px;font-size:24px;line-height:24px;font-weight:400;color:#f0e8d8;letter-spacing:-0.262px;-webkit-text-stroke:0.25px currentColor;">100 %</div>
<div class="t" style="left:284.00px;top:1439.08px;font-size:24px;line-height:24px;font-weight:700;color:#f0e8d8;letter-spacing:-0.780px;">Gain</div>
<div style="left:283px;top:1467.7px;width:110px;height:30px;background:#242424;box-shadow:inset 0 0 0 2px #111111;"></div>
<div style="left:285.5px;top:1469.7px;width:53px;height:26px;background:#03778a;"></div>
<div class="t" style="left:295.50px;top:1471.48px;font-size:24px;line-height:24px;font-weight:400;color:#f0e8d8;letter-spacing:0.379px;-webkit-text-stroke:0.25px currentColor;">0.00 dB</div>
<div style="left:0px;top:1516px;width:1600px;height:5.5px;background:#b5aa9c;"></div>
<div style="left:0px;top:1521.5px;width:1600px;height:17.5px;background:#353535;"></div>
<div style="left:427px;top:1066px;width:1180px;height:452px;background:#ffdc9c;border-top-left-radius:7px;border-bottom-left-radius:7px;"></div>
<div style="left:432px;top:1107px;width:1175px;height:406px;background:#464646;"></div>
<svg class="abs" style="left:436.3px;top:1070.2px" width="32" height="32" viewBox="-16 -16 32 32"><circle r="14" fill="#ffad56" stroke="#2a2a2a" stroke-width="2.2"/></svg>
<div class="t" style="left:478.40px;top:1075.48px;font-size:24px;line-height:24px;font-weight:700;color:#111;letter-spacing:0.244px;">Stereo Sculptor by Sample Werks</div>
<svg class="abs" style="left:876px;top:1072px" width="26" height="27" viewBox="0 0 26 27"><g fill="#3b36e6"><path d="M6,12 L2.2,4.5 L4.2,3.5 L8.5,10.5Z"/><path d="M9.5,10 L7.5,1.5 L9.8,1 L12,9.5Z"/><path d="M13,9.5 L13.2,0.5 L15.6,0.6 L15.5,9.8Z"/><path d="M16.5,10.2 L19,2 L21.2,2.7 L19,11Z"/><path d="M20,12.5 L23.5,8 L25.3,9.4 L22,15Z"/><path d="M5,11 Q13,8 21,11.5 Q23,18 19,24 Q13,27 8.5,24 Q4.5,18 5,11Z"/></g></svg>
<div style="left:948.5px;top:1071.6px;width:73.5px;height:29.5px;background:#242424;border-radius:15px;box-shadow:inset 0 0 0 2px #131313;"></div>
<div class="t" style="left:956.30px;top:1074.98px;font-size:24px;line-height:24px;font-weight:700;color:#f0e8d8;letter-spacing:-0.665px;">Rand</div>
<div style="left:1032.3px;top:1071.6px;width:59.7px;height:29.5px;background:#242424;box-shadow:inset 0 0 0 2px #131313;"></div>
<div class="t" style="left:1037.50px;top:1074.98px;font-size:24px;line-height:24px;font-weight:700;color:#f0e8d8;letter-spacing:0.502px;">Map</div>
<svg class="abs" style="left:1506.5px;top:1070.2px" width="32" height="32" viewBox="-16 -16 32 32"><circle r="14.15" fill="#262626" stroke="#191919" stroke-width="2.4"/>
<g fill="none" stroke="#f0e8d8" stroke-width="2.7"><path d="M1.3,-7.4 A7.6,7.6 0 0 0 -7.4,-0.5"/><path d="M-1.3,7.6 A7.6,7.6 0 0 0 7.5,0.6"/></g><path d="M-11.8,-1.6 L-3.2,-1.6 L-7.6,4Z" fill="#f0e8d8"/><path d="M11.8,1.4 L3.2,1.4 L7.6,-4.2Z" fill="#f0e8d8"/>
</svg>
<svg class="abs" style="left:1547.5px;top:1070.2px" width="32" height="32" viewBox="-16 -16 32 32"><circle r="14.15" fill="#262626" stroke="#191919" stroke-width="2.4"/>
<path d="M-8.4,-7.9 H6 L8.8,-5.1 V8.6 H-8.4Z" fill="#f0e8d8"/><rect x="-3.6" y="-5.6" width="6.8" height="4.1" fill="#262626"/>
</svg>
<svg class="abs" style="left:1588.5px;top:1070.2px" width="32" height="32" viewBox="-16 -16 32 32"><circle r="14.15" fill="#262626" stroke="#191919" stroke-width="2.4"/>
<circle cx="-7.4" r="2.5" fill="#f0e8d8"/><circle cx="0" r="2.5" fill="#f0e8d8"/><circle cx="7.4" r="2.5" fill="#f0e8d8"/>
</svg>
<svg class="abs" style="left:436.3px;top:1116px" width="32" height="32" viewBox="-16 -16 32 32"><circle r="14.15" fill="#464646" stroke="#464646" stroke-width="2.4"/>
<circle r="15.3" fill="#ffad56"/><path d="M7.3,3.2 A8,8 0 1 0 -3.2,7.4" fill="none" stroke="#464646" stroke-width="3.4"/><path d="M-0.5,-1 L6.5,5.5" stroke="#464646" stroke-width="3.4" stroke-linecap="round"/>
</svg>
<svg class="abs" style="left:436.3px;top:1156.8px" width="32" height="32" viewBox="-16 -16 32 32"><circle r="14.15" fill="#262626" stroke="#191919" stroke-width="2.4"/>
<path d="M-7,0 H7 M0,-7 V7" stroke="#f0e8d8" stroke-width="2.2"/>
</svg>
<svg class="abs" style="left:436.3px;top:1192.3px" width="32" height="32" viewBox="-16 -16 32 32"><circle r="14.15" fill="#262626" stroke="#191919" stroke-width="2.4"/>
<path d="M-6.5,0 H6.5" stroke="#8a8478" stroke-width="2.2"/>
</svg>
<svg class="abs" style="left:436.3px;top:1233.6px" width="32" height="32" viewBox="-16 -16 32 32"><circle r="14.15" fill="#ffad56" stroke="#ffad56" stroke-width="2.4"/>
<path d="M-7.5,-4.5 H-3.5 L-2.5,-7 H2.5 L3.5,-4.5 H7.5 V6.5 H-7.5Z" fill="#464646"/><path d="M-3.5,1 H3.5 M0,-2.5 V4.5" stroke="#ffad56" stroke-width="2.4"/>
</svg>
<svg class="abs" style="left:436.3px;top:1274.3px" width="32" height="32" viewBox="-16 -16 32 32"><circle r="14.15" fill="#b5aa9c" stroke="#b5aa9c" stroke-width="2.4"/>
<rect x="-10.5" y="-5.5" width="21" height="11" rx="3.5" fill="#464646"/><path d="M-7.5,-1.8 H7.5" stroke="#b5aa9c" stroke-width="2.2"/>
</svg>
<svg class="abs" style="left:436.3px;top:1315px" width="32" height="32" viewBox="-16 -16 32 32"><circle r="14.15" fill="#ffad56" stroke="#ffad56" stroke-width="2.4"/>
<circle cx="-7" cy="-5" r="1.4" fill="#464646"/><path d="M-3.5,-5 H8" stroke="#464646" stroke-width="2.2"/>
<circle cx="-7" cy="0" r="1.4" fill="#464646"/><path d="M-3.5,0 H8" stroke="#464646" stroke-width="2.2"/>
<circle cx="-7" cy="5" r="1.4" fill="#464646"/><path d="M-3.5,5 H8" stroke="#464646" stroke-width="2.2"/>
</svg>
<div style="left:573.8px;top:1119.8px;width:102.6px;height:29.7px;background:#242424;border-radius:15px;box-shadow:inset 0 0 0 2px #131313;"></div>
<div class="t" style="left:600.25px;top:1122.98px;font-size:24px;line-height:24px;font-weight:700;color:#f0e8d8;letter-spacing:0.077px;">New</div>
<div style="left:478.4px;top:1158px;width:293.6px;height:346px;background:#464646;box-shadow:inset 0 0 0 2px #323232;border-radius:4px;"></div>
<div style="left:478.4px;top:1202.6px;width:293.6px;height:2px;background:#323232;"></div>
<svg class="abs" style="left:489px;top:1165.5px" width="32" height="32" viewBox="-16 -16 32 32"><circle r="14.15" fill="#262626" stroke="#191919" stroke-width="2.4"/>
<path d="M-7.5,-4.5 H-3.5 L-2.5,-7 H2.5 L3.5,-4.5 H7.5 V6.5 H-7.5Z" fill="#f0e8d8"/><path d="M-3.5,1 H3.5 M0,-2.5 V4.5" stroke="#262626" stroke-width="2.4"/>
</svg>
<div class="t" style="left:531.50px;top:1169.18px;font-size:24px;line-height:24px;font-weight:400;color:#f0e8d8;letter-spacing:2.697px;-webkit-text-stroke:0.6px currentColor;">*Off</div>
<svg class="abs" style="left:737px;top:1168.5px" width="26" height="26" viewBox="0 0 26 26"><path d="M2.5,2 L24,13 L2.5,24Z" fill="#f0e8d8" stroke="#2a2a2a" stroke-width="1.6"/></svg>
<div style="left:478.4px;top:1248.2px;width:293.6px;height:2px;background:#323232;"></div>
<svg class="abs" style="left:489px;top:1211.1px" width="32" height="32" viewBox="-16 -16 32 32"><circle r="14.15" fill="#262626" stroke="#191919" stroke-width="2.4"/>
<path d="M-7.5,-4.5 H-3.5 L-2.5,-7 H2.5 L3.5,-4.5 H7.5 V6.5 H-7.5Z" fill="#f0e8d8"/><path d="M-3.5,1 H3.5 M0,-2.5 V4.5" stroke="#262626" stroke-width="2.4"/>
</svg>
<div class="t" style="left:543.00px;top:1214.78px;font-size:24px;line-height:24px;font-weight:400;color:#f0e8d8;letter-spacing:1.227px;-webkit-text-stroke:0.6px currentColor;">Subtle Lift</div>
<svg class="abs" style="left:737px;top:1214.1px" width="26" height="26" viewBox="0 0 26 26"><path d="M2.5,2 L24,13 L2.5,24Z" fill="#2a2a2a" stroke="#2a2a2a" stroke-width="1.6"/></svg>
<div style="left:478.4px;top:1293.8px;width:293.6px;height:2px;background:#323232;"></div>
<svg class="abs" style="left:489px;top:1256.7px" width="32" height="32" viewBox="-16 -16 32 32"><circle r="14.15" fill="#262626" stroke="#191919" stroke-width="2.4"/>
<path d="M-7.5,-4.5 H-3.5 L-2.5,-7 H2.5 L3.5,-4.5 H7.5 V6.5 H-7.5Z" fill="#f0e8d8"/><path d="M-3.5,1 H3.5 M0,-2.5 V4.5" stroke="#262626" stroke-width="2.4"/>
</svg>
<div class="abs" style="left:543px;top:1258.7px;width:189px;height:30px;overflow:hidden">
<div class="t" style="left:0;top:1.68px;font-size:24px;line-height:24px;font-weight:400;-webkit-text-stroke:0.6px #f0e8d8;color:#f0e8d8;letter-spacing:0.95px">Balanced Spread</div></div>
<svg class="abs" style="left:737px;top:1259.7px" width="26" height="26" viewBox="0 0 26 26"><path d="M2.5,2 L24,13 L2.5,24Z" fill="#2a2a2a" stroke="#2a2a2a" stroke-width="1.6"/></svg>
<div style="left:478.4px;top:1339.4px;width:293.6px;height:2px;background:#323232;"></div>
<svg class="abs" style="left:489px;top:1302.3px" width="32" height="32" viewBox="-16 -16 32 32"><circle r="14.15" fill="#262626" stroke="#191919" stroke-width="2.4"/>
<path d="M-7.5,-4.5 H-3.5 L-2.5,-7 H2.5 L3.5,-4.5 H7.5 V6.5 H-7.5Z" fill="#f0e8d8"/><path d="M-3.5,1 H3.5 M0,-2.5 V4.5" stroke="#262626" stroke-width="2.4"/>
</svg>
<div class="t" style="left:543.00px;top:1305.98px;font-size:24px;line-height:24px;font-weight:400;color:#f0e8d8;letter-spacing:0.570px;-webkit-text-stroke:0.6px currentColor;">Wide &amp; Clean</div>
<svg class="abs" style="left:737px;top:1305.3px" width="26" height="26" viewBox="0 0 26 26"><path d="M2.5,2 L24,13 L2.5,24Z" fill="#2a2a2a" stroke="#2a2a2a" stroke-width="1.6"/></svg>
<div style="left:478.4px;top:1385px;width:293.6px;height:2px;background:#323232;"></div>
<svg class="abs" style="left:489px;top:1347.9px" width="32" height="32" viewBox="-16 -16 32 32"><circle r="14.15" fill="#262626" stroke="#191919" stroke-width="2.4"/>
<path d="M-7.5,-4.5 H-3.5 L-2.5,-7 H2.5 L3.5,-4.5 H7.5 V6.5 H-7.5Z" fill="#f0e8d8"/><path d="M-3.5,1 H3.5 M0,-2.5 V4.5" stroke="#262626" stroke-width="2.4"/>
</svg>
<div class="t" style="left:543.00px;top:1351.58px;font-size:24px;line-height:24px;font-weight:400;color:#f0e8d8;letter-spacing:0.796px;-webkit-text-stroke:0.6px currentColor;">Full Sculpt</div>
<svg class="abs" style="left:737px;top:1350.9px" width="26" height="26" viewBox="0 0 26 26"><path d="M2.5,2 L24,13 L2.5,24Z" fill="#2a2a2a" stroke="#2a2a2a" stroke-width="1.6"/></svg>
<div class="t" style="left:526.00px;top:1432.18px;font-size:24px;line-height:24px;font-weight:400;color:#f0e8d8;letter-spacing:1.315px;-webkit-text-stroke:0.6px currentColor;">Macro Variations</div>
<div style="left:787.5px;top:1117px;width:245px;height:387px;background:#464646;box-shadow:inset 0 0 0 2px #323232;border-radius:4px;"></div>
<div style="left:789.5px;top:1119px;width:241px;height:67px;background:#d4fce0;border-top-left-radius:3px;border-top-right-radius:3px;"></div>
<div class="t" style="left:819.25px;top:1126.48px;font-size:24px;line-height:24px;font-weight:400;color:#111;letter-spacing:1.250px;-webkit-text-stroke:0.25px currentColor;">Sculpt Intensity</div>
<svg class="abs" style="left:0;top:0" width="1600" height="1600" viewBox="0 0 1600 1600">
<path d="M887.83,1362.62 A42,42 0 0 1 907.04,1285.56" fill="none" stroke="#0bb8d6" stroke-width="6"/>
<path d="M912.90,1285.46 A42,42 0 0 1 933.57,1362.62" fill="none" stroke="#171717" stroke-width="6"/>
<path d="M910.6,1318.5 L908.6,1286" stroke="#171717" stroke-width="5" stroke-linecap="round"/>
</svg>
<div class="t" style="left:895.50px;top:1375.28px;font-size:24px;line-height:24px;font-weight:400;color:#f0e8d8;letter-spacing:0.308px;-webkit-text-stroke:0.25px currentColor;">61</div>
<div style="left:1046px;top:1180px;width:560px;height:324px;background:#464646;box-shadow:inset 0 0 0 2px #323232;"></div>
<div style="left:1053.7px;top:1131.3px;width:43.3px;height:30.2px;background:#242424;box-shadow:inset 0 0 0 2px #131313;"></div>
<svg class="abs" style="left:1062px;top:1138px" width="28" height="17" viewBox="0 0 28 17"><path d="M2,4 V13 M6,4 V13" stroke="#f0e8d8" stroke-width="2"/><path d="M10,1.5 L22,8.5 L10,15.5Z" fill="#f0e8d8"/></svg>
<div style="left:1435px;top:1131.3px;width:72px;height:30.2px;background:#242424;box-shadow:inset 0 0 0 2px #131313;"></div>
<div class="t" style="left:1438.50px;top:1134.98px;font-size:24px;line-height:24px;font-weight:400;color:#f0e8d8;letter-spacing:0.574px;-webkit-text-stroke:0.6px currentColor;">Chain</div>
<div style="left:1514.8px;top:1131.3px;width:71.5px;height:30.5px;background:#02c4dc;box-shadow:inset 0 0 0 2px #131313;"></div>
<div class="t" style="left:1525.00px;top:1134.98px;font-size:24px;line-height:24px;font-weight:400;color:#0a0a0a;letter-spacing:0.547px;-webkit-text-stroke:0.25px currentColor;">Hide</div>
<div style="left:1048px;top:1182px;width:181px;height:42.5px;background:#d4fce0;"></div>
<div class="t" style="left:1054.30px;top:1190.48px;font-size:24px;line-height:24px;font-weight:400;color:#2e2e2e;letter-spacing:0.687px;-webkit-text-stroke:0.25px currentColor;">Stereo Scul...</div>
<div style="left:1229px;top:1181.5px;width:380px;height:43.3px;background:#937f5a;"></div>
<div style="left:1234px;top:1185px;width:4.6px;height:36px;background:#2a2a2a;"></div>
<div style="left:1241.5px;top:1185px;width:4.6px;height:36px;background:#2a2a2a;"></div>
<div style="left:1590px;top:1185px;width:4.6px;height:36px;background:#2a2a2a;"></div>
<div style="left:1597.5px;top:1185px;width:4.6px;height:36px;background:#2a2a2a;"></div>
<div style="left:1048px;top:1224.8px;width:560px;height:1.7px;background:#323232;"></div>
<div style="left:1253px;top:1186.3px;width:90.7px;height:30.3px;background:#242424;box-shadow:inset 0 0 0 2px #131313;"></div>
<div style="left:1255px;top:1188.3px;width:74px;height:26.3px;background:#03778a;"></div>
<div class="t" style="left:1262.50px;top:1189.98px;font-size:24px;line-height:24px;font-weight:400;color:#f0e8d8;letter-spacing:0.324px;-webkit-text-stroke:0.25px currentColor;">0.0 dB</div>
<div style="left:1354px;top:1186.3px;width:90.7px;height:30.3px;background:#242424;box-shadow:inset 0 0 0 2px #131313;"></div>
<div class="t" style="left:1391.33px;top:1189.98px;font-size:24px;line-height:24px;font-weight:400;color:#f0e8d8;letter-spacing:0.000px;-webkit-text-stroke:0.25px currentColor;">C</div>
<div style="left:1454.3px;top:1186.3px;width:38.5px;height:30.3px;background:#ffad56;box-shadow:inset 0 0 0 2px #131313;"></div>
<svg class="abs" style="left:1461px;top:1191px" width="25" height="21" viewBox="0 0 25 21"><path d="M4.3,6.5 H9 V15.5 H4.3Z M9,6.5 L16.5,1.8 V20.2 L9,15.5" fill="none" stroke="#1c1408" stroke-width="2.4" stroke-linejoin="round"/></svg>
<div style="left:1502.4px;top:1186.3px;width:38.6px;height:30.3px;background:#242424;box-shadow:inset 0 0 0 2px #131313;"></div>
<div class="t" style="left:1513.70px;top:1189.98px;font-size:24px;line-height:24px;font-weight:400;color:#f0e8d8;letter-spacing:0.000px;-webkit-text-stroke:0.25px currentColor;">S</div>
<svg class="abs" style="left:1549.7px;top:1185.5px" width="32" height="32" viewBox="-16 -16 32 32"><circle r="14.15" fill="#262626" stroke="#191919" stroke-width="2.4"/>
<g fill="none" stroke="#f0e8d8" stroke-width="2.7"><path d="M1.3,-7.4 A7.6,7.6 0 0 0 -7.4,-0.5"/><path d="M-1.3,7.6 A7.6,7.6 0 0 0 7.5,0.6"/></g><path d="M-11.8,-1.6 L-3.2,-1.6 L-7.6,4Z" fill="#f0e8d8"/><path d="M11.8,1.4 L3.2,1.4 L7.6,-4.2Z" fill="#f0e8d8"/>
</svg>
<div class="t" style="left:1184.20px;top:1353.78px;font-size:24px;line-height:24px;font-weight:400;color:#f0e8d8;letter-spacing:0.999px;-webkit-text-stroke:0.6px currentColor;">Drop Audio Effects Here</div>
<div style="left:0px;top:1539px;width:1600px;height:45px;background:#353535;"></div>
<div style="left:0px;top:1584px;width:1600px;height:16px;background:#333;"></div>
<div style="left:-10px;top:1539px;width:480px;height:45px;background:#464646;border-radius:6px;"></div>
<div style="left:492px;top:1539px;width:527.5px;height:45px;background:#464646;border-radius:6px;"></div>
<div style="left:538px;top:1539px;width:1.5px;height:45px;background:#2a2a2a;"></div>
<svg class="abs" style="left:508px;top:1552px" width="17" height="19" viewBox="0 0 17 19"><path d="M1,1 L15.5,9.5 L1,18Z" fill="#f0e8d8"/></svg>
<div style="left:1042px;top:1539px;width:45px;height:45px;background:#ffad56;border-top-left-radius:6px;border-bottom-left-radius:6px;"></div>
<svg class="abs" style="left:1055px;top:1552.5px" width="19" height="16" viewBox="0 0 19 16"><path d="M9.5,0.5 L18.5,15.5 H0.5Z" fill="#111"/></svg>
<div style="left:1087px;top:1539px;width:404px;height:45px;background:#464646;"></div>
<div class="t" style="left:1105.00px;top:1550.48px;font-size:24px;line-height:24px;font-weight:700;color:#f0e8d8;letter-spacing:0.578px;">5-SW_Glitch_Texture_Amin_02</div>
<div style="left:1490.5px;top:1539px;width:120px;height:45px;background:#2c2c2c;"></div>
<div style="left:1490.5px;top:1539px;width:17px;height:45px;background:#3c3c3c;"></div>
<div style="left:1491.5px;top:1540px;width:3px;height:2.5px;background:#ffad56;"></div>
<div style="left:1495.5px;top:1540.3px;width:8px;height:2px;background:#8a857a;"></div>
<div style="left:1493px;top:1545px;width:7px;height:1.8px;background:#6d6960;"></div>
<div style="left:1493px;top:1548.5px;width:9px;height:1.8px;background:#55524c;"></div>
<div style="left:1493px;top:1552px;width:8px;height:1.8px;background:#6d6960;"></div>
<div style="left:1493px;top:1557px;width:7px;height:1.8px;background:#6d6960;"></div>
<div style="left:1493px;top:1562px;width:6px;height:1.8px;background:#55524c;"></div>
<div style="left:1493px;top:1567px;width:8px;height:1.8px;background:#6d6960;"></div>
<div style="left:1493px;top:1571px;width:11px;height:1.8px;background:#1e1e1e;"></div>
<div style="left:1493px;top:1576px;width:11px;height:1.8px;background:#8a857a;"></div>
<div style="left:1493px;top:1580px;width:9px;height:1.8px;background:#6d6960;"></div>
<svg class="abs" style="left:1500px;top:1528px" width="100" height="68" viewBox="1500 1528 100 68"><rect x="1509.7" y="1536.5" width="110" height="50" rx="8.5" fill="#2a2a2a" stroke="#b5aa9c" stroke-width="5"/><rect x="1512.3" y="1539" width="16" height="45" fill="#3b3b3b"/><rect x="1525.5" y="1546" width="1.5" height="30" fill="#2a2a2a"/><rect x="1514" y="1541" width="8" height="1.6" fill="#77736a"/><rect x="1515" y="1549" width="6" height="1.6" fill="#77736a"/><circle cx="1516.5" cy="1555.5" r="3" fill="#2c2c2c"/><rect x="1513" y="1561" width="8" height="1.6" fill="#77736a"/><rect x="1513.5" y="1566" width="7" height="1.6" fill="#77736a"/><circle cx="1516.5" cy="1572" r="3" fill="#2c2c2c"/><rect x="1513" y="1580" width="9" height="1.6" fill="#77736a"/><rect x="1528.5" y="1539" width="80" height="45" fill="#444"/><rect x="1528.5" y="1539" width="80" height="4.2" fill="#5c5c5c"/><rect x="1530" y="1539.8" width="2.8" height="2.6" fill="#ffad56"/><rect x="1537" y="1540" width="11" height="2.2" fill="#cfc8b8"/><circle cx="1535" cy="1549.5" r="3.2" fill="#2c2c2c"/><path d="M1532.5,1551.5 A3.2,3.2 0 0 1 1534,1546.6" stroke="#19a9c2" stroke-width="1.2" fill="none"/><rect x="1531" y="1553.5" width="8" height="1.5" fill="#77736a"/><rect x="1532" y="1557.5" width="6" height="1.5" fill="#77736a"/><rect x="1531" y="1567.5" width="8" height="1.6" fill="#8a857a"/><circle cx="1535" cy="1577" r="3.2" fill="#2c2c2c"/><path d="M1532.5,1579 A3.2,3.2 0 0 1 1534,1574" stroke="#19a9c2" stroke-width="1.2" fill="none"/><rect x="1532" y="1581.5" width="6" height="1.3" fill="#77736a"/><rect x="1542.4" y="1543.6" width="66" height="31.5" fill="#171717"/><g stroke="#262624" stroke-width="0.8"><path d="M1542.4,1549.5 H1608 M1542.4,1556 H1608 M1542.4,1562.5 H1608 M1542.4,1569 H1608 M1552,1543.6 V1575 M1561,1543.6 V1575 M1570,1543.6 V1575 M1579,1543.6 V1575 M1588,1543.6 V1575 M1597,1543.6 V1575"/></g><path d="M1568.5,1575 Q1570,1567 1572,1565 Q1578,1559.5 1596,1559" fill="none" stroke="#128a9e" stroke-width="1.3"/><circle cx="1572" cy="1565" r="1.9" fill="#ffad56"/><circle cx="1596" cy="1559" r="1.9" fill="#ffad56"/><rect x="1542.4" y="1576" width="66" height="8" fill="#4a4a4a"/><g fill="#19a9c2"><rect x="1556" y="1580" width="2.6" height="2.4"/><rect x="1567.5" y="1580" width="2.6" height="2.4"/><rect x="1579" y="1580" width="2.6" height="2.4"/><rect x="1590.5" y="1580" width="2.6" height="2.4"/></g><g fill="#77736a"><rect x="1544" y="1577" width="6" height="1.4"/><rect x="1555" y="1577" width="7" height="1.4"/><rect x="1567" y="1577" width="7" height="1.4"/><rect x="1578" y="1577" width="7" height="1.4"/><rect x="1590" y="1577" width="7" height="1.4"/></g><rect x="1509.7" y="1536.5" width="110" height="50" rx="8.5" fill="none" stroke="#b5aa9c" stroke-width="5"/></svg>
</div></body></html>
